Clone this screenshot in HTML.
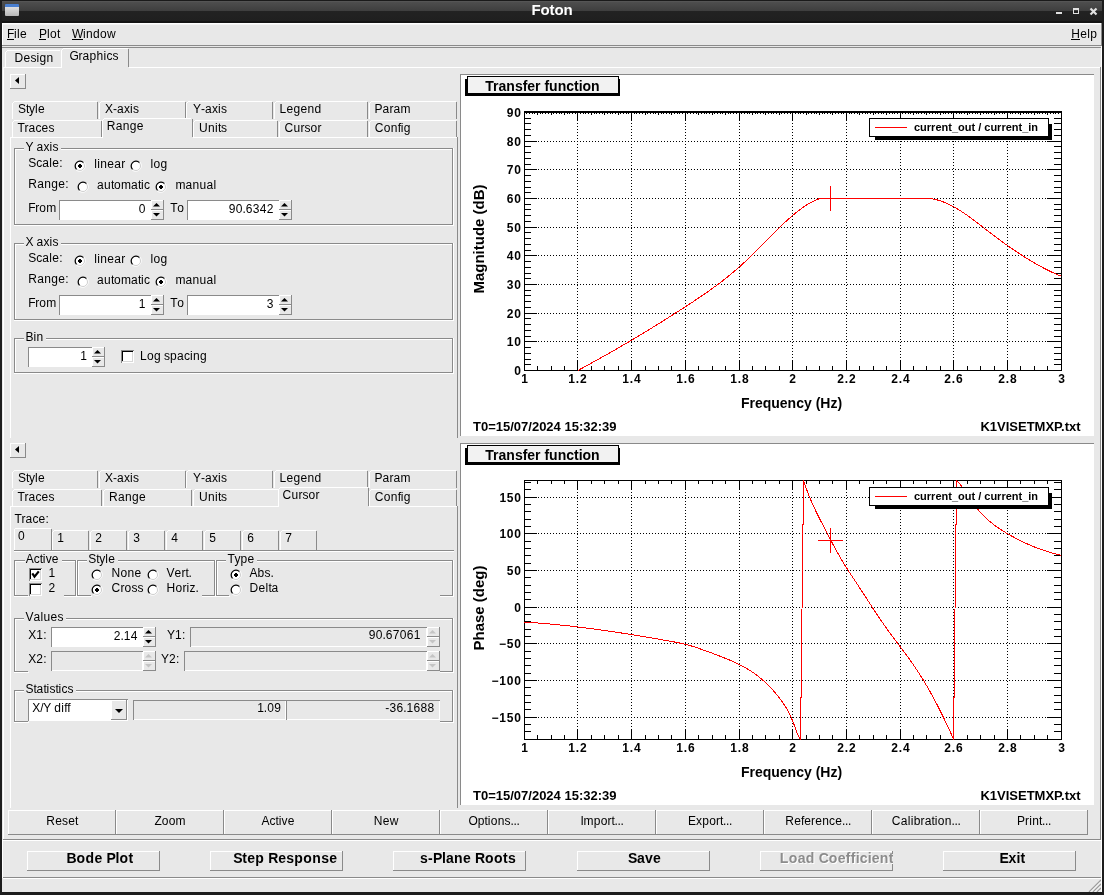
<!DOCTYPE html>
<html><head><meta charset="utf-8"><style>
html,body{margin:0;padding:0;}
body{width:1104px;height:895px;background:#e8e8e8;position:relative;overflow:hidden;font-family:"Liberation Sans", sans-serif;}
body>div{position:absolute;}
div div{position:absolute;}
.t{white-space:nowrap;}
i{display:inline-block;font-style:normal;}
</style></head><body><div id="root" style="left:0;top:0;width:1104px;height:895px;will-change:transform">
<div style="left:0;top:0;width:1104px;height:23px;background:linear-gradient(#1a1a1a 0px,#1a1a1a 1px,#5c5c5c 1px,#4e4e4e 2px,#3e3e3e 11px,#222 11px,#1f1f1f 21px,#151515 21px)"></div>
<div class="t" style="left:252px;width:600px;text-align:center;top:0.72px;font-size:15px;line-height:17.23px;font-weight:bold;color:#fff;"><i style="width:9px">F</i><i style="width:9px">o</i><i style="width:5px">t</i><i style="width:9px">o</i><i style="width:9px">n</i></div>
<div style="left:5px;top:4px;width:14px;height:12px;background:linear-gradient(#4a7fd0 0,#4a7fd0 3px,#e0e0e0 3px,#b8b8b8 12px);border-radius:1px"></div>
<div style="left:1056px;top:12px;width:6px;height:2px;background:#e0e0e0;"></div>
<div style="left:1073px;top:8px;width:4px;height:3px;border:1px solid #e0e0e0;border-top-width:2px"></div>
<svg style="position:absolute;left:1089px;top:7px" width="9" height="9"><path d="M1.5,1.5 L7.5,7.5 M7.5,1.5 L1.5,7.5" stroke="#e0e0e0" stroke-width="2.2"/></svg>
<div style="left:0px;top:0px;width:2px;height:895px;background:#1c1c1c;"></div>
<div style="left:1102px;top:0px;width:2px;height:895px;background:#1c1c1c;"></div>
<div style="left:1101px;top:46px;width:1px;height:846px;background:#ffffff;"></div>
<div style="left:1101px;top:23px;width:1px;height:23px;background:#8a8a8a;"></div>
<div style="left:0px;top:892px;width:1104px;height:3px;background:#1c1c1c;"></div>
<div style="left:2px;top:23px;width:1099px;height:1px;background:#ffffff;"></div>
<div style="left:3px;top:24px;width:1098px;height:1px;background:#f4f4f4;"></div>
<div style="left:2px;top:23px;width:1px;height:22px;background:#ffffff;"></div>
<div style="left:2px;top:45px;width:1099px;height:1px;background:#8a8a8a;"></div>
<div style="left:2px;top:47px;width:1099px;height:1px;background:#8a8a8a;"></div>
<div class="t" style="left:7px;top:27.64px;font-size:12px;line-height:13.79px;color:#000;"><i style="width:7px">F</i><i style="width:3px">i</i><i style="width:3px">l</i><i style="width:7px">e</i></div>
<div class="t" style="left:39px;top:27.64px;font-size:12px;line-height:13.79px;color:#000;"><i style="width:8px">P</i><i style="width:3px">l</i><i style="width:7px">o</i><i style="width:3px">t</i></div>
<div class="t" style="left:72px;top:27.64px;font-size:12px;line-height:13.79px;color:#000;"><i style="width:11px">W</i><i style="width:3px">i</i><i style="width:7px">n</i><i style="width:7px">d</i><i style="width:7px">o</i><i style="width:9px">w</i></div>
<div style="left:7px;top:39px;width:7px;height:1px;background:#000;"></div>
<div style="left:39px;top:39px;width:7px;height:1px;background:#000;"></div>
<div style="left:72px;top:39px;width:11px;height:1px;background:#000;"></div>
<div class="t" style="left:497px;width:600px;text-align:right;top:27.64px;font-size:12px;line-height:13.79px;color:#000;"><i style="width:9px">H</i><i style="width:7px">e</i><i style="width:3px">l</i><i style="width:7px">p</i></div>
<div style="left:1071px;top:39px;width:9px;height:1px;background:#000;"></div>
<div style="left:7px;top:50px;width:53px;height:1px;background:#ffffff;"></div>
<div style="left:6px;top:51px;width:1px;height:1px;background:#ffffff;"></div>
<div style="left:5px;top:52px;width:1px;height:15px;background:#ffffff;"></div>
<div class="t" style="left:14.5px;top:51.64px;font-size:12px;line-height:13.79px;color:#000;"><i style="width:9px">D</i><i style="width:7px">e</i><i style="width:6px">s</i><i style="width:3px">i</i><i style="width:7px">g</i><i style="width:7px">n</i></div>
<div style="left:63px;top:48px;width:65px;height:1px;background:#ffffff;"></div>
<div style="left:62px;top:49px;width:1px;height:1px;background:#ffffff;"></div>
<div style="left:61px;top:50px;width:1px;height:17px;background:#ffffff;"></div>
<div style="left:128px;top:49px;width:1px;height:18px;background:#8a8a8a;"></div>
<div class="t" style="left:69.5px;top:50.14px;font-size:12px;line-height:13.79px;color:#000;"><i style="width:9px">G</i><i style="width:4px">r</i><i style="width:7px">a</i><i style="width:7px">p</i><i style="width:7px">h</i><i style="width:3px">i</i><i style="width:6px">c</i><i style="width:6px">s</i></div>
<div style="left:3px;top:67px;width:59px;height:1px;background:#ffffff;"></div>
<div style="left:129px;top:67px;width:972px;height:1px;background:#ffffff;"></div>
<div style="left:3px;top:67px;width:1px;height:773px;background:#ffffff;"></div>
<div style="left:1100px;top:67px;width:1px;height:773px;background:#8a8a8a;"></div>
<div style="left:3px;top:839px;width:1098px;height:1px;background:#8a8a8a;"></div>
<div style="left:3px;top:840px;width:1098px;height:1px;background:#ffffff;"></div>
<div style="left:2px;top:840px;width:1px;height:38px;background:#ffffff;"></div>
<div style="left:3px;top:877px;width:1098px;height:1px;background:#8a8a8a;"></div>
<div style="left:3px;top:878px;width:1098px;height:1px;background:#ffffff;"></div>
<svg style="position:absolute;left:1088px;top:879px" width="13" height="13"><path d="M13,1 L1,13 M13,5 L5,13 M13,9 L9,13" stroke="#9d9d9d" stroke-width="1.3"/><path d="M13,2.5 L2.5,13 M13,6.5 L6.5,13 M13,10.5 L10.5,13" stroke="#fff" stroke-width="0.8"/></svg>
<div style="left:8px;top:810px;width:108px;height:1px;background:#ffffff;"></div>
<div style="left:8px;top:810px;width:1px;height:25px;background:#ffffff;"></div>
<div style="left:8px;top:834px;width:108px;height:1px;background:#8a8a8a;"></div>
<div style="left:115px;top:810px;width:1px;height:25px;background:#8a8a8a;"></div>
<div class="t" style="left:-238.0px;width:600px;text-align:center;top:815.34px;font-size:12px;line-height:13.79px;color:#000;"><i style="width:9px">R</i><i style="width:7px">e</i><i style="width:6px">s</i><i style="width:7px">e</i><i style="width:3px">t</i></div>
<div style="left:116px;top:810px;width:108px;height:1px;background:#ffffff;"></div>
<div style="left:116px;top:810px;width:1px;height:25px;background:#ffffff;"></div>
<div style="left:116px;top:834px;width:108px;height:1px;background:#8a8a8a;"></div>
<div style="left:223px;top:810px;width:1px;height:25px;background:#8a8a8a;"></div>
<div class="t" style="left:-130.0px;width:600px;text-align:center;top:815.34px;font-size:12px;line-height:13.79px;color:#000;"><i style="width:7px">Z</i><i style="width:7px">o</i><i style="width:7px">o</i><i style="width:10px">m</i></div>
<div style="left:224px;top:810px;width:108px;height:1px;background:#ffffff;"></div>
<div style="left:224px;top:810px;width:1px;height:25px;background:#ffffff;"></div>
<div style="left:224px;top:834px;width:108px;height:1px;background:#8a8a8a;"></div>
<div style="left:331px;top:810px;width:1px;height:25px;background:#8a8a8a;"></div>
<div class="t" style="left:-22.0px;width:600px;text-align:center;top:815.34px;font-size:12px;line-height:13.79px;color:#000;"><i style="width:8px">A</i><i style="width:6px">c</i><i style="width:3px">t</i><i style="width:3px">i</i><i style="width:6px">v</i><i style="width:7px">e</i></div>
<div style="left:332px;top:810px;width:108px;height:1px;background:#ffffff;"></div>
<div style="left:332px;top:810px;width:1px;height:25px;background:#ffffff;"></div>
<div style="left:332px;top:834px;width:108px;height:1px;background:#8a8a8a;"></div>
<div style="left:439px;top:810px;width:1px;height:25px;background:#8a8a8a;"></div>
<div class="t" style="left:86.0px;width:600px;text-align:center;top:815.34px;font-size:12px;line-height:13.79px;color:#000;"><i style="width:9px">N</i><i style="width:7px">e</i><i style="width:9px">w</i></div>
<div style="left:440px;top:810px;width:108px;height:1px;background:#ffffff;"></div>
<div style="left:440px;top:810px;width:1px;height:25px;background:#ffffff;"></div>
<div style="left:440px;top:834px;width:108px;height:1px;background:#8a8a8a;"></div>
<div style="left:547px;top:810px;width:1px;height:25px;background:#8a8a8a;"></div>
<div class="t" style="left:194.0px;width:600px;text-align:center;top:815.34px;font-size:12px;line-height:13.79px;color:#000;"><i style="width:9px">O</i><i style="width:7px">p</i><i style="width:3px">t</i><i style="width:3px">i</i><i style="width:7px">o</i><i style="width:7px">n</i><i style="width:6px">s</i><i style="width:3px">.</i><i style="width:3px">.</i><i style="width:3px">.</i></div>
<div style="left:548px;top:810px;width:108px;height:1px;background:#ffffff;"></div>
<div style="left:548px;top:810px;width:1px;height:25px;background:#ffffff;"></div>
<div style="left:548px;top:834px;width:108px;height:1px;background:#8a8a8a;"></div>
<div style="left:655px;top:810px;width:1px;height:25px;background:#8a8a8a;"></div>
<div class="t" style="left:302.0px;width:600px;text-align:center;top:815.34px;font-size:12px;line-height:13.79px;color:#000;"><i style="width:3px">I</i><i style="width:10px">m</i><i style="width:7px">p</i><i style="width:7px">o</i><i style="width:4px">r</i><i style="width:3px">t</i><i style="width:3px">.</i><i style="width:3px">.</i><i style="width:3px">.</i></div>
<div style="left:656px;top:810px;width:108px;height:1px;background:#ffffff;"></div>
<div style="left:656px;top:810px;width:1px;height:25px;background:#ffffff;"></div>
<div style="left:656px;top:834px;width:108px;height:1px;background:#8a8a8a;"></div>
<div style="left:763px;top:810px;width:1px;height:25px;background:#8a8a8a;"></div>
<div class="t" style="left:410.0px;width:600px;text-align:center;top:815.34px;font-size:12px;line-height:13.79px;color:#000;"><i style="width:8px">E</i><i style="width:6px">x</i><i style="width:7px">p</i><i style="width:7px">o</i><i style="width:4px">r</i><i style="width:3px">t</i><i style="width:3px">.</i><i style="width:3px">.</i><i style="width:3px">.</i></div>
<div style="left:764px;top:810px;width:108px;height:1px;background:#ffffff;"></div>
<div style="left:764px;top:810px;width:1px;height:25px;background:#ffffff;"></div>
<div style="left:764px;top:834px;width:108px;height:1px;background:#8a8a8a;"></div>
<div style="left:871px;top:810px;width:1px;height:25px;background:#8a8a8a;"></div>
<div class="t" style="left:518.0px;width:600px;text-align:center;top:815.34px;font-size:12px;line-height:13.79px;color:#000;"><i style="width:9px">R</i><i style="width:7px">e</i><i style="width:3px">f</i><i style="width:7px">e</i><i style="width:4px">r</i><i style="width:7px">e</i><i style="width:7px">n</i><i style="width:6px">c</i><i style="width:7px">e</i><i style="width:3px">.</i><i style="width:3px">.</i><i style="width:3px">.</i></div>
<div style="left:872px;top:810px;width:108px;height:1px;background:#ffffff;"></div>
<div style="left:872px;top:810px;width:1px;height:25px;background:#ffffff;"></div>
<div style="left:872px;top:834px;width:108px;height:1px;background:#8a8a8a;"></div>
<div style="left:979px;top:810px;width:1px;height:25px;background:#8a8a8a;"></div>
<div class="t" style="left:626.0px;width:600px;text-align:center;top:815.34px;font-size:12px;line-height:13.79px;color:#000;"><i style="width:9px">C</i><i style="width:7px">a</i><i style="width:3px">l</i><i style="width:3px">i</i><i style="width:7px">b</i><i style="width:4px">r</i><i style="width:7px">a</i><i style="width:3px">t</i><i style="width:3px">i</i><i style="width:7px">o</i><i style="width:7px">n</i><i style="width:3px">.</i><i style="width:3px">.</i><i style="width:3px">.</i></div>
<div style="left:980px;top:810px;width:108px;height:1px;background:#ffffff;"></div>
<div style="left:980px;top:810px;width:1px;height:25px;background:#ffffff;"></div>
<div style="left:980px;top:834px;width:108px;height:1px;background:#8a8a8a;"></div>
<div style="left:1087px;top:810px;width:1px;height:25px;background:#8a8a8a;"></div>
<div class="t" style="left:734.0px;width:600px;text-align:center;top:815.34px;font-size:12px;line-height:13.79px;color:#000;"><i style="width:8px">P</i><i style="width:4px">r</i><i style="width:3px">i</i><i style="width:7px">n</i><i style="width:3px">t</i><i style="width:3px">.</i><i style="width:3px">.</i><i style="width:3px">.</i></div>
<div style="left:27px;top:851px;width:133px;height:1px;background:#ffffff;"></div>
<div style="left:27px;top:851px;width:1px;height:20px;background:#ffffff;"></div>
<div style="left:27px;top:870px;width:133px;height:1px;background:#8a8a8a;"></div>
<div style="left:159px;top:851px;width:1px;height:20px;background:#8a8a8a;"></div>
<div class="t" style="left:66.5px;top:850.23px;font-size:14px;line-height:16.09px;font-weight:bold;color:#000;"><i style="width:10px">B</i><i style="width:9px">o</i><i style="width:9px">d</i><i style="width:8px">e</i><i style="width:4px">&nbsp;</i><i style="width:9px">P</i><i style="width:4px">l</i><i style="width:9px">o</i><i style="width:5px">t</i></div>
<div style="left:210px;top:851px;width:133px;height:1px;background:#ffffff;"></div>
<div style="left:210px;top:851px;width:1px;height:20px;background:#ffffff;"></div>
<div style="left:210px;top:870px;width:133px;height:1px;background:#8a8a8a;"></div>
<div style="left:342px;top:851px;width:1px;height:20px;background:#8a8a8a;"></div>
<div class="t" style="left:233.25px;top:850.23px;font-size:14px;line-height:16.09px;font-weight:bold;color:#000;"><i style="width:9px">S</i><i style="width:5px">t</i><i style="width:8px">e</i><i style="width:9px">p</i><i style="width:4px">&nbsp;</i><i style="width:10px">R</i><i style="width:8px">e</i><i style="width:8px">s</i><i style="width:9px">p</i><i style="width:9px">o</i><i style="width:9px">n</i><i style="width:8px">s</i><i style="width:8px">e</i></div>
<div style="left:393px;top:851px;width:133px;height:1px;background:#ffffff;"></div>
<div style="left:393px;top:851px;width:1px;height:20px;background:#ffffff;"></div>
<div style="left:393px;top:870px;width:133px;height:1px;background:#8a8a8a;"></div>
<div style="left:525px;top:851px;width:1px;height:20px;background:#8a8a8a;"></div>
<div class="t" style="left:420px;top:850.23px;font-size:14px;line-height:16.09px;font-weight:bold;color:#000;"><i style="width:8px">s</i><i style="width:5px">-</i><i style="width:9px">P</i><i style="width:4px">l</i><i style="width:8px">a</i><i style="width:9px">n</i><i style="width:8px">e</i><i style="width:4px">&nbsp;</i><i style="width:10px">R</i><i style="width:9px">o</i><i style="width:9px">o</i><i style="width:5px">t</i><i style="width:8px">s</i></div>
<div style="left:577px;top:851px;width:133px;height:1px;background:#ffffff;"></div>
<div style="left:577px;top:851px;width:1px;height:20px;background:#ffffff;"></div>
<div style="left:577px;top:870px;width:133px;height:1px;background:#8a8a8a;"></div>
<div style="left:709px;top:851px;width:1px;height:20px;background:#8a8a8a;"></div>
<div class="t" style="left:628px;top:850.23px;font-size:14px;line-height:16.09px;font-weight:bold;color:#000;"><i style="width:9px">S</i><i style="width:8px">a</i><i style="width:8px">v</i><i style="width:8px">e</i></div>
<div style="left:760px;top:851px;width:133px;height:1px;background:#ffffff;"></div>
<div style="left:760px;top:851px;width:1px;height:20px;background:#ffffff;"></div>
<div style="left:760px;top:870px;width:133px;height:1px;background:#8a8a8a;"></div>
<div style="left:892px;top:851px;width:1px;height:20px;background:#8a8a8a;"></div>
<div style="left:760px;top:851px;width:133px;height:19px;overflow:hidden"><div class="t" style="left:20.70px;top:0.23px;font-size:14px;line-height:16.1px;font-weight:bold;color:#fff;white-space:nowrap"><i style="width:9px">L</i><i style="width:9px">o</i><i style="width:8px">a</i><i style="width:9px">d</i><i style="width:4px">&nbsp;</i><i style="width:10px">C</i><i style="width:9px">o</i><i style="width:8px">e</i><i style="width:5px">f</i><i style="width:5px">f</i><i style="width:4px">i</i><i style="width:8px">c</i><i style="width:4px">i</i><i style="width:8px">e</i><i style="width:9px">n</i><i style="width:5px">t</i></div><div class="t" style="left:19.70px;top:-0.77px;font-size:14px;line-height:16.1px;font-weight:bold;color:#8c8c8c;white-space:nowrap"><i style="width:9px">L</i><i style="width:9px">o</i><i style="width:8px">a</i><i style="width:9px">d</i><i style="width:4px">&nbsp;</i><i style="width:10px">C</i><i style="width:9px">o</i><i style="width:8px">e</i><i style="width:5px">f</i><i style="width:5px">f</i><i style="width:4px">i</i><i style="width:8px">c</i><i style="width:4px">i</i><i style="width:8px">e</i><i style="width:9px">n</i><i style="width:5px">t</i></div></div>
<div style="left:943px;top:851px;width:133px;height:1px;background:#ffffff;"></div>
<div style="left:943px;top:851px;width:1px;height:20px;background:#ffffff;"></div>
<div style="left:943px;top:870px;width:133px;height:1px;background:#8a8a8a;"></div>
<div style="left:1075px;top:851px;width:1px;height:20px;background:#8a8a8a;"></div>
<div class="t" style="left:999.5px;top:850.23px;font-size:14px;line-height:16.09px;font-weight:bold;color:#000;"><i style="width:9px">E</i><i style="width:8px">x</i><i style="width:4px">i</i><i style="width:5px">t</i></div>
<div style="left:10px;top:74px;width:16px;height:1px;background:#ffffff;"></div>
<div style="left:10px;top:74px;width:1px;height:15px;background:#ffffff;"></div>
<div style="left:10px;top:88px;width:16px;height:1px;background:#8a8a8a;"></div>
<div style="left:25px;top:74px;width:1px;height:15px;background:#8a8a8a;"></div>
<svg style="position:absolute;left:10px;top:74px" width="16" height="15"><path d="M9,3 L9,10 L5,6.5 Z" fill="#000"/></svg>
<div style="left:14px;top:101px;width:83px;height:1px;background:#ffffff;"></div>
<div style="left:13px;top:102px;width:1px;height:1px;background:#ffffff;"></div>
<div style="left:12px;top:103px;width:1px;height:16px;background:#ffffff;"></div>
<div style="left:97px;top:102px;width:1px;height:17px;background:#8a8a8a;"></div>
<div class="t" style="left:18px;top:102.94px;font-size:12px;line-height:13.79px;color:#000;"><i style="width:8px">S</i><i style="width:3px">t</i><i style="width:6px">y</i><i style="width:3px">l</i><i style="width:7px">e</i></div>
<div style="left:101px;top:101px;width:84px;height:1px;background:#ffffff;"></div>
<div style="left:100px;top:102px;width:1px;height:1px;background:#ffffff;"></div>
<div style="left:99px;top:103px;width:1px;height:16px;background:#ffffff;"></div>
<div style="left:185px;top:102px;width:1px;height:17px;background:#8a8a8a;"></div>
<div class="t" style="left:105px;top:102.94px;font-size:12px;line-height:13.79px;color:#000;"><i style="width:8px">X</i><i style="width:4px">-</i><i style="width:7px">a</i><i style="width:6px">x</i><i style="width:3px">i</i><i style="width:6px">s</i></div>
<div style="left:188px;top:101px;width:84px;height:1px;background:#ffffff;"></div>
<div style="left:187px;top:102px;width:1px;height:1px;background:#ffffff;"></div>
<div style="left:186px;top:103px;width:1px;height:16px;background:#ffffff;"></div>
<div style="left:272px;top:102px;width:1px;height:17px;background:#8a8a8a;"></div>
<div class="t" style="left:193px;top:102.94px;font-size:12px;line-height:13.79px;color:#000;"><i style="width:8px">Y</i><i style="width:4px">-</i><i style="width:7px">a</i><i style="width:6px">x</i><i style="width:3px">i</i><i style="width:6px">s</i></div>
<div style="left:276px;top:101px;width:91px;height:1px;background:#ffffff;"></div>
<div style="left:275px;top:102px;width:1px;height:1px;background:#ffffff;"></div>
<div style="left:274px;top:103px;width:1px;height:16px;background:#ffffff;"></div>
<div style="left:367px;top:102px;width:1px;height:17px;background:#8a8a8a;"></div>
<div class="t" style="left:279.5px;top:102.94px;font-size:12px;line-height:13.79px;color:#000;"><i style="width:7px">L</i><i style="width:7px">e</i><i style="width:7px">g</i><i style="width:7px">e</i><i style="width:7px">n</i><i style="width:7px">d</i></div>
<div style="left:371px;top:101px;width:85px;height:1px;background:#ffffff;"></div>
<div style="left:370px;top:102px;width:1px;height:1px;background:#ffffff;"></div>
<div style="left:369px;top:103px;width:1px;height:16px;background:#ffffff;"></div>
<div style="left:456px;top:102px;width:1px;height:17px;background:#8a8a8a;"></div>
<div class="t" style="left:374.5px;top:102.94px;font-size:12px;line-height:13.79px;color:#000;"><i style="width:8px">P</i><i style="width:7px">a</i><i style="width:4px">r</i><i style="width:7px">a</i><i style="width:10px">m</i></div>
<div style="left:14px;top:120px;width:87px;height:1px;background:#ffffff;"></div>
<div style="left:13px;top:121px;width:1px;height:1px;background:#ffffff;"></div>
<div style="left:12px;top:122px;width:1px;height:15px;background:#ffffff;"></div>
<div style="left:101px;top:121px;width:1px;height:16px;background:#8a8a8a;"></div>
<div class="t" style="left:17.5px;top:121.84px;font-size:12px;line-height:13.79px;color:#000;"><i style="width:7px">T</i><i style="width:4px">r</i><i style="width:7px">a</i><i style="width:6px">c</i><i style="width:7px">e</i><i style="width:6px">s</i></div>
<div style="left:195px;top:120px;width:82px;height:1px;background:#ffffff;"></div>
<div style="left:194px;top:121px;width:1px;height:1px;background:#ffffff;"></div>
<div style="left:193px;top:122px;width:1px;height:15px;background:#ffffff;"></div>
<div style="left:277px;top:121px;width:1px;height:16px;background:#8a8a8a;"></div>
<div class="t" style="left:199px;top:121.84px;font-size:12px;line-height:13.79px;color:#000;"><i style="width:9px">U</i><i style="width:7px">n</i><i style="width:3px">i</i><i style="width:3px">t</i><i style="width:6px">s</i></div>
<div style="left:281px;top:120px;width:86px;height:1px;background:#ffffff;"></div>
<div style="left:280px;top:121px;width:1px;height:1px;background:#ffffff;"></div>
<div style="left:279px;top:122px;width:1px;height:15px;background:#ffffff;"></div>
<div style="left:367px;top:121px;width:1px;height:16px;background:#8a8a8a;"></div>
<div class="t" style="left:284.6px;top:121.84px;font-size:12px;line-height:13.79px;color:#000;"><i style="width:9px">C</i><i style="width:7px">u</i><i style="width:4px">r</i><i style="width:6px">s</i><i style="width:7px">o</i><i style="width:4px">r</i></div>
<div style="left:371px;top:120px;width:85px;height:1px;background:#ffffff;"></div>
<div style="left:370px;top:121px;width:1px;height:1px;background:#ffffff;"></div>
<div style="left:369px;top:122px;width:1px;height:15px;background:#ffffff;"></div>
<div style="left:456px;top:121px;width:1px;height:16px;background:#8a8a8a;"></div>
<div class="t" style="left:374.7px;top:121.84px;font-size:12px;line-height:13.79px;color:#000;"><i style="width:9px">C</i><i style="width:7px">o</i><i style="width:7px">n</i><i style="width:3px">f</i><i style="width:3px">i</i><i style="width:7px">g</i></div>
<div style="left:104px;top:118px;width:87px;height:1px;background:#ffffff;"></div>
<div style="left:103px;top:119px;width:1px;height:1px;background:#ffffff;"></div>
<div style="left:102px;top:120px;width:1px;height:18px;background:#ffffff;"></div>
<div style="left:192px;top:119px;width:1px;height:18px;background:#8a8a8a;"></div>
<div class="t" style="left:106.7px;top:120.34px;font-size:12px;line-height:13.79px;color:#000;"><i style="width:9px">R</i><i style="width:7px">a</i><i style="width:7px">n</i><i style="width:7px">g</i><i style="width:7px">e</i></div>
<div style="left:10px;top:137px;width:92px;height:1px;background:#ffffff;"></div>
<div style="left:193px;top:137px;width:265px;height:1px;background:#ffffff;"></div>
<div style="left:10px;top:137px;width:1px;height:301px;background:#ffffff;"></div>
<div style="left:457px;top:137px;width:1px;height:301px;background:#8a8a8a;"></div>
<div style="left:14px;top:148px;width:10.399999999999999px;height:1px;background:#8a8a8a;"></div>
<div style="left:15px;top:149px;width:9.399999999999999px;height:1px;background:#ffffff;"></div>
<div style="left:61.4px;top:148px;width:391.6px;height:1px;background:#8a8a8a;"></div>
<div style="left:61.4px;top:149px;width:392.6px;height:1px;background:#ffffff;"></div>
<div style="left:14px;top:148px;width:1px;height:77px;background:#8a8a8a;"></div>
<div style="left:15px;top:149px;width:1px;height:76px;background:#ffffff;"></div>
<div style="left:452px;top:148px;width:1px;height:77px;background:#8a8a8a;"></div>
<div style="left:453px;top:148px;width:1px;height:78px;background:#ffffff;"></div>
<div style="left:14px;top:224px;width:439px;height:1px;background:#8a8a8a;"></div>
<div style="left:14px;top:225px;width:440px;height:1px;background:#ffffff;"></div>
<div class="t" style="left:25.4px;top:140.64px;font-size:12px;line-height:13.79px;color:#000;"><i style="width:8px">Y</i><i style="width:3px">&nbsp;</i><i style="width:7px">a</i><i style="width:6px">x</i><i style="width:3px">i</i><i style="width:6px">s</i></div>
<div class="t" style="left:28.3px;top:157.14px;font-size:12px;line-height:13.79px;color:#000;"><i style="width:8px">S</i><i style="width:6px">c</i><i style="width:7px">a</i><i style="width:3px">l</i><i style="width:7px">e</i><i style="width:3px">:</i></div>
<svg style="position:absolute;left:74px;top:160px" width="13" height="13" viewBox="0 0 13 13"><circle cx="6" cy="6" r="5" fill="#fff"/><path d="M2.0,9.9 A5.6,5.6 0 0 1 9.9,2.0" fill="none" stroke="#d4d4d4" stroke-width="1"/><path d="M9.9,2.0 A5.6,5.6 0 0 1 2.0,9.9" fill="none" stroke="#fff" stroke-width="1"/><path d="M2.6,9.4 A4.8,4.8 0 0 1 9.4,2.6" fill="none" stroke="#000" stroke-width="1.2"/><path d="M9.2,2.8 A4.5,4.5 0 0 1 2.8,9.2" fill="none" stroke="#c8c8c8" stroke-width="0.9"/><path d="M5,4 H7 V5 H8 V7 H7 V8 H5 V7 H4 V5 H5 Z" fill="#000"/></svg>
<div class="t" style="left:94.2px;top:158.14px;font-size:12px;line-height:13.79px;color:#000;"><i style="width:3px">l</i><i style="width:3px">i</i><i style="width:7px">n</i><i style="width:7px">e</i><i style="width:7px">a</i><i style="width:4px">r</i></div>
<svg style="position:absolute;left:130px;top:160px" width="13" height="13" viewBox="0 0 13 13"><circle cx="6" cy="6" r="5" fill="#fff"/><path d="M2.0,9.9 A5.6,5.6 0 0 1 9.9,2.0" fill="none" stroke="#d4d4d4" stroke-width="1"/><path d="M9.9,2.0 A5.6,5.6 0 0 1 2.0,9.9" fill="none" stroke="#fff" stroke-width="1"/><path d="M2.6,9.4 A4.8,4.8 0 0 1 9.4,2.6" fill="none" stroke="#000" stroke-width="1.2"/><path d="M9.2,2.8 A4.5,4.5 0 0 1 2.8,9.2" fill="none" stroke="#c8c8c8" stroke-width="0.9"/></svg>
<div class="t" style="left:150.5px;top:158.14px;font-size:12px;line-height:13.79px;color:#000;"><i style="width:3px">l</i><i style="width:7px">o</i><i style="width:7px">g</i></div>
<div class="t" style="left:28.3px;top:178.44px;font-size:12px;line-height:13.79px;color:#000;"><i style="width:9px">R</i><i style="width:7px">a</i><i style="width:7px">n</i><i style="width:7px">g</i><i style="width:7px">e</i><i style="width:3px">:</i></div>
<svg style="position:absolute;left:77px;top:181px" width="13" height="13" viewBox="0 0 13 13"><circle cx="6" cy="6" r="5" fill="#fff"/><path d="M2.0,9.9 A5.6,5.6 0 0 1 9.9,2.0" fill="none" stroke="#d4d4d4" stroke-width="1"/><path d="M9.9,2.0 A5.6,5.6 0 0 1 2.0,9.9" fill="none" stroke="#fff" stroke-width="1"/><path d="M2.6,9.4 A4.8,4.8 0 0 1 9.4,2.6" fill="none" stroke="#000" stroke-width="1.2"/><path d="M9.2,2.8 A4.5,4.5 0 0 1 2.8,9.2" fill="none" stroke="#c8c8c8" stroke-width="0.9"/></svg>
<div class="t" style="left:97.1px;top:179.44px;font-size:12px;line-height:13.79px;color:#000;"><i style="width:7px">a</i><i style="width:7px">u</i><i style="width:3px">t</i><i style="width:7px">o</i><i style="width:10px">m</i><i style="width:7px">a</i><i style="width:3px">t</i><i style="width:3px">i</i><i style="width:6px">c</i></div>
<svg style="position:absolute;left:155px;top:181px" width="13" height="13" viewBox="0 0 13 13"><circle cx="6" cy="6" r="5" fill="#fff"/><path d="M2.0,9.9 A5.6,5.6 0 0 1 9.9,2.0" fill="none" stroke="#d4d4d4" stroke-width="1"/><path d="M9.9,2.0 A5.6,5.6 0 0 1 2.0,9.9" fill="none" stroke="#fff" stroke-width="1"/><path d="M2.6,9.4 A4.8,4.8 0 0 1 9.4,2.6" fill="none" stroke="#000" stroke-width="1.2"/><path d="M9.2,2.8 A4.5,4.5 0 0 1 2.8,9.2" fill="none" stroke="#c8c8c8" stroke-width="0.9"/><path d="M5,4 H7 V5 H8 V7 H7 V8 H5 V7 H4 V5 H5 Z" fill="#000"/></svg>
<div class="t" style="left:175.4px;top:179.44px;font-size:12px;line-height:13.79px;color:#000;"><i style="width:10px">m</i><i style="width:7px">a</i><i style="width:7px">n</i><i style="width:7px">u</i><i style="width:7px">a</i><i style="width:3px">l</i></div>
<div class="t" style="left:28.3px;top:201.94px;font-size:12px;line-height:13.79px;color:#000;"><i style="width:7px">F</i><i style="width:4px">r</i><i style="width:7px">o</i><i style="width:10px">m</i></div>
<div style="left:59px;top:200px;width:92px;height:20px;background:#fff;"></div>
<div style="left:59px;top:219px;width:92px;height:1px;background:#ffffff;"></div>
<div style="left:150px;top:200px;width:1px;height:20px;background:#ffffff;"></div>
<div style="left:59px;top:200px;width:92px;height:1px;background:#8a8a8a;"></div>
<div style="left:59px;top:200px;width:1px;height:20px;background:#8a8a8a;"></div>
<div class="t" style="left:-454.5px;width:600px;text-align:right;top:203.14px;font-size:12px;line-height:13.79px;color:#000;"><i style="width:7px">0</i></div>
<div style="left:151px;top:200px;width:13px;height:1px;background:#ffffff;"></div>
<div style="left:151px;top:200px;width:1px;height:10px;background:#ffffff;"></div>
<div style="left:151px;top:209px;width:13px;height:1px;background:#8a8a8a;"></div>
<div style="left:163px;top:200px;width:1px;height:10px;background:#8a8a8a;"></div>
<div style="left:151px;top:210px;width:13px;height:1px;background:#ffffff;"></div>
<div style="left:151px;top:210px;width:1px;height:10px;background:#ffffff;"></div>
<div style="left:151px;top:219px;width:13px;height:1px;background:#8a8a8a;"></div>
<div style="left:163px;top:210px;width:1px;height:10px;background:#8a8a8a;"></div>
<svg style="position:absolute;left:153.0px;top:202.7px" width="7" height="4.5"><path d="M0,3.5 L3.5,0 L7,3.5 Z" fill="#000"/></svg>
<svg style="position:absolute;left:153.0px;top:213px" width="7" height="4.5"><path d="M0,0 L3.5,3.5 L7,0 Z" fill="#000"/></svg>
<div class="t" style="left:170.3px;top:201.94px;font-size:12px;line-height:13.79px;color:#000;"><i style="width:7px">T</i><i style="width:7px">o</i></div>
<div style="left:187px;top:200px;width:92px;height:20px;background:#fff;"></div>
<div style="left:187px;top:219px;width:92px;height:1px;background:#ffffff;"></div>
<div style="left:278px;top:200px;width:1px;height:20px;background:#ffffff;"></div>
<div style="left:187px;top:200px;width:92px;height:1px;background:#8a8a8a;"></div>
<div style="left:187px;top:200px;width:1px;height:20px;background:#8a8a8a;"></div>
<div class="t" style="left:-326.5px;width:600px;text-align:right;top:203.14px;font-size:12px;line-height:13.79px;color:#000;"><i style="width:7px">9</i><i style="width:7px">0</i><i style="width:3px">.</i><i style="width:7px">6</i><i style="width:7px">3</i><i style="width:7px">4</i><i style="width:7px">2</i></div>
<div style="left:279px;top:200px;width:13px;height:1px;background:#ffffff;"></div>
<div style="left:279px;top:200px;width:1px;height:10px;background:#ffffff;"></div>
<div style="left:279px;top:209px;width:13px;height:1px;background:#8a8a8a;"></div>
<div style="left:291px;top:200px;width:1px;height:10px;background:#8a8a8a;"></div>
<div style="left:279px;top:210px;width:13px;height:1px;background:#ffffff;"></div>
<div style="left:279px;top:210px;width:1px;height:10px;background:#ffffff;"></div>
<div style="left:279px;top:219px;width:13px;height:1px;background:#8a8a8a;"></div>
<div style="left:291px;top:210px;width:1px;height:10px;background:#8a8a8a;"></div>
<svg style="position:absolute;left:281.0px;top:202.7px" width="7" height="4.5"><path d="M0,3.5 L3.5,0 L7,3.5 Z" fill="#000"/></svg>
<svg style="position:absolute;left:281.0px;top:213px" width="7" height="4.5"><path d="M0,0 L3.5,3.5 L7,0 Z" fill="#000"/></svg>
<div style="left:14px;top:243px;width:10.399999999999999px;height:1px;background:#8a8a8a;"></div>
<div style="left:15px;top:244px;width:9.399999999999999px;height:1px;background:#ffffff;"></div>
<div style="left:61.4px;top:243px;width:391.6px;height:1px;background:#8a8a8a;"></div>
<div style="left:61.4px;top:244px;width:392.6px;height:1px;background:#ffffff;"></div>
<div style="left:14px;top:243px;width:1px;height:77px;background:#8a8a8a;"></div>
<div style="left:15px;top:244px;width:1px;height:76px;background:#ffffff;"></div>
<div style="left:452px;top:243px;width:1px;height:77px;background:#8a8a8a;"></div>
<div style="left:453px;top:243px;width:1px;height:78px;background:#ffffff;"></div>
<div style="left:14px;top:319px;width:439px;height:1px;background:#8a8a8a;"></div>
<div style="left:14px;top:320px;width:440px;height:1px;background:#ffffff;"></div>
<div class="t" style="left:25.4px;top:235.64px;font-size:12px;line-height:13.79px;color:#000;"><i style="width:8px">X</i><i style="width:3px">&nbsp;</i><i style="width:7px">a</i><i style="width:6px">x</i><i style="width:3px">i</i><i style="width:6px">s</i></div>
<div class="t" style="left:28.3px;top:252.14px;font-size:12px;line-height:13.79px;color:#000;"><i style="width:8px">S</i><i style="width:6px">c</i><i style="width:7px">a</i><i style="width:3px">l</i><i style="width:7px">e</i><i style="width:3px">:</i></div>
<svg style="position:absolute;left:74px;top:255px" width="13" height="13" viewBox="0 0 13 13"><circle cx="6" cy="6" r="5" fill="#fff"/><path d="M2.0,9.9 A5.6,5.6 0 0 1 9.9,2.0" fill="none" stroke="#d4d4d4" stroke-width="1"/><path d="M9.9,2.0 A5.6,5.6 0 0 1 2.0,9.9" fill="none" stroke="#fff" stroke-width="1"/><path d="M2.6,9.4 A4.8,4.8 0 0 1 9.4,2.6" fill="none" stroke="#000" stroke-width="1.2"/><path d="M9.2,2.8 A4.5,4.5 0 0 1 2.8,9.2" fill="none" stroke="#c8c8c8" stroke-width="0.9"/><path d="M5,4 H7 V5 H8 V7 H7 V8 H5 V7 H4 V5 H5 Z" fill="#000"/></svg>
<div class="t" style="left:94.2px;top:253.14px;font-size:12px;line-height:13.79px;color:#000;"><i style="width:3px">l</i><i style="width:3px">i</i><i style="width:7px">n</i><i style="width:7px">e</i><i style="width:7px">a</i><i style="width:4px">r</i></div>
<svg style="position:absolute;left:130px;top:255px" width="13" height="13" viewBox="0 0 13 13"><circle cx="6" cy="6" r="5" fill="#fff"/><path d="M2.0,9.9 A5.6,5.6 0 0 1 9.9,2.0" fill="none" stroke="#d4d4d4" stroke-width="1"/><path d="M9.9,2.0 A5.6,5.6 0 0 1 2.0,9.9" fill="none" stroke="#fff" stroke-width="1"/><path d="M2.6,9.4 A4.8,4.8 0 0 1 9.4,2.6" fill="none" stroke="#000" stroke-width="1.2"/><path d="M9.2,2.8 A4.5,4.5 0 0 1 2.8,9.2" fill="none" stroke="#c8c8c8" stroke-width="0.9"/></svg>
<div class="t" style="left:150.5px;top:253.14px;font-size:12px;line-height:13.79px;color:#000;"><i style="width:3px">l</i><i style="width:7px">o</i><i style="width:7px">g</i></div>
<div class="t" style="left:28.3px;top:273.44px;font-size:12px;line-height:13.79px;color:#000;"><i style="width:9px">R</i><i style="width:7px">a</i><i style="width:7px">n</i><i style="width:7px">g</i><i style="width:7px">e</i><i style="width:3px">:</i></div>
<svg style="position:absolute;left:77px;top:276px" width="13" height="13" viewBox="0 0 13 13"><circle cx="6" cy="6" r="5" fill="#fff"/><path d="M2.0,9.9 A5.6,5.6 0 0 1 9.9,2.0" fill="none" stroke="#d4d4d4" stroke-width="1"/><path d="M9.9,2.0 A5.6,5.6 0 0 1 2.0,9.9" fill="none" stroke="#fff" stroke-width="1"/><path d="M2.6,9.4 A4.8,4.8 0 0 1 9.4,2.6" fill="none" stroke="#000" stroke-width="1.2"/><path d="M9.2,2.8 A4.5,4.5 0 0 1 2.8,9.2" fill="none" stroke="#c8c8c8" stroke-width="0.9"/></svg>
<div class="t" style="left:97.1px;top:274.44px;font-size:12px;line-height:13.79px;color:#000;"><i style="width:7px">a</i><i style="width:7px">u</i><i style="width:3px">t</i><i style="width:7px">o</i><i style="width:10px">m</i><i style="width:7px">a</i><i style="width:3px">t</i><i style="width:3px">i</i><i style="width:6px">c</i></div>
<svg style="position:absolute;left:155px;top:276px" width="13" height="13" viewBox="0 0 13 13"><circle cx="6" cy="6" r="5" fill="#fff"/><path d="M2.0,9.9 A5.6,5.6 0 0 1 9.9,2.0" fill="none" stroke="#d4d4d4" stroke-width="1"/><path d="M9.9,2.0 A5.6,5.6 0 0 1 2.0,9.9" fill="none" stroke="#fff" stroke-width="1"/><path d="M2.6,9.4 A4.8,4.8 0 0 1 9.4,2.6" fill="none" stroke="#000" stroke-width="1.2"/><path d="M9.2,2.8 A4.5,4.5 0 0 1 2.8,9.2" fill="none" stroke="#c8c8c8" stroke-width="0.9"/><path d="M5,4 H7 V5 H8 V7 H7 V8 H5 V7 H4 V5 H5 Z" fill="#000"/></svg>
<div class="t" style="left:175.4px;top:274.44px;font-size:12px;line-height:13.79px;color:#000;"><i style="width:10px">m</i><i style="width:7px">a</i><i style="width:7px">n</i><i style="width:7px">u</i><i style="width:7px">a</i><i style="width:3px">l</i></div>
<div class="t" style="left:28.3px;top:296.94px;font-size:12px;line-height:13.79px;color:#000;"><i style="width:7px">F</i><i style="width:4px">r</i><i style="width:7px">o</i><i style="width:10px">m</i></div>
<div style="left:59px;top:295px;width:92px;height:20px;background:#fff;"></div>
<div style="left:59px;top:314px;width:92px;height:1px;background:#ffffff;"></div>
<div style="left:150px;top:295px;width:1px;height:20px;background:#ffffff;"></div>
<div style="left:59px;top:295px;width:92px;height:1px;background:#8a8a8a;"></div>
<div style="left:59px;top:295px;width:1px;height:20px;background:#8a8a8a;"></div>
<div class="t" style="left:-454.5px;width:600px;text-align:right;top:298.14px;font-size:12px;line-height:13.79px;color:#000;"><i style="width:7px">1</i></div>
<div style="left:151px;top:295px;width:13px;height:1px;background:#ffffff;"></div>
<div style="left:151px;top:295px;width:1px;height:10px;background:#ffffff;"></div>
<div style="left:151px;top:304px;width:13px;height:1px;background:#8a8a8a;"></div>
<div style="left:163px;top:295px;width:1px;height:10px;background:#8a8a8a;"></div>
<div style="left:151px;top:305px;width:13px;height:1px;background:#ffffff;"></div>
<div style="left:151px;top:305px;width:1px;height:10px;background:#ffffff;"></div>
<div style="left:151px;top:314px;width:13px;height:1px;background:#8a8a8a;"></div>
<div style="left:163px;top:305px;width:1px;height:10px;background:#8a8a8a;"></div>
<svg style="position:absolute;left:153.0px;top:297.7px" width="7" height="4.5"><path d="M0,3.5 L3.5,0 L7,3.5 Z" fill="#000"/></svg>
<svg style="position:absolute;left:153.0px;top:308px" width="7" height="4.5"><path d="M0,0 L3.5,3.5 L7,0 Z" fill="#000"/></svg>
<div class="t" style="left:170.3px;top:296.94px;font-size:12px;line-height:13.79px;color:#000;"><i style="width:7px">T</i><i style="width:7px">o</i></div>
<div style="left:187px;top:295px;width:92px;height:20px;background:#fff;"></div>
<div style="left:187px;top:314px;width:92px;height:1px;background:#ffffff;"></div>
<div style="left:278px;top:295px;width:1px;height:20px;background:#ffffff;"></div>
<div style="left:187px;top:295px;width:92px;height:1px;background:#8a8a8a;"></div>
<div style="left:187px;top:295px;width:1px;height:20px;background:#8a8a8a;"></div>
<div class="t" style="left:-326.5px;width:600px;text-align:right;top:298.14px;font-size:12px;line-height:13.79px;color:#000;"><i style="width:7px">3</i></div>
<div style="left:279px;top:295px;width:13px;height:1px;background:#ffffff;"></div>
<div style="left:279px;top:295px;width:1px;height:10px;background:#ffffff;"></div>
<div style="left:279px;top:304px;width:13px;height:1px;background:#8a8a8a;"></div>
<div style="left:291px;top:295px;width:1px;height:10px;background:#8a8a8a;"></div>
<div style="left:279px;top:305px;width:13px;height:1px;background:#ffffff;"></div>
<div style="left:279px;top:305px;width:1px;height:10px;background:#ffffff;"></div>
<div style="left:279px;top:314px;width:13px;height:1px;background:#8a8a8a;"></div>
<div style="left:291px;top:305px;width:1px;height:10px;background:#8a8a8a;"></div>
<svg style="position:absolute;left:281.0px;top:297.7px" width="7" height="4.5"><path d="M0,3.5 L3.5,0 L7,3.5 Z" fill="#000"/></svg>
<svg style="position:absolute;left:281.0px;top:308px" width="7" height="4.5"><path d="M0,0 L3.5,3.5 L7,0 Z" fill="#000"/></svg>
<div style="left:14px;top:338px;width:10.399999999999999px;height:1px;background:#8a8a8a;"></div>
<div style="left:15px;top:339px;width:9.399999999999999px;height:1px;background:#ffffff;"></div>
<div style="left:46.4px;top:338px;width:406.6px;height:1px;background:#8a8a8a;"></div>
<div style="left:46.4px;top:339px;width:407.6px;height:1px;background:#ffffff;"></div>
<div style="left:14px;top:338px;width:1px;height:35px;background:#8a8a8a;"></div>
<div style="left:15px;top:339px;width:1px;height:34px;background:#ffffff;"></div>
<div style="left:452px;top:338px;width:1px;height:35px;background:#8a8a8a;"></div>
<div style="left:453px;top:338px;width:1px;height:36px;background:#ffffff;"></div>
<div style="left:14px;top:372px;width:439px;height:1px;background:#8a8a8a;"></div>
<div style="left:14px;top:373px;width:440px;height:1px;background:#ffffff;"></div>
<div class="t" style="left:25.4px;top:330.64px;font-size:12px;line-height:13.79px;color:#000;"><i style="width:8px">B</i><i style="width:3px">i</i><i style="width:7px">n</i></div>
<div style="left:28px;top:347px;width:64px;height:20px;background:#fff;"></div>
<div style="left:28px;top:366px;width:64px;height:1px;background:#ffffff;"></div>
<div style="left:91px;top:347px;width:1px;height:20px;background:#ffffff;"></div>
<div style="left:28px;top:347px;width:64px;height:1px;background:#8a8a8a;"></div>
<div style="left:28px;top:347px;width:1px;height:20px;background:#8a8a8a;"></div>
<div class="t" style="left:-513.1px;width:600px;text-align:right;top:350.14px;font-size:12px;line-height:13.79px;color:#000;"><i style="width:7px">1</i></div>
<div style="left:92px;top:347px;width:13px;height:1px;background:#ffffff;"></div>
<div style="left:92px;top:347px;width:1px;height:10px;background:#ffffff;"></div>
<div style="left:92px;top:356px;width:13px;height:1px;background:#8a8a8a;"></div>
<div style="left:104px;top:347px;width:1px;height:10px;background:#8a8a8a;"></div>
<div style="left:92px;top:357px;width:13px;height:1px;background:#ffffff;"></div>
<div style="left:92px;top:357px;width:1px;height:10px;background:#ffffff;"></div>
<div style="left:92px;top:366px;width:13px;height:1px;background:#8a8a8a;"></div>
<div style="left:104px;top:357px;width:1px;height:10px;background:#8a8a8a;"></div>
<svg style="position:absolute;left:94.0px;top:349.7px" width="7" height="4.5"><path d="M0,3.5 L3.5,0 L7,3.5 Z" fill="#000"/></svg>
<svg style="position:absolute;left:94.0px;top:360px" width="7" height="4.5"><path d="M0,0 L3.5,3.5 L7,0 Z" fill="#000"/></svg>
<div style="left:121px;top:350px;width:13px;height:13px;background:#fff;"></div>
<div style="left:121px;top:350px;width:13px;height:1px;background:#8a8a8a;"></div>
<div style="left:121px;top:350px;width:1px;height:13px;background:#8a8a8a;"></div>
<div style="left:122px;top:351px;width:11px;height:1px;background:#000;"></div>
<div style="left:122px;top:351px;width:1px;height:11px;background:#000;"></div>
<div style="left:122px;top:361px;width:11px;height:1px;background:#d8d8d8;"></div>
<div style="left:132px;top:352px;width:1px;height:10px;background:#d8d8d8;"></div>
<div class="t" style="left:140px;top:349.64px;font-size:12px;line-height:13.79px;color:#000;"><i style="width:7px">L</i><i style="width:7px">o</i><i style="width:7px">g</i><i style="width:3px">&nbsp;</i><i style="width:6px">s</i><i style="width:7px">p</i><i style="width:7px">a</i><i style="width:6px">c</i><i style="width:3px">i</i><i style="width:7px">n</i><i style="width:7px">g</i></div>
<div style="left:10px;top:443px;width:16px;height:1px;background:#ffffff;"></div>
<div style="left:10px;top:443px;width:1px;height:15px;background:#ffffff;"></div>
<div style="left:10px;top:457px;width:16px;height:1px;background:#8a8a8a;"></div>
<div style="left:25px;top:443px;width:1px;height:15px;background:#8a8a8a;"></div>
<svg style="position:absolute;left:10px;top:443px" width="16" height="15"><path d="M9,3 L9,10 L5,6.5 Z" fill="#000"/></svg>
<div style="left:14px;top:470px;width:83px;height:1px;background:#ffffff;"></div>
<div style="left:13px;top:471px;width:1px;height:1px;background:#ffffff;"></div>
<div style="left:12px;top:472px;width:1px;height:16px;background:#ffffff;"></div>
<div style="left:97px;top:471px;width:1px;height:17px;background:#8a8a8a;"></div>
<div class="t" style="left:18px;top:471.94px;font-size:12px;line-height:13.79px;color:#000;"><i style="width:8px">S</i><i style="width:3px">t</i><i style="width:6px">y</i><i style="width:3px">l</i><i style="width:7px">e</i></div>
<div style="left:101px;top:470px;width:84px;height:1px;background:#ffffff;"></div>
<div style="left:100px;top:471px;width:1px;height:1px;background:#ffffff;"></div>
<div style="left:99px;top:472px;width:1px;height:16px;background:#ffffff;"></div>
<div style="left:185px;top:471px;width:1px;height:17px;background:#8a8a8a;"></div>
<div class="t" style="left:105px;top:471.94px;font-size:12px;line-height:13.79px;color:#000;"><i style="width:8px">X</i><i style="width:4px">-</i><i style="width:7px">a</i><i style="width:6px">x</i><i style="width:3px">i</i><i style="width:6px">s</i></div>
<div style="left:188px;top:470px;width:84px;height:1px;background:#ffffff;"></div>
<div style="left:187px;top:471px;width:1px;height:1px;background:#ffffff;"></div>
<div style="left:186px;top:472px;width:1px;height:16px;background:#ffffff;"></div>
<div style="left:272px;top:471px;width:1px;height:17px;background:#8a8a8a;"></div>
<div class="t" style="left:193px;top:471.94px;font-size:12px;line-height:13.79px;color:#000;"><i style="width:8px">Y</i><i style="width:4px">-</i><i style="width:7px">a</i><i style="width:6px">x</i><i style="width:3px">i</i><i style="width:6px">s</i></div>
<div style="left:276px;top:470px;width:91px;height:1px;background:#ffffff;"></div>
<div style="left:275px;top:471px;width:1px;height:1px;background:#ffffff;"></div>
<div style="left:274px;top:472px;width:1px;height:16px;background:#ffffff;"></div>
<div style="left:367px;top:471px;width:1px;height:17px;background:#8a8a8a;"></div>
<div class="t" style="left:279.5px;top:471.94px;font-size:12px;line-height:13.79px;color:#000;"><i style="width:7px">L</i><i style="width:7px">e</i><i style="width:7px">g</i><i style="width:7px">e</i><i style="width:7px">n</i><i style="width:7px">d</i></div>
<div style="left:371px;top:470px;width:85px;height:1px;background:#ffffff;"></div>
<div style="left:370px;top:471px;width:1px;height:1px;background:#ffffff;"></div>
<div style="left:369px;top:472px;width:1px;height:16px;background:#ffffff;"></div>
<div style="left:456px;top:471px;width:1px;height:17px;background:#8a8a8a;"></div>
<div class="t" style="left:374.5px;top:471.94px;font-size:12px;line-height:13.79px;color:#000;"><i style="width:8px">P</i><i style="width:7px">a</i><i style="width:4px">r</i><i style="width:7px">a</i><i style="width:10px">m</i></div>
<div style="left:14px;top:489px;width:87px;height:1px;background:#ffffff;"></div>
<div style="left:13px;top:490px;width:1px;height:1px;background:#ffffff;"></div>
<div style="left:12px;top:491px;width:1px;height:15px;background:#ffffff;"></div>
<div style="left:101px;top:490px;width:1px;height:16px;background:#8a8a8a;"></div>
<div class="t" style="left:17.5px;top:490.84px;font-size:12px;line-height:13.79px;color:#000;"><i style="width:7px">T</i><i style="width:4px">r</i><i style="width:7px">a</i><i style="width:6px">c</i><i style="width:7px">e</i><i style="width:6px">s</i></div>
<div style="left:105px;top:489px;width:86px;height:1px;background:#ffffff;"></div>
<div style="left:104px;top:490px;width:1px;height:1px;background:#ffffff;"></div>
<div style="left:103px;top:491px;width:1px;height:15px;background:#ffffff;"></div>
<div style="left:191px;top:490px;width:1px;height:16px;background:#8a8a8a;"></div>
<div class="t" style="left:109px;top:490.84px;font-size:12px;line-height:13.79px;color:#000;"><i style="width:9px">R</i><i style="width:7px">a</i><i style="width:7px">n</i><i style="width:7px">g</i><i style="width:7px">e</i></div>
<div style="left:195px;top:489px;width:83px;height:1px;background:#ffffff;"></div>
<div style="left:194px;top:490px;width:1px;height:1px;background:#ffffff;"></div>
<div style="left:193px;top:491px;width:1px;height:15px;background:#ffffff;"></div>
<div style="left:278px;top:490px;width:1px;height:16px;background:#8a8a8a;"></div>
<div class="t" style="left:199px;top:490.84px;font-size:12px;line-height:13.79px;color:#000;"><i style="width:9px">U</i><i style="width:7px">n</i><i style="width:3px">i</i><i style="width:3px">t</i><i style="width:6px">s</i></div>
<div style="left:371px;top:489px;width:85px;height:1px;background:#ffffff;"></div>
<div style="left:370px;top:490px;width:1px;height:1px;background:#ffffff;"></div>
<div style="left:369px;top:491px;width:1px;height:15px;background:#ffffff;"></div>
<div style="left:456px;top:490px;width:1px;height:16px;background:#8a8a8a;"></div>
<div class="t" style="left:374.7px;top:490.84px;font-size:12px;line-height:13.79px;color:#000;"><i style="width:9px">C</i><i style="width:7px">o</i><i style="width:7px">n</i><i style="width:3px">f</i><i style="width:3px">i</i><i style="width:7px">g</i></div>
<div style="left:280px;top:487px;width:88px;height:1px;background:#ffffff;"></div>
<div style="left:279px;top:488px;width:1px;height:1px;background:#ffffff;"></div>
<div style="left:278px;top:489px;width:1px;height:18px;background:#ffffff;"></div>
<div style="left:368px;top:488px;width:1px;height:18px;background:#8a8a8a;"></div>
<div class="t" style="left:282.4px;top:489.34px;font-size:12px;line-height:13.79px;color:#000;"><i style="width:9px">C</i><i style="width:7px">u</i><i style="width:4px">r</i><i style="width:6px">s</i><i style="width:7px">o</i><i style="width:4px">r</i></div>
<div style="left:10px;top:506px;width:269px;height:1px;background:#ffffff;"></div>
<div style="left:369px;top:506px;width:89px;height:1px;background:#ffffff;"></div>
<div style="left:10px;top:506px;width:1px;height:302px;background:#ffffff;"></div>
<div style="left:457px;top:506px;width:1px;height:302px;background:#8a8a8a;"></div>
<div class="t" style="left:14.5px;top:513.14px;font-size:12px;line-height:13.79px;color:#000;"><i style="width:7px">T</i><i style="width:4px">r</i><i style="width:7px">a</i><i style="width:6px">c</i><i style="width:7px">e</i><i style="width:3px">:</i></div>
<div style="left:15px;top:528px;width:36px;height:1px;background:#ffffff;"></div>
<div style="left:14px;top:529px;width:1px;height:22px;background:#ffffff;"></div>
<div style="left:51px;top:529px;width:1px;height:21px;background:#8a8a8a;"></div>
<div class="t" style="left:18px;top:529.74px;font-size:12px;line-height:13.79px;color:#000;"><i style="width:7px">0</i></div>
<div style="left:54px;top:530px;width:34px;height:1px;background:#ffffff;"></div>
<div style="left:53px;top:531px;width:1px;height:1px;background:#ffffff;"></div>
<div style="left:52px;top:532px;width:1px;height:18px;background:#ffffff;"></div>
<div style="left:88px;top:531px;width:1px;height:19px;background:#8a8a8a;"></div>
<div class="t" style="left:57.3px;top:532.04px;font-size:12px;line-height:13.79px;color:#000;"><i style="width:7px">1</i></div>
<div style="left:92px;top:530px;width:34px;height:1px;background:#ffffff;"></div>
<div style="left:91px;top:531px;width:1px;height:1px;background:#ffffff;"></div>
<div style="left:90px;top:532px;width:1px;height:18px;background:#ffffff;"></div>
<div style="left:126px;top:531px;width:1px;height:19px;background:#8a8a8a;"></div>
<div class="t" style="left:95.3px;top:532.04px;font-size:12px;line-height:13.79px;color:#000;"><i style="width:7px">2</i></div>
<div style="left:130px;top:530px;width:34px;height:1px;background:#ffffff;"></div>
<div style="left:129px;top:531px;width:1px;height:1px;background:#ffffff;"></div>
<div style="left:128px;top:532px;width:1px;height:18px;background:#ffffff;"></div>
<div style="left:164px;top:531px;width:1px;height:19px;background:#8a8a8a;"></div>
<div class="t" style="left:133.3px;top:532.04px;font-size:12px;line-height:13.79px;color:#000;"><i style="width:7px">3</i></div>
<div style="left:168px;top:530px;width:34px;height:1px;background:#ffffff;"></div>
<div style="left:167px;top:531px;width:1px;height:1px;background:#ffffff;"></div>
<div style="left:166px;top:532px;width:1px;height:18px;background:#ffffff;"></div>
<div style="left:202px;top:531px;width:1px;height:19px;background:#8a8a8a;"></div>
<div class="t" style="left:171.3px;top:532.04px;font-size:12px;line-height:13.79px;color:#000;"><i style="width:7px">4</i></div>
<div style="left:206px;top:530px;width:34px;height:1px;background:#ffffff;"></div>
<div style="left:205px;top:531px;width:1px;height:1px;background:#ffffff;"></div>
<div style="left:204px;top:532px;width:1px;height:18px;background:#ffffff;"></div>
<div style="left:240px;top:531px;width:1px;height:19px;background:#8a8a8a;"></div>
<div class="t" style="left:209.3px;top:532.04px;font-size:12px;line-height:13.79px;color:#000;"><i style="width:7px">5</i></div>
<div style="left:244px;top:530px;width:34px;height:1px;background:#ffffff;"></div>
<div style="left:243px;top:531px;width:1px;height:1px;background:#ffffff;"></div>
<div style="left:242px;top:532px;width:1px;height:18px;background:#ffffff;"></div>
<div style="left:278px;top:531px;width:1px;height:19px;background:#8a8a8a;"></div>
<div class="t" style="left:247.3px;top:532.04px;font-size:12px;line-height:13.79px;color:#000;"><i style="width:7px">6</i></div>
<div style="left:282px;top:530px;width:34px;height:1px;background:#ffffff;"></div>
<div style="left:281px;top:531px;width:1px;height:1px;background:#ffffff;"></div>
<div style="left:280px;top:532px;width:1px;height:18px;background:#ffffff;"></div>
<div style="left:316px;top:531px;width:1px;height:19px;background:#8a8a8a;"></div>
<div class="t" style="left:285.3px;top:532.04px;font-size:12px;line-height:13.79px;color:#000;"><i style="width:7px">7</i></div>
<div style="left:14px;top:550px;width:440px;height:1px;background:#8a8a8a;"></div>
<div style="left:14px;top:551px;width:440px;height:1px;background:#ffffff;"></div>
<div style="left:14px;top:560px;width:10.7px;height:1px;background:#8a8a8a;"></div>
<div style="left:15px;top:561px;width:9.7px;height:1px;background:#ffffff;"></div>
<div style="left:61.7px;top:560px;width:14.299999999999997px;height:1px;background:#8a8a8a;"></div>
<div style="left:61.7px;top:561px;width:15.299999999999997px;height:1px;background:#ffffff;"></div>
<div style="left:14px;top:560px;width:1px;height:36px;background:#8a8a8a;"></div>
<div style="left:15px;top:561px;width:1px;height:35px;background:#ffffff;"></div>
<div style="left:75px;top:560px;width:1px;height:36px;background:#8a8a8a;"></div>
<div style="left:76px;top:560px;width:1px;height:37px;background:#ffffff;"></div>
<div style="left:14px;top:595px;width:14px;height:1px;background:#8a8a8a;"></div>
<div style="left:14px;top:596px;width:15px;height:1px;background:#ffffff;"></div>
<div style="left:64px;top:595px;width:12px;height:1px;background:#8a8a8a;"></div>
<div style="left:64px;top:596px;width:13px;height:1px;background:#ffffff;"></div>
<div class="t" style="left:25.7px;top:552.64px;font-size:12px;line-height:13.79px;color:#000;"><i style="width:8px">A</i><i style="width:6px">c</i><i style="width:3px">t</i><i style="width:3px">i</i><i style="width:6px">v</i><i style="width:7px">e</i></div>
<div style="left:29px;top:568px;width:13px;height:13px;background:#fff;"></div>
<div style="left:29px;top:568px;width:13px;height:1px;background:#8a8a8a;"></div>
<div style="left:29px;top:568px;width:1px;height:13px;background:#8a8a8a;"></div>
<div style="left:30px;top:569px;width:11px;height:1px;background:#000;"></div>
<div style="left:30px;top:569px;width:1px;height:11px;background:#000;"></div>
<div style="left:30px;top:579px;width:11px;height:1px;background:#d8d8d8;"></div>
<div style="left:40px;top:570px;width:1px;height:10px;background:#d8d8d8;"></div>
<svg style="position:absolute;left:29px;top:568px" width="13" height="13"><path d="M3.3,5.4 L5.5,8.6 L9.8,3.4" fill="none" stroke="#000" stroke-width="2.2"/></svg>
<div class="t" style="left:48.6px;top:566.64px;font-size:12px;line-height:13.79px;color:#000;"><i style="width:7px">1</i></div>
<div style="left:29px;top:583px;width:13px;height:13px;background:#fff;"></div>
<div style="left:29px;top:583px;width:13px;height:1px;background:#8a8a8a;"></div>
<div style="left:29px;top:583px;width:1px;height:13px;background:#8a8a8a;"></div>
<div style="left:30px;top:584px;width:11px;height:1px;background:#000;"></div>
<div style="left:30px;top:584px;width:1px;height:11px;background:#000;"></div>
<div style="left:30px;top:594px;width:11px;height:1px;background:#d8d8d8;"></div>
<div style="left:40px;top:585px;width:1px;height:10px;background:#d8d8d8;"></div>
<div class="t" style="left:48.6px;top:581.74px;font-size:12px;line-height:13.79px;color:#000;"><i style="width:7px">2</i></div>
<div style="left:77px;top:560px;width:10.299999999999997px;height:1px;background:#8a8a8a;"></div>
<div style="left:78px;top:561px;width:9.299999999999997px;height:1px;background:#ffffff;"></div>
<div style="left:118.3px;top:560px;width:96.7px;height:1px;background:#8a8a8a;"></div>
<div style="left:118.3px;top:561px;width:97.7px;height:1px;background:#ffffff;"></div>
<div style="left:77px;top:560px;width:1px;height:36px;background:#8a8a8a;"></div>
<div style="left:78px;top:561px;width:1px;height:35px;background:#ffffff;"></div>
<div style="left:214px;top:560px;width:1px;height:36px;background:#8a8a8a;"></div>
<div style="left:215px;top:560px;width:1px;height:37px;background:#ffffff;"></div>
<div style="left:77px;top:595px;width:14px;height:1px;background:#8a8a8a;"></div>
<div style="left:77px;top:596px;width:15px;height:1px;background:#ffffff;"></div>
<div style="left:202px;top:595px;width:13px;height:1px;background:#8a8a8a;"></div>
<div style="left:202px;top:596px;width:14px;height:1px;background:#ffffff;"></div>
<div class="t" style="left:88.3px;top:552.64px;font-size:12px;line-height:13.79px;color:#000;"><i style="width:8px">S</i><i style="width:3px">t</i><i style="width:6px">y</i><i style="width:3px">l</i><i style="width:7px">e</i></div>
<svg style="position:absolute;left:91px;top:569px" width="13" height="13" viewBox="0 0 13 13"><circle cx="6" cy="6" r="5" fill="#fff"/><path d="M2.0,9.9 A5.6,5.6 0 0 1 9.9,2.0" fill="none" stroke="#d4d4d4" stroke-width="1"/><path d="M9.9,2.0 A5.6,5.6 0 0 1 2.0,9.9" fill="none" stroke="#fff" stroke-width="1"/><path d="M2.6,9.4 A4.8,4.8 0 0 1 9.4,2.6" fill="none" stroke="#000" stroke-width="1.2"/><path d="M9.2,2.8 A4.5,4.5 0 0 1 2.8,9.2" fill="none" stroke="#c8c8c8" stroke-width="0.9"/></svg>
<div class="t" style="left:111.4px;top:567.14px;font-size:12px;line-height:13.79px;color:#000;"><i style="width:9px">N</i><i style="width:7px">o</i><i style="width:7px">n</i><i style="width:7px">e</i></div>
<svg style="position:absolute;left:147px;top:569px" width="13" height="13" viewBox="0 0 13 13"><circle cx="6" cy="6" r="5" fill="#fff"/><path d="M2.0,9.9 A5.6,5.6 0 0 1 9.9,2.0" fill="none" stroke="#d4d4d4" stroke-width="1"/><path d="M9.9,2.0 A5.6,5.6 0 0 1 2.0,9.9" fill="none" stroke="#fff" stroke-width="1"/><path d="M2.6,9.4 A4.8,4.8 0 0 1 9.4,2.6" fill="none" stroke="#000" stroke-width="1.2"/><path d="M9.2,2.8 A4.5,4.5 0 0 1 2.8,9.2" fill="none" stroke="#c8c8c8" stroke-width="0.9"/></svg>
<div class="t" style="left:166.6px;top:567.14px;font-size:12px;line-height:13.79px;color:#000;"><i style="width:8px">V</i><i style="width:7px">e</i><i style="width:4px">r</i><i style="width:3px">t</i><i style="width:3px">.</i></div>
<svg style="position:absolute;left:91px;top:584px" width="13" height="13" viewBox="0 0 13 13"><circle cx="6" cy="6" r="5" fill="#fff"/><path d="M2.0,9.9 A5.6,5.6 0 0 1 9.9,2.0" fill="none" stroke="#d4d4d4" stroke-width="1"/><path d="M9.9,2.0 A5.6,5.6 0 0 1 2.0,9.9" fill="none" stroke="#fff" stroke-width="1"/><path d="M2.6,9.4 A4.8,4.8 0 0 1 9.4,2.6" fill="none" stroke="#000" stroke-width="1.2"/><path d="M9.2,2.8 A4.5,4.5 0 0 1 2.8,9.2" fill="none" stroke="#c8c8c8" stroke-width="0.9"/><path d="M5,4 H7 V5 H8 V7 H7 V8 H5 V7 H4 V5 H5 Z" fill="#000"/></svg>
<div class="t" style="left:111.4px;top:582.14px;font-size:12px;line-height:13.79px;color:#000;"><i style="width:9px">C</i><i style="width:4px">r</i><i style="width:7px">o</i><i style="width:6px">s</i><i style="width:6px">s</i></div>
<svg style="position:absolute;left:147px;top:584px" width="13" height="13" viewBox="0 0 13 13"><circle cx="6" cy="6" r="5" fill="#fff"/><path d="M2.0,9.9 A5.6,5.6 0 0 1 9.9,2.0" fill="none" stroke="#d4d4d4" stroke-width="1"/><path d="M9.9,2.0 A5.6,5.6 0 0 1 2.0,9.9" fill="none" stroke="#fff" stroke-width="1"/><path d="M2.6,9.4 A4.8,4.8 0 0 1 9.4,2.6" fill="none" stroke="#000" stroke-width="1.2"/><path d="M9.2,2.8 A4.5,4.5 0 0 1 2.8,9.2" fill="none" stroke="#c8c8c8" stroke-width="0.9"/></svg>
<div class="t" style="left:166.6px;top:582.14px;font-size:12px;line-height:13.79px;color:#000;"><i style="width:9px">H</i><i style="width:7px">o</i><i style="width:4px">r</i><i style="width:3px">i</i><i style="width:6px">z</i><i style="width:3px">.</i></div>
<div style="left:216px;top:560px;width:10.400000000000006px;height:1px;background:#8a8a8a;"></div>
<div style="left:217px;top:561px;width:9.400000000000006px;height:1px;background:#ffffff;"></div>
<div style="left:257.4px;top:560px;width:195.60000000000002px;height:1px;background:#8a8a8a;"></div>
<div style="left:257.4px;top:561px;width:196.60000000000002px;height:1px;background:#ffffff;"></div>
<div style="left:216px;top:560px;width:1px;height:36px;background:#8a8a8a;"></div>
<div style="left:217px;top:561px;width:1px;height:35px;background:#ffffff;"></div>
<div style="left:452px;top:560px;width:1px;height:36px;background:#8a8a8a;"></div>
<div style="left:453px;top:560px;width:1px;height:37px;background:#ffffff;"></div>
<div style="left:216px;top:595px;width:13px;height:1px;background:#8a8a8a;"></div>
<div style="left:216px;top:596px;width:14px;height:1px;background:#ffffff;"></div>
<div style="left:440px;top:595px;width:13px;height:1px;background:#8a8a8a;"></div>
<div style="left:440px;top:596px;width:14px;height:1px;background:#ffffff;"></div>
<div class="t" style="left:227.4px;top:552.64px;font-size:12px;line-height:13.79px;color:#000;"><i style="width:7px">T</i><i style="width:6px">y</i><i style="width:7px">p</i><i style="width:7px">e</i></div>
<svg style="position:absolute;left:230px;top:569px" width="13" height="13" viewBox="0 0 13 13"><circle cx="6" cy="6" r="5" fill="#fff"/><path d="M2.0,9.9 A5.6,5.6 0 0 1 9.9,2.0" fill="none" stroke="#d4d4d4" stroke-width="1"/><path d="M9.9,2.0 A5.6,5.6 0 0 1 2.0,9.9" fill="none" stroke="#fff" stroke-width="1"/><path d="M2.6,9.4 A4.8,4.8 0 0 1 9.4,2.6" fill="none" stroke="#000" stroke-width="1.2"/><path d="M9.2,2.8 A4.5,4.5 0 0 1 2.8,9.2" fill="none" stroke="#c8c8c8" stroke-width="0.9"/><path d="M5,4 H7 V5 H8 V7 H7 V8 H5 V7 H4 V5 H5 Z" fill="#000"/></svg>
<div class="t" style="left:249.5px;top:567.14px;font-size:12px;line-height:13.79px;color:#000;"><i style="width:8px">A</i><i style="width:7px">b</i><i style="width:6px">s</i><i style="width:3px">.</i></div>
<svg style="position:absolute;left:230px;top:584px" width="13" height="13" viewBox="0 0 13 13"><circle cx="6" cy="6" r="5" fill="#fff"/><path d="M2.0,9.9 A5.6,5.6 0 0 1 9.9,2.0" fill="none" stroke="#d4d4d4" stroke-width="1"/><path d="M9.9,2.0 A5.6,5.6 0 0 1 2.0,9.9" fill="none" stroke="#fff" stroke-width="1"/><path d="M2.6,9.4 A4.8,4.8 0 0 1 9.4,2.6" fill="none" stroke="#000" stroke-width="1.2"/><path d="M9.2,2.8 A4.5,4.5 0 0 1 2.8,9.2" fill="none" stroke="#c8c8c8" stroke-width="0.9"/></svg>
<div class="t" style="left:249.5px;top:582.14px;font-size:12px;line-height:13.79px;color:#000;"><i style="width:9px">D</i><i style="width:7px">e</i><i style="width:3px">l</i><i style="width:3px">t</i><i style="width:7px">a</i></div>
<div style="left:14px;top:618px;width:10.399999999999999px;height:1px;background:#8a8a8a;"></div>
<div style="left:15px;top:619px;width:9.399999999999999px;height:1px;background:#ffffff;"></div>
<div style="left:66.4px;top:618px;width:386.6px;height:1px;background:#8a8a8a;"></div>
<div style="left:66.4px;top:619px;width:387.6px;height:1px;background:#ffffff;"></div>
<div style="left:14px;top:618px;width:1px;height:54px;background:#8a8a8a;"></div>
<div style="left:15px;top:619px;width:1px;height:53px;background:#ffffff;"></div>
<div style="left:452px;top:618px;width:1px;height:54px;background:#8a8a8a;"></div>
<div style="left:453px;top:618px;width:1px;height:55px;background:#ffffff;"></div>
<div style="left:14px;top:671px;width:14px;height:1px;background:#8a8a8a;"></div>
<div style="left:14px;top:672px;width:15px;height:1px;background:#ffffff;"></div>
<div style="left:440px;top:671px;width:13px;height:1px;background:#8a8a8a;"></div>
<div style="left:440px;top:672px;width:14px;height:1px;background:#ffffff;"></div>
<div class="t" style="left:25.4px;top:610.64px;font-size:12px;line-height:13.79px;color:#000;"><i style="width:8px">V</i><i style="width:7px">a</i><i style="width:3px">l</i><i style="width:7px">u</i><i style="width:7px">e</i><i style="width:6px">s</i></div>
<div class="t" style="left:28.3px;top:629.14px;font-size:12px;line-height:13.79px;color:#000;"><i style="width:8px">X</i><i style="width:7px">1</i><i style="width:3px">:</i></div>
<div style="left:51px;top:627px;width:92px;height:20px;background:#fff;"></div>
<div style="left:51px;top:646px;width:92px;height:1px;background:#ffffff;"></div>
<div style="left:142px;top:627px;width:1px;height:20px;background:#ffffff;"></div>
<div style="left:51px;top:627px;width:92px;height:1px;background:#8a8a8a;"></div>
<div style="left:51px;top:627px;width:1px;height:20px;background:#8a8a8a;"></div>
<div class="t" style="left:-462.5px;width:600px;text-align:right;top:630.14px;font-size:12px;line-height:13.79px;color:#000;"><i style="width:7px">2</i><i style="width:3px">.</i><i style="width:7px">1</i><i style="width:7px">4</i></div>
<div style="left:143px;top:627px;width:13px;height:1px;background:#ffffff;"></div>
<div style="left:143px;top:627px;width:1px;height:10px;background:#ffffff;"></div>
<div style="left:143px;top:636px;width:13px;height:1px;background:#8a8a8a;"></div>
<div style="left:155px;top:627px;width:1px;height:10px;background:#8a8a8a;"></div>
<div style="left:143px;top:637px;width:13px;height:1px;background:#ffffff;"></div>
<div style="left:143px;top:637px;width:1px;height:10px;background:#ffffff;"></div>
<div style="left:143px;top:646px;width:13px;height:1px;background:#8a8a8a;"></div>
<div style="left:155px;top:637px;width:1px;height:10px;background:#8a8a8a;"></div>
<svg style="position:absolute;left:145.0px;top:629.7px" width="7" height="4.5"><path d="M0,3.5 L3.5,0 L7,3.5 Z" fill="#000"/></svg>
<svg style="position:absolute;left:145.0px;top:640px" width="7" height="4.5"><path d="M0,0 L3.5,3.5 L7,0 Z" fill="#000"/></svg>
<div class="t" style="left:166.9px;top:629.14px;font-size:12px;line-height:13.79px;color:#000;"><i style="width:8px">Y</i><i style="width:7px">1</i><i style="width:3px">:</i></div>
<div style="left:190px;top:627px;width:237px;height:20px;background:#e8e8e8;"></div>
<div style="left:190px;top:646px;width:237px;height:1px;background:#ffffff;"></div>
<div style="left:426px;top:627px;width:1px;height:20px;background:#ffffff;"></div>
<div style="left:190px;top:627px;width:237px;height:1px;background:#8a8a8a;"></div>
<div style="left:190px;top:627px;width:1px;height:20px;background:#8a8a8a;"></div>
<div class="t" style="left:-179.5px;width:600px;text-align:right;top:629.14px;font-size:12px;line-height:13.79px;color:#000;"><i style="width:7px">9</i><i style="width:7px">0</i><i style="width:3px">.</i><i style="width:7px">6</i><i style="width:7px">7</i><i style="width:7px">0</i><i style="width:7px">6</i><i style="width:7px">1</i></div>
<div style="left:427px;top:627px;width:13px;height:1px;background:#ffffff;"></div>
<div style="left:427px;top:627px;width:1px;height:10px;background:#ffffff;"></div>
<div style="left:427px;top:636px;width:13px;height:1px;background:#8a8a8a;"></div>
<div style="left:439px;top:627px;width:1px;height:10px;background:#8a8a8a;"></div>
<div style="left:427px;top:637px;width:13px;height:1px;background:#ffffff;"></div>
<div style="left:427px;top:637px;width:1px;height:10px;background:#ffffff;"></div>
<div style="left:427px;top:646px;width:13px;height:1px;background:#8a8a8a;"></div>
<div style="left:439px;top:637px;width:1px;height:10px;background:#8a8a8a;"></div>
<svg style="position:absolute;left:429.0px;top:629.7px" width="7" height="4.5"><path d="M0,3.5 L3.5,0 L7,3.5 Z" fill="#c4c4c4"/></svg>
<svg style="position:absolute;left:429.0px;top:640px" width="7" height="4.5"><path d="M0,0 L3.5,3.5 L7,0 Z" fill="#c4c4c4"/></svg>
<div class="t" style="left:28.3px;top:652.84px;font-size:12px;line-height:13.79px;color:#000;"><i style="width:8px">X</i><i style="width:7px">2</i><i style="width:3px">:</i></div>
<div style="left:51px;top:651px;width:92px;height:20px;background:#e8e8e8;"></div>
<div style="left:51px;top:670px;width:92px;height:1px;background:#ffffff;"></div>
<div style="left:142px;top:651px;width:1px;height:20px;background:#ffffff;"></div>
<div style="left:51px;top:651px;width:92px;height:1px;background:#8a8a8a;"></div>
<div style="left:51px;top:651px;width:1px;height:20px;background:#8a8a8a;"></div>
<div style="left:143px;top:651px;width:13px;height:1px;background:#ffffff;"></div>
<div style="left:143px;top:651px;width:1px;height:10px;background:#ffffff;"></div>
<div style="left:143px;top:660px;width:13px;height:1px;background:#8a8a8a;"></div>
<div style="left:155px;top:651px;width:1px;height:10px;background:#8a8a8a;"></div>
<div style="left:143px;top:661px;width:13px;height:1px;background:#ffffff;"></div>
<div style="left:143px;top:661px;width:1px;height:10px;background:#ffffff;"></div>
<div style="left:143px;top:670px;width:13px;height:1px;background:#8a8a8a;"></div>
<div style="left:155px;top:661px;width:1px;height:10px;background:#8a8a8a;"></div>
<svg style="position:absolute;left:145.0px;top:653.7px" width="7" height="4.5"><path d="M0,3.5 L3.5,0 L7,3.5 Z" fill="#c4c4c4"/></svg>
<svg style="position:absolute;left:145.0px;top:664px" width="7" height="4.5"><path d="M0,0 L3.5,3.5 L7,0 Z" fill="#c4c4c4"/></svg>
<div class="t" style="left:161px;top:652.84px;font-size:12px;line-height:13.79px;color:#000;"><i style="width:8px">Y</i><i style="width:7px">2</i><i style="width:3px">:</i></div>
<div style="left:184px;top:651px;width:243px;height:20px;background:#e8e8e8;"></div>
<div style="left:184px;top:670px;width:243px;height:1px;background:#ffffff;"></div>
<div style="left:426px;top:651px;width:1px;height:20px;background:#ffffff;"></div>
<div style="left:184px;top:651px;width:243px;height:1px;background:#8a8a8a;"></div>
<div style="left:184px;top:651px;width:1px;height:20px;background:#8a8a8a;"></div>
<div style="left:427px;top:651px;width:13px;height:1px;background:#ffffff;"></div>
<div style="left:427px;top:651px;width:1px;height:10px;background:#ffffff;"></div>
<div style="left:427px;top:660px;width:13px;height:1px;background:#8a8a8a;"></div>
<div style="left:439px;top:651px;width:1px;height:10px;background:#8a8a8a;"></div>
<div style="left:427px;top:661px;width:13px;height:1px;background:#ffffff;"></div>
<div style="left:427px;top:661px;width:1px;height:10px;background:#ffffff;"></div>
<div style="left:427px;top:670px;width:13px;height:1px;background:#8a8a8a;"></div>
<div style="left:439px;top:661px;width:1px;height:10px;background:#8a8a8a;"></div>
<svg style="position:absolute;left:429.0px;top:653.7px" width="7" height="4.5"><path d="M0,3.5 L3.5,0 L7,3.5 Z" fill="#c4c4c4"/></svg>
<svg style="position:absolute;left:429.0px;top:664px" width="7" height="4.5"><path d="M0,0 L3.5,3.5 L7,0 Z" fill="#c4c4c4"/></svg>
<div style="left:14px;top:690px;width:10.399999999999999px;height:1px;background:#8a8a8a;"></div>
<div style="left:15px;top:691px;width:9.399999999999999px;height:1px;background:#ffffff;"></div>
<div style="left:76.4px;top:690px;width:376.6px;height:1px;background:#8a8a8a;"></div>
<div style="left:76.4px;top:691px;width:377.6px;height:1px;background:#ffffff;"></div>
<div style="left:14px;top:690px;width:1px;height:32px;background:#8a8a8a;"></div>
<div style="left:15px;top:691px;width:1px;height:31px;background:#ffffff;"></div>
<div style="left:452px;top:690px;width:1px;height:32px;background:#8a8a8a;"></div>
<div style="left:453px;top:690px;width:1px;height:33px;background:#ffffff;"></div>
<div style="left:14px;top:721px;width:14px;height:1px;background:#8a8a8a;"></div>
<div style="left:14px;top:722px;width:15px;height:1px;background:#ffffff;"></div>
<div style="left:440px;top:721px;width:13px;height:1px;background:#8a8a8a;"></div>
<div style="left:440px;top:722px;width:14px;height:1px;background:#ffffff;"></div>
<div class="t" style="left:25.4px;top:682.64px;font-size:12px;line-height:13.79px;color:#000;"><i style="width:8px">S</i><i style="width:3px">t</i><i style="width:7px">a</i><i style="width:3px">t</i><i style="width:3px">i</i><i style="width:6px">s</i><i style="width:3px">t</i><i style="width:3px">i</i><i style="width:6px">c</i><i style="width:6px">s</i></div>
<div style="left:28px;top:699px;width:100px;height:22px;background:#fff;"></div>
<div style="left:28px;top:720px;width:100px;height:1px;background:#ffffff;"></div>
<div style="left:127px;top:699px;width:1px;height:22px;background:#ffffff;"></div>
<div style="left:28px;top:699px;width:100px;height:1px;background:#8a8a8a;"></div>
<div style="left:28px;top:699px;width:1px;height:22px;background:#8a8a8a;"></div>
<div class="t" style="left:32.2px;top:701.94px;font-size:12px;line-height:13.79px;color:#000;"><i style="width:8px">X</i><i style="width:3px">/</i><i style="width:8px">Y</i><i style="width:3px">&nbsp;</i><i style="width:7px">d</i><i style="width:3px">i</i><i style="width:3px">f</i><i style="width:3px">f</i></div>
<div style="left:111px;top:700px;width:16px;height:20px;background:#e8e8e8;"></div>
<div style="left:111px;top:700px;width:16px;height:1px;background:#ffffff;"></div>
<div style="left:111px;top:700px;width:1px;height:20px;background:#ffffff;"></div>
<div style="left:111px;top:719px;width:16px;height:1px;background:#8a8a8a;"></div>
<div style="left:126px;top:700px;width:1px;height:20px;background:#8a8a8a;"></div>
<svg style="position:absolute;left:115.0px;top:709px" width="8" height="5.0"><path d="M0,0 L4.0,4.0 L8,0 Z" fill="#000"/></svg>
<div style="left:133px;top:700px;width:153px;height:20px;background:#e8e8e8;"></div>
<div style="left:133px;top:719px;width:153px;height:1px;background:#ffffff;"></div>
<div style="left:285px;top:700px;width:1px;height:20px;background:#ffffff;"></div>
<div style="left:133px;top:700px;width:153px;height:1px;background:#8a8a8a;"></div>
<div style="left:133px;top:700px;width:1px;height:20px;background:#8a8a8a;"></div>
<div class="t" style="left:-319.2px;width:600px;text-align:right;top:701.94px;font-size:12px;line-height:13.79px;color:#000;"><i style="width:7px">1</i><i style="width:3px">.</i><i style="width:7px">0</i><i style="width:7px">9</i></div>
<div style="left:286px;top:700px;width:154px;height:20px;background:#e8e8e8;"></div>
<div style="left:286px;top:719px;width:154px;height:1px;background:#ffffff;"></div>
<div style="left:439px;top:700px;width:1px;height:20px;background:#ffffff;"></div>
<div style="left:286px;top:700px;width:154px;height:1px;background:#8a8a8a;"></div>
<div style="left:286px;top:700px;width:1px;height:20px;background:#8a8a8a;"></div>
<div class="t" style="left:-165.8px;width:600px;text-align:right;top:701.94px;font-size:12px;line-height:13.79px;color:#000;"><i style="width:4px">-</i><i style="width:7px">3</i><i style="width:7px">6</i><i style="width:3px">.</i><i style="width:7px">1</i><i style="width:7px">6</i><i style="width:7px">8</i><i style="width:7px">8</i></div>
<div style="left:460px;top:74px;width:634px;height:362px;background:#fff;"></div>
<div style="left:460px;top:435px;width:634px;height:1px;background:#ffffff;"></div>
<div style="left:1093px;top:74px;width:1px;height:362px;background:#ffffff;"></div>
<div style="left:460px;top:74px;width:634px;height:1px;background:#8a8a8a;"></div>
<div style="left:460px;top:74px;width:1px;height:362px;background:#8a8a8a;"></div>
<svg style="position:absolute;left:0;top:0" width="1104" height="895" viewBox="0 0 1104 895" shape-rendering="crispEdges"><path d="M577,111h1v1h-1zM577,114h1v1h-1zM577,117h1v1h-1zM577,120h1v1h-1zM577,123h1v1h-1zM577,126h1v1h-1zM577,129h1v1h-1zM577,132h1v1h-1zM577,135h1v1h-1zM577,138h1v1h-1zM577,141h1v1h-1zM577,144h1v1h-1zM577,147h1v1h-1zM577,150h1v1h-1zM577,153h1v1h-1zM577,156h1v1h-1zM577,159h1v1h-1zM577,162h1v1h-1zM577,165h1v1h-1zM577,168h1v1h-1zM577,171h1v1h-1zM577,174h1v1h-1zM577,177h1v1h-1zM577,180h1v1h-1zM577,183h1v1h-1zM577,186h1v1h-1zM577,189h1v1h-1zM577,192h1v1h-1zM577,195h1v1h-1zM577,198h1v1h-1zM577,201h1v1h-1zM577,204h1v1h-1zM577,207h1v1h-1zM577,210h1v1h-1zM577,213h1v1h-1zM577,216h1v1h-1zM577,219h1v1h-1zM577,222h1v1h-1zM577,225h1v1h-1zM577,228h1v1h-1zM577,231h1v1h-1zM577,234h1v1h-1zM577,237h1v1h-1zM577,240h1v1h-1zM577,243h1v1h-1zM577,246h1v1h-1zM577,249h1v1h-1zM577,252h1v1h-1zM577,255h1v1h-1zM577,258h1v1h-1zM577,261h1v1h-1zM577,264h1v1h-1zM577,267h1v1h-1zM577,270h1v1h-1zM577,273h1v1h-1zM577,276h1v1h-1zM577,279h1v1h-1zM577,282h1v1h-1zM577,285h1v1h-1zM577,288h1v1h-1zM577,291h1v1h-1zM577,294h1v1h-1zM577,297h1v1h-1zM577,300h1v1h-1zM577,303h1v1h-1zM577,306h1v1h-1zM577,309h1v1h-1zM577,312h1v1h-1zM577,315h1v1h-1zM577,318h1v1h-1zM577,321h1v1h-1zM577,324h1v1h-1zM577,327h1v1h-1zM577,330h1v1h-1zM577,333h1v1h-1zM577,336h1v1h-1zM577,339h1v1h-1zM577,342h1v1h-1zM577,345h1v1h-1zM577,348h1v1h-1zM577,351h1v1h-1zM577,354h1v1h-1zM577,357h1v1h-1zM577,360h1v1h-1zM577,363h1v1h-1zM577,366h1v1h-1zM577,369h1v1h-1zM631,111h1v1h-1zM631,114h1v1h-1zM631,117h1v1h-1zM631,120h1v1h-1zM631,123h1v1h-1zM631,126h1v1h-1zM631,129h1v1h-1zM631,132h1v1h-1zM631,135h1v1h-1zM631,138h1v1h-1zM631,141h1v1h-1zM631,144h1v1h-1zM631,147h1v1h-1zM631,150h1v1h-1zM631,153h1v1h-1zM631,156h1v1h-1zM631,159h1v1h-1zM631,162h1v1h-1zM631,165h1v1h-1zM631,168h1v1h-1zM631,171h1v1h-1zM631,174h1v1h-1zM631,177h1v1h-1zM631,180h1v1h-1zM631,183h1v1h-1zM631,186h1v1h-1zM631,189h1v1h-1zM631,192h1v1h-1zM631,195h1v1h-1zM631,198h1v1h-1zM631,201h1v1h-1zM631,204h1v1h-1zM631,207h1v1h-1zM631,210h1v1h-1zM631,213h1v1h-1zM631,216h1v1h-1zM631,219h1v1h-1zM631,222h1v1h-1zM631,225h1v1h-1zM631,228h1v1h-1zM631,231h1v1h-1zM631,234h1v1h-1zM631,237h1v1h-1zM631,240h1v1h-1zM631,243h1v1h-1zM631,246h1v1h-1zM631,249h1v1h-1zM631,252h1v1h-1zM631,255h1v1h-1zM631,258h1v1h-1zM631,261h1v1h-1zM631,264h1v1h-1zM631,267h1v1h-1zM631,270h1v1h-1zM631,273h1v1h-1zM631,276h1v1h-1zM631,279h1v1h-1zM631,282h1v1h-1zM631,285h1v1h-1zM631,288h1v1h-1zM631,291h1v1h-1zM631,294h1v1h-1zM631,297h1v1h-1zM631,300h1v1h-1zM631,303h1v1h-1zM631,306h1v1h-1zM631,309h1v1h-1zM631,312h1v1h-1zM631,315h1v1h-1zM631,318h1v1h-1zM631,321h1v1h-1zM631,324h1v1h-1zM631,327h1v1h-1zM631,330h1v1h-1zM631,333h1v1h-1zM631,336h1v1h-1zM631,339h1v1h-1zM631,342h1v1h-1zM631,345h1v1h-1zM631,348h1v1h-1zM631,351h1v1h-1zM631,354h1v1h-1zM631,357h1v1h-1zM631,360h1v1h-1zM631,363h1v1h-1zM631,366h1v1h-1zM631,369h1v1h-1zM685,111h1v1h-1zM685,114h1v1h-1zM685,117h1v1h-1zM685,120h1v1h-1zM685,123h1v1h-1zM685,126h1v1h-1zM685,129h1v1h-1zM685,132h1v1h-1zM685,135h1v1h-1zM685,138h1v1h-1zM685,141h1v1h-1zM685,144h1v1h-1zM685,147h1v1h-1zM685,150h1v1h-1zM685,153h1v1h-1zM685,156h1v1h-1zM685,159h1v1h-1zM685,162h1v1h-1zM685,165h1v1h-1zM685,168h1v1h-1zM685,171h1v1h-1zM685,174h1v1h-1zM685,177h1v1h-1zM685,180h1v1h-1zM685,183h1v1h-1zM685,186h1v1h-1zM685,189h1v1h-1zM685,192h1v1h-1zM685,195h1v1h-1zM685,198h1v1h-1zM685,201h1v1h-1zM685,204h1v1h-1zM685,207h1v1h-1zM685,210h1v1h-1zM685,213h1v1h-1zM685,216h1v1h-1zM685,219h1v1h-1zM685,222h1v1h-1zM685,225h1v1h-1zM685,228h1v1h-1zM685,231h1v1h-1zM685,234h1v1h-1zM685,237h1v1h-1zM685,240h1v1h-1zM685,243h1v1h-1zM685,246h1v1h-1zM685,249h1v1h-1zM685,252h1v1h-1zM685,255h1v1h-1zM685,258h1v1h-1zM685,261h1v1h-1zM685,264h1v1h-1zM685,267h1v1h-1zM685,270h1v1h-1zM685,273h1v1h-1zM685,276h1v1h-1zM685,279h1v1h-1zM685,282h1v1h-1zM685,285h1v1h-1zM685,288h1v1h-1zM685,291h1v1h-1zM685,294h1v1h-1zM685,297h1v1h-1zM685,300h1v1h-1zM685,303h1v1h-1zM685,306h1v1h-1zM685,309h1v1h-1zM685,312h1v1h-1zM685,315h1v1h-1zM685,318h1v1h-1zM685,321h1v1h-1zM685,324h1v1h-1zM685,327h1v1h-1zM685,330h1v1h-1zM685,333h1v1h-1zM685,336h1v1h-1zM685,339h1v1h-1zM685,342h1v1h-1zM685,345h1v1h-1zM685,348h1v1h-1zM685,351h1v1h-1zM685,354h1v1h-1zM685,357h1v1h-1zM685,360h1v1h-1zM685,363h1v1h-1zM685,366h1v1h-1zM685,369h1v1h-1zM739,111h1v1h-1zM739,114h1v1h-1zM739,117h1v1h-1zM739,120h1v1h-1zM739,123h1v1h-1zM739,126h1v1h-1zM739,129h1v1h-1zM739,132h1v1h-1zM739,135h1v1h-1zM739,138h1v1h-1zM739,141h1v1h-1zM739,144h1v1h-1zM739,147h1v1h-1zM739,150h1v1h-1zM739,153h1v1h-1zM739,156h1v1h-1zM739,159h1v1h-1zM739,162h1v1h-1zM739,165h1v1h-1zM739,168h1v1h-1zM739,171h1v1h-1zM739,174h1v1h-1zM739,177h1v1h-1zM739,180h1v1h-1zM739,183h1v1h-1zM739,186h1v1h-1zM739,189h1v1h-1zM739,192h1v1h-1zM739,195h1v1h-1zM739,198h1v1h-1zM739,201h1v1h-1zM739,204h1v1h-1zM739,207h1v1h-1zM739,210h1v1h-1zM739,213h1v1h-1zM739,216h1v1h-1zM739,219h1v1h-1zM739,222h1v1h-1zM739,225h1v1h-1zM739,228h1v1h-1zM739,231h1v1h-1zM739,234h1v1h-1zM739,237h1v1h-1zM739,240h1v1h-1zM739,243h1v1h-1zM739,246h1v1h-1zM739,249h1v1h-1zM739,252h1v1h-1zM739,255h1v1h-1zM739,258h1v1h-1zM739,261h1v1h-1zM739,264h1v1h-1zM739,267h1v1h-1zM739,270h1v1h-1zM739,273h1v1h-1zM739,276h1v1h-1zM739,279h1v1h-1zM739,282h1v1h-1zM739,285h1v1h-1zM739,288h1v1h-1zM739,291h1v1h-1zM739,294h1v1h-1zM739,297h1v1h-1zM739,300h1v1h-1zM739,303h1v1h-1zM739,306h1v1h-1zM739,309h1v1h-1zM739,312h1v1h-1zM739,315h1v1h-1zM739,318h1v1h-1zM739,321h1v1h-1zM739,324h1v1h-1zM739,327h1v1h-1zM739,330h1v1h-1zM739,333h1v1h-1zM739,336h1v1h-1zM739,339h1v1h-1zM739,342h1v1h-1zM739,345h1v1h-1zM739,348h1v1h-1zM739,351h1v1h-1zM739,354h1v1h-1zM739,357h1v1h-1zM739,360h1v1h-1zM739,363h1v1h-1zM739,366h1v1h-1zM739,369h1v1h-1zM792,111h1v1h-1zM792,114h1v1h-1zM792,117h1v1h-1zM792,120h1v1h-1zM792,123h1v1h-1zM792,126h1v1h-1zM792,129h1v1h-1zM792,132h1v1h-1zM792,135h1v1h-1zM792,138h1v1h-1zM792,141h1v1h-1zM792,144h1v1h-1zM792,147h1v1h-1zM792,150h1v1h-1zM792,153h1v1h-1zM792,156h1v1h-1zM792,159h1v1h-1zM792,162h1v1h-1zM792,165h1v1h-1zM792,168h1v1h-1zM792,171h1v1h-1zM792,174h1v1h-1zM792,177h1v1h-1zM792,180h1v1h-1zM792,183h1v1h-1zM792,186h1v1h-1zM792,189h1v1h-1zM792,192h1v1h-1zM792,195h1v1h-1zM792,198h1v1h-1zM792,201h1v1h-1zM792,204h1v1h-1zM792,207h1v1h-1zM792,210h1v1h-1zM792,213h1v1h-1zM792,216h1v1h-1zM792,219h1v1h-1zM792,222h1v1h-1zM792,225h1v1h-1zM792,228h1v1h-1zM792,231h1v1h-1zM792,234h1v1h-1zM792,237h1v1h-1zM792,240h1v1h-1zM792,243h1v1h-1zM792,246h1v1h-1zM792,249h1v1h-1zM792,252h1v1h-1zM792,255h1v1h-1zM792,258h1v1h-1zM792,261h1v1h-1zM792,264h1v1h-1zM792,267h1v1h-1zM792,270h1v1h-1zM792,273h1v1h-1zM792,276h1v1h-1zM792,279h1v1h-1zM792,282h1v1h-1zM792,285h1v1h-1zM792,288h1v1h-1zM792,291h1v1h-1zM792,294h1v1h-1zM792,297h1v1h-1zM792,300h1v1h-1zM792,303h1v1h-1zM792,306h1v1h-1zM792,309h1v1h-1zM792,312h1v1h-1zM792,315h1v1h-1zM792,318h1v1h-1zM792,321h1v1h-1zM792,324h1v1h-1zM792,327h1v1h-1zM792,330h1v1h-1zM792,333h1v1h-1zM792,336h1v1h-1zM792,339h1v1h-1zM792,342h1v1h-1zM792,345h1v1h-1zM792,348h1v1h-1zM792,351h1v1h-1zM792,354h1v1h-1zM792,357h1v1h-1zM792,360h1v1h-1zM792,363h1v1h-1zM792,366h1v1h-1zM792,369h1v1h-1zM846,111h1v1h-1zM846,114h1v1h-1zM846,117h1v1h-1zM846,120h1v1h-1zM846,123h1v1h-1zM846,126h1v1h-1zM846,129h1v1h-1zM846,132h1v1h-1zM846,135h1v1h-1zM846,138h1v1h-1zM846,141h1v1h-1zM846,144h1v1h-1zM846,147h1v1h-1zM846,150h1v1h-1zM846,153h1v1h-1zM846,156h1v1h-1zM846,159h1v1h-1zM846,162h1v1h-1zM846,165h1v1h-1zM846,168h1v1h-1zM846,171h1v1h-1zM846,174h1v1h-1zM846,177h1v1h-1zM846,180h1v1h-1zM846,183h1v1h-1zM846,186h1v1h-1zM846,189h1v1h-1zM846,192h1v1h-1zM846,195h1v1h-1zM846,198h1v1h-1zM846,201h1v1h-1zM846,204h1v1h-1zM846,207h1v1h-1zM846,210h1v1h-1zM846,213h1v1h-1zM846,216h1v1h-1zM846,219h1v1h-1zM846,222h1v1h-1zM846,225h1v1h-1zM846,228h1v1h-1zM846,231h1v1h-1zM846,234h1v1h-1zM846,237h1v1h-1zM846,240h1v1h-1zM846,243h1v1h-1zM846,246h1v1h-1zM846,249h1v1h-1zM846,252h1v1h-1zM846,255h1v1h-1zM846,258h1v1h-1zM846,261h1v1h-1zM846,264h1v1h-1zM846,267h1v1h-1zM846,270h1v1h-1zM846,273h1v1h-1zM846,276h1v1h-1zM846,279h1v1h-1zM846,282h1v1h-1zM846,285h1v1h-1zM846,288h1v1h-1zM846,291h1v1h-1zM846,294h1v1h-1zM846,297h1v1h-1zM846,300h1v1h-1zM846,303h1v1h-1zM846,306h1v1h-1zM846,309h1v1h-1zM846,312h1v1h-1zM846,315h1v1h-1zM846,318h1v1h-1zM846,321h1v1h-1zM846,324h1v1h-1zM846,327h1v1h-1zM846,330h1v1h-1zM846,333h1v1h-1zM846,336h1v1h-1zM846,339h1v1h-1zM846,342h1v1h-1zM846,345h1v1h-1zM846,348h1v1h-1zM846,351h1v1h-1zM846,354h1v1h-1zM846,357h1v1h-1zM846,360h1v1h-1zM846,363h1v1h-1zM846,366h1v1h-1zM846,369h1v1h-1zM900,111h1v1h-1zM900,114h1v1h-1zM900,117h1v1h-1zM900,120h1v1h-1zM900,123h1v1h-1zM900,126h1v1h-1zM900,129h1v1h-1zM900,132h1v1h-1zM900,135h1v1h-1zM900,138h1v1h-1zM900,141h1v1h-1zM900,144h1v1h-1zM900,147h1v1h-1zM900,150h1v1h-1zM900,153h1v1h-1zM900,156h1v1h-1zM900,159h1v1h-1zM900,162h1v1h-1zM900,165h1v1h-1zM900,168h1v1h-1zM900,171h1v1h-1zM900,174h1v1h-1zM900,177h1v1h-1zM900,180h1v1h-1zM900,183h1v1h-1zM900,186h1v1h-1zM900,189h1v1h-1zM900,192h1v1h-1zM900,195h1v1h-1zM900,198h1v1h-1zM900,201h1v1h-1zM900,204h1v1h-1zM900,207h1v1h-1zM900,210h1v1h-1zM900,213h1v1h-1zM900,216h1v1h-1zM900,219h1v1h-1zM900,222h1v1h-1zM900,225h1v1h-1zM900,228h1v1h-1zM900,231h1v1h-1zM900,234h1v1h-1zM900,237h1v1h-1zM900,240h1v1h-1zM900,243h1v1h-1zM900,246h1v1h-1zM900,249h1v1h-1zM900,252h1v1h-1zM900,255h1v1h-1zM900,258h1v1h-1zM900,261h1v1h-1zM900,264h1v1h-1zM900,267h1v1h-1zM900,270h1v1h-1zM900,273h1v1h-1zM900,276h1v1h-1zM900,279h1v1h-1zM900,282h1v1h-1zM900,285h1v1h-1zM900,288h1v1h-1zM900,291h1v1h-1zM900,294h1v1h-1zM900,297h1v1h-1zM900,300h1v1h-1zM900,303h1v1h-1zM900,306h1v1h-1zM900,309h1v1h-1zM900,312h1v1h-1zM900,315h1v1h-1zM900,318h1v1h-1zM900,321h1v1h-1zM900,324h1v1h-1zM900,327h1v1h-1zM900,330h1v1h-1zM900,333h1v1h-1zM900,336h1v1h-1zM900,339h1v1h-1zM900,342h1v1h-1zM900,345h1v1h-1zM900,348h1v1h-1zM900,351h1v1h-1zM900,354h1v1h-1zM900,357h1v1h-1zM900,360h1v1h-1zM900,363h1v1h-1zM900,366h1v1h-1zM900,369h1v1h-1zM953,111h1v1h-1zM953,114h1v1h-1zM953,117h1v1h-1zM953,120h1v1h-1zM953,123h1v1h-1zM953,126h1v1h-1zM953,129h1v1h-1zM953,132h1v1h-1zM953,135h1v1h-1zM953,138h1v1h-1zM953,141h1v1h-1zM953,144h1v1h-1zM953,147h1v1h-1zM953,150h1v1h-1zM953,153h1v1h-1zM953,156h1v1h-1zM953,159h1v1h-1zM953,162h1v1h-1zM953,165h1v1h-1zM953,168h1v1h-1zM953,171h1v1h-1zM953,174h1v1h-1zM953,177h1v1h-1zM953,180h1v1h-1zM953,183h1v1h-1zM953,186h1v1h-1zM953,189h1v1h-1zM953,192h1v1h-1zM953,195h1v1h-1zM953,198h1v1h-1zM953,201h1v1h-1zM953,204h1v1h-1zM953,207h1v1h-1zM953,210h1v1h-1zM953,213h1v1h-1zM953,216h1v1h-1zM953,219h1v1h-1zM953,222h1v1h-1zM953,225h1v1h-1zM953,228h1v1h-1zM953,231h1v1h-1zM953,234h1v1h-1zM953,237h1v1h-1zM953,240h1v1h-1zM953,243h1v1h-1zM953,246h1v1h-1zM953,249h1v1h-1zM953,252h1v1h-1zM953,255h1v1h-1zM953,258h1v1h-1zM953,261h1v1h-1zM953,264h1v1h-1zM953,267h1v1h-1zM953,270h1v1h-1zM953,273h1v1h-1zM953,276h1v1h-1zM953,279h1v1h-1zM953,282h1v1h-1zM953,285h1v1h-1zM953,288h1v1h-1zM953,291h1v1h-1zM953,294h1v1h-1zM953,297h1v1h-1zM953,300h1v1h-1zM953,303h1v1h-1zM953,306h1v1h-1zM953,309h1v1h-1zM953,312h1v1h-1zM953,315h1v1h-1zM953,318h1v1h-1zM953,321h1v1h-1zM953,324h1v1h-1zM953,327h1v1h-1zM953,330h1v1h-1zM953,333h1v1h-1zM953,336h1v1h-1zM953,339h1v1h-1zM953,342h1v1h-1zM953,345h1v1h-1zM953,348h1v1h-1zM953,351h1v1h-1zM953,354h1v1h-1zM953,357h1v1h-1zM953,360h1v1h-1zM953,363h1v1h-1zM953,366h1v1h-1zM953,369h1v1h-1zM1007,111h1v1h-1zM1007,114h1v1h-1zM1007,117h1v1h-1zM1007,120h1v1h-1zM1007,123h1v1h-1zM1007,126h1v1h-1zM1007,129h1v1h-1zM1007,132h1v1h-1zM1007,135h1v1h-1zM1007,138h1v1h-1zM1007,141h1v1h-1zM1007,144h1v1h-1zM1007,147h1v1h-1zM1007,150h1v1h-1zM1007,153h1v1h-1zM1007,156h1v1h-1zM1007,159h1v1h-1zM1007,162h1v1h-1zM1007,165h1v1h-1zM1007,168h1v1h-1zM1007,171h1v1h-1zM1007,174h1v1h-1zM1007,177h1v1h-1zM1007,180h1v1h-1zM1007,183h1v1h-1zM1007,186h1v1h-1zM1007,189h1v1h-1zM1007,192h1v1h-1zM1007,195h1v1h-1zM1007,198h1v1h-1zM1007,201h1v1h-1zM1007,204h1v1h-1zM1007,207h1v1h-1zM1007,210h1v1h-1zM1007,213h1v1h-1zM1007,216h1v1h-1zM1007,219h1v1h-1zM1007,222h1v1h-1zM1007,225h1v1h-1zM1007,228h1v1h-1zM1007,231h1v1h-1zM1007,234h1v1h-1zM1007,237h1v1h-1zM1007,240h1v1h-1zM1007,243h1v1h-1zM1007,246h1v1h-1zM1007,249h1v1h-1zM1007,252h1v1h-1zM1007,255h1v1h-1zM1007,258h1v1h-1zM1007,261h1v1h-1zM1007,264h1v1h-1zM1007,267h1v1h-1zM1007,270h1v1h-1zM1007,273h1v1h-1zM1007,276h1v1h-1zM1007,279h1v1h-1zM1007,282h1v1h-1zM1007,285h1v1h-1zM1007,288h1v1h-1zM1007,291h1v1h-1zM1007,294h1v1h-1zM1007,297h1v1h-1zM1007,300h1v1h-1zM1007,303h1v1h-1zM1007,306h1v1h-1zM1007,309h1v1h-1zM1007,312h1v1h-1zM1007,315h1v1h-1zM1007,318h1v1h-1zM1007,321h1v1h-1zM1007,324h1v1h-1zM1007,327h1v1h-1zM1007,330h1v1h-1zM1007,333h1v1h-1zM1007,336h1v1h-1zM1007,339h1v1h-1zM1007,342h1v1h-1zM1007,345h1v1h-1zM1007,348h1v1h-1zM1007,351h1v1h-1zM1007,354h1v1h-1zM1007,357h1v1h-1zM1007,360h1v1h-1zM1007,363h1v1h-1zM1007,366h1v1h-1zM1007,369h1v1h-1zM526,370h1v1h-1zM529,370h1v1h-1zM532,370h1v1h-1zM535,370h1v1h-1zM538,370h1v1h-1zM541,370h1v1h-1zM544,370h1v1h-1zM547,370h1v1h-1zM550,370h1v1h-1zM553,370h1v1h-1zM556,370h1v1h-1zM559,370h1v1h-1zM562,370h1v1h-1zM565,370h1v1h-1zM568,370h1v1h-1zM571,370h1v1h-1zM574,370h1v1h-1zM577,370h1v1h-1zM580,370h1v1h-1zM583,370h1v1h-1zM586,370h1v1h-1zM589,370h1v1h-1zM592,370h1v1h-1zM595,370h1v1h-1zM598,370h1v1h-1zM601,370h1v1h-1zM604,370h1v1h-1zM607,370h1v1h-1zM610,370h1v1h-1zM613,370h1v1h-1zM616,370h1v1h-1zM619,370h1v1h-1zM622,370h1v1h-1zM625,370h1v1h-1zM628,370h1v1h-1zM631,370h1v1h-1zM634,370h1v1h-1zM637,370h1v1h-1zM640,370h1v1h-1zM643,370h1v1h-1zM646,370h1v1h-1zM649,370h1v1h-1zM652,370h1v1h-1zM655,370h1v1h-1zM658,370h1v1h-1zM661,370h1v1h-1zM664,370h1v1h-1zM667,370h1v1h-1zM670,370h1v1h-1zM673,370h1v1h-1zM676,370h1v1h-1zM679,370h1v1h-1zM682,370h1v1h-1zM685,370h1v1h-1zM688,370h1v1h-1zM691,370h1v1h-1zM694,370h1v1h-1zM697,370h1v1h-1zM700,370h1v1h-1zM703,370h1v1h-1zM706,370h1v1h-1zM709,370h1v1h-1zM712,370h1v1h-1zM715,370h1v1h-1zM718,370h1v1h-1zM721,370h1v1h-1zM724,370h1v1h-1zM727,370h1v1h-1zM730,370h1v1h-1zM733,370h1v1h-1zM736,370h1v1h-1zM739,370h1v1h-1zM742,370h1v1h-1zM745,370h1v1h-1zM748,370h1v1h-1zM751,370h1v1h-1zM754,370h1v1h-1zM757,370h1v1h-1zM760,370h1v1h-1zM763,370h1v1h-1zM766,370h1v1h-1zM769,370h1v1h-1zM772,370h1v1h-1zM775,370h1v1h-1zM778,370h1v1h-1zM781,370h1v1h-1zM784,370h1v1h-1zM787,370h1v1h-1zM790,370h1v1h-1zM793,370h1v1h-1zM796,370h1v1h-1zM799,370h1v1h-1zM802,370h1v1h-1zM805,370h1v1h-1zM808,370h1v1h-1zM811,370h1v1h-1zM814,370h1v1h-1zM817,370h1v1h-1zM820,370h1v1h-1zM823,370h1v1h-1zM826,370h1v1h-1zM829,370h1v1h-1zM832,370h1v1h-1zM835,370h1v1h-1zM838,370h1v1h-1zM841,370h1v1h-1zM844,370h1v1h-1zM847,370h1v1h-1zM850,370h1v1h-1zM853,370h1v1h-1zM856,370h1v1h-1zM859,370h1v1h-1zM862,370h1v1h-1zM865,370h1v1h-1zM868,370h1v1h-1zM871,370h1v1h-1zM874,370h1v1h-1zM877,370h1v1h-1zM880,370h1v1h-1zM883,370h1v1h-1zM886,370h1v1h-1zM889,370h1v1h-1zM892,370h1v1h-1zM895,370h1v1h-1zM898,370h1v1h-1zM901,370h1v1h-1zM904,370h1v1h-1zM907,370h1v1h-1zM910,370h1v1h-1zM913,370h1v1h-1zM916,370h1v1h-1zM919,370h1v1h-1zM922,370h1v1h-1zM925,370h1v1h-1zM928,370h1v1h-1zM931,370h1v1h-1zM934,370h1v1h-1zM937,370h1v1h-1zM940,370h1v1h-1zM943,370h1v1h-1zM946,370h1v1h-1zM949,370h1v1h-1zM952,370h1v1h-1zM955,370h1v1h-1zM958,370h1v1h-1zM961,370h1v1h-1zM964,370h1v1h-1zM967,370h1v1h-1zM970,370h1v1h-1zM973,370h1v1h-1zM976,370h1v1h-1zM979,370h1v1h-1zM982,370h1v1h-1zM985,370h1v1h-1zM988,370h1v1h-1zM991,370h1v1h-1zM994,370h1v1h-1zM997,370h1v1h-1zM1000,370h1v1h-1zM1003,370h1v1h-1zM1006,370h1v1h-1zM1009,370h1v1h-1zM1012,370h1v1h-1zM1015,370h1v1h-1zM1018,370h1v1h-1zM1021,370h1v1h-1zM1024,370h1v1h-1zM1027,370h1v1h-1zM1030,370h1v1h-1zM1033,370h1v1h-1zM1036,370h1v1h-1zM1039,370h1v1h-1zM1042,370h1v1h-1zM1045,370h1v1h-1zM1048,370h1v1h-1zM1051,370h1v1h-1zM1054,370h1v1h-1zM1057,370h1v1h-1zM1060,370h1v1h-1zM526,341h1v1h-1zM529,341h1v1h-1zM532,341h1v1h-1zM535,341h1v1h-1zM538,341h1v1h-1zM541,341h1v1h-1zM544,341h1v1h-1zM547,341h1v1h-1zM550,341h1v1h-1zM553,341h1v1h-1zM556,341h1v1h-1zM559,341h1v1h-1zM562,341h1v1h-1zM565,341h1v1h-1zM568,341h1v1h-1zM571,341h1v1h-1zM574,341h1v1h-1zM577,341h1v1h-1zM580,341h1v1h-1zM583,341h1v1h-1zM586,341h1v1h-1zM589,341h1v1h-1zM592,341h1v1h-1zM595,341h1v1h-1zM598,341h1v1h-1zM601,341h1v1h-1zM604,341h1v1h-1zM607,341h1v1h-1zM610,341h1v1h-1zM613,341h1v1h-1zM616,341h1v1h-1zM619,341h1v1h-1zM622,341h1v1h-1zM625,341h1v1h-1zM628,341h1v1h-1zM631,341h1v1h-1zM634,341h1v1h-1zM637,341h1v1h-1zM640,341h1v1h-1zM643,341h1v1h-1zM646,341h1v1h-1zM649,341h1v1h-1zM652,341h1v1h-1zM655,341h1v1h-1zM658,341h1v1h-1zM661,341h1v1h-1zM664,341h1v1h-1zM667,341h1v1h-1zM670,341h1v1h-1zM673,341h1v1h-1zM676,341h1v1h-1zM679,341h1v1h-1zM682,341h1v1h-1zM685,341h1v1h-1zM688,341h1v1h-1zM691,341h1v1h-1zM694,341h1v1h-1zM697,341h1v1h-1zM700,341h1v1h-1zM703,341h1v1h-1zM706,341h1v1h-1zM709,341h1v1h-1zM712,341h1v1h-1zM715,341h1v1h-1zM718,341h1v1h-1zM721,341h1v1h-1zM724,341h1v1h-1zM727,341h1v1h-1zM730,341h1v1h-1zM733,341h1v1h-1zM736,341h1v1h-1zM739,341h1v1h-1zM742,341h1v1h-1zM745,341h1v1h-1zM748,341h1v1h-1zM751,341h1v1h-1zM754,341h1v1h-1zM757,341h1v1h-1zM760,341h1v1h-1zM763,341h1v1h-1zM766,341h1v1h-1zM769,341h1v1h-1zM772,341h1v1h-1zM775,341h1v1h-1zM778,341h1v1h-1zM781,341h1v1h-1zM784,341h1v1h-1zM787,341h1v1h-1zM790,341h1v1h-1zM793,341h1v1h-1zM796,341h1v1h-1zM799,341h1v1h-1zM802,341h1v1h-1zM805,341h1v1h-1zM808,341h1v1h-1zM811,341h1v1h-1zM814,341h1v1h-1zM817,341h1v1h-1zM820,341h1v1h-1zM823,341h1v1h-1zM826,341h1v1h-1zM829,341h1v1h-1zM832,341h1v1h-1zM835,341h1v1h-1zM838,341h1v1h-1zM841,341h1v1h-1zM844,341h1v1h-1zM847,341h1v1h-1zM850,341h1v1h-1zM853,341h1v1h-1zM856,341h1v1h-1zM859,341h1v1h-1zM862,341h1v1h-1zM865,341h1v1h-1zM868,341h1v1h-1zM871,341h1v1h-1zM874,341h1v1h-1zM877,341h1v1h-1zM880,341h1v1h-1zM883,341h1v1h-1zM886,341h1v1h-1zM889,341h1v1h-1zM892,341h1v1h-1zM895,341h1v1h-1zM898,341h1v1h-1zM901,341h1v1h-1zM904,341h1v1h-1zM907,341h1v1h-1zM910,341h1v1h-1zM913,341h1v1h-1zM916,341h1v1h-1zM919,341h1v1h-1zM922,341h1v1h-1zM925,341h1v1h-1zM928,341h1v1h-1zM931,341h1v1h-1zM934,341h1v1h-1zM937,341h1v1h-1zM940,341h1v1h-1zM943,341h1v1h-1zM946,341h1v1h-1zM949,341h1v1h-1zM952,341h1v1h-1zM955,341h1v1h-1zM958,341h1v1h-1zM961,341h1v1h-1zM964,341h1v1h-1zM967,341h1v1h-1zM970,341h1v1h-1zM973,341h1v1h-1zM976,341h1v1h-1zM979,341h1v1h-1zM982,341h1v1h-1zM985,341h1v1h-1zM988,341h1v1h-1zM991,341h1v1h-1zM994,341h1v1h-1zM997,341h1v1h-1zM1000,341h1v1h-1zM1003,341h1v1h-1zM1006,341h1v1h-1zM1009,341h1v1h-1zM1012,341h1v1h-1zM1015,341h1v1h-1zM1018,341h1v1h-1zM1021,341h1v1h-1zM1024,341h1v1h-1zM1027,341h1v1h-1zM1030,341h1v1h-1zM1033,341h1v1h-1zM1036,341h1v1h-1zM1039,341h1v1h-1zM1042,341h1v1h-1zM1045,341h1v1h-1zM1048,341h1v1h-1zM1051,341h1v1h-1zM1054,341h1v1h-1zM1057,341h1v1h-1zM1060,341h1v1h-1zM526,313h1v1h-1zM529,313h1v1h-1zM532,313h1v1h-1zM535,313h1v1h-1zM538,313h1v1h-1zM541,313h1v1h-1zM544,313h1v1h-1zM547,313h1v1h-1zM550,313h1v1h-1zM553,313h1v1h-1zM556,313h1v1h-1zM559,313h1v1h-1zM562,313h1v1h-1zM565,313h1v1h-1zM568,313h1v1h-1zM571,313h1v1h-1zM574,313h1v1h-1zM577,313h1v1h-1zM580,313h1v1h-1zM583,313h1v1h-1zM586,313h1v1h-1zM589,313h1v1h-1zM592,313h1v1h-1zM595,313h1v1h-1zM598,313h1v1h-1zM601,313h1v1h-1zM604,313h1v1h-1zM607,313h1v1h-1zM610,313h1v1h-1zM613,313h1v1h-1zM616,313h1v1h-1zM619,313h1v1h-1zM622,313h1v1h-1zM625,313h1v1h-1zM628,313h1v1h-1zM631,313h1v1h-1zM634,313h1v1h-1zM637,313h1v1h-1zM640,313h1v1h-1zM643,313h1v1h-1zM646,313h1v1h-1zM649,313h1v1h-1zM652,313h1v1h-1zM655,313h1v1h-1zM658,313h1v1h-1zM661,313h1v1h-1zM664,313h1v1h-1zM667,313h1v1h-1zM670,313h1v1h-1zM673,313h1v1h-1zM676,313h1v1h-1zM679,313h1v1h-1zM682,313h1v1h-1zM685,313h1v1h-1zM688,313h1v1h-1zM691,313h1v1h-1zM694,313h1v1h-1zM697,313h1v1h-1zM700,313h1v1h-1zM703,313h1v1h-1zM706,313h1v1h-1zM709,313h1v1h-1zM712,313h1v1h-1zM715,313h1v1h-1zM718,313h1v1h-1zM721,313h1v1h-1zM724,313h1v1h-1zM727,313h1v1h-1zM730,313h1v1h-1zM733,313h1v1h-1zM736,313h1v1h-1zM739,313h1v1h-1zM742,313h1v1h-1zM745,313h1v1h-1zM748,313h1v1h-1zM751,313h1v1h-1zM754,313h1v1h-1zM757,313h1v1h-1zM760,313h1v1h-1zM763,313h1v1h-1zM766,313h1v1h-1zM769,313h1v1h-1zM772,313h1v1h-1zM775,313h1v1h-1zM778,313h1v1h-1zM781,313h1v1h-1zM784,313h1v1h-1zM787,313h1v1h-1zM790,313h1v1h-1zM793,313h1v1h-1zM796,313h1v1h-1zM799,313h1v1h-1zM802,313h1v1h-1zM805,313h1v1h-1zM808,313h1v1h-1zM811,313h1v1h-1zM814,313h1v1h-1zM817,313h1v1h-1zM820,313h1v1h-1zM823,313h1v1h-1zM826,313h1v1h-1zM829,313h1v1h-1zM832,313h1v1h-1zM835,313h1v1h-1zM838,313h1v1h-1zM841,313h1v1h-1zM844,313h1v1h-1zM847,313h1v1h-1zM850,313h1v1h-1zM853,313h1v1h-1zM856,313h1v1h-1zM859,313h1v1h-1zM862,313h1v1h-1zM865,313h1v1h-1zM868,313h1v1h-1zM871,313h1v1h-1zM874,313h1v1h-1zM877,313h1v1h-1zM880,313h1v1h-1zM883,313h1v1h-1zM886,313h1v1h-1zM889,313h1v1h-1zM892,313h1v1h-1zM895,313h1v1h-1zM898,313h1v1h-1zM901,313h1v1h-1zM904,313h1v1h-1zM907,313h1v1h-1zM910,313h1v1h-1zM913,313h1v1h-1zM916,313h1v1h-1zM919,313h1v1h-1zM922,313h1v1h-1zM925,313h1v1h-1zM928,313h1v1h-1zM931,313h1v1h-1zM934,313h1v1h-1zM937,313h1v1h-1zM940,313h1v1h-1zM943,313h1v1h-1zM946,313h1v1h-1zM949,313h1v1h-1zM952,313h1v1h-1zM955,313h1v1h-1zM958,313h1v1h-1zM961,313h1v1h-1zM964,313h1v1h-1zM967,313h1v1h-1zM970,313h1v1h-1zM973,313h1v1h-1zM976,313h1v1h-1zM979,313h1v1h-1zM982,313h1v1h-1zM985,313h1v1h-1zM988,313h1v1h-1zM991,313h1v1h-1zM994,313h1v1h-1zM997,313h1v1h-1zM1000,313h1v1h-1zM1003,313h1v1h-1zM1006,313h1v1h-1zM1009,313h1v1h-1zM1012,313h1v1h-1zM1015,313h1v1h-1zM1018,313h1v1h-1zM1021,313h1v1h-1zM1024,313h1v1h-1zM1027,313h1v1h-1zM1030,313h1v1h-1zM1033,313h1v1h-1zM1036,313h1v1h-1zM1039,313h1v1h-1zM1042,313h1v1h-1zM1045,313h1v1h-1zM1048,313h1v1h-1zM1051,313h1v1h-1zM1054,313h1v1h-1zM1057,313h1v1h-1zM1060,313h1v1h-1zM526,284h1v1h-1zM529,284h1v1h-1zM532,284h1v1h-1zM535,284h1v1h-1zM538,284h1v1h-1zM541,284h1v1h-1zM544,284h1v1h-1zM547,284h1v1h-1zM550,284h1v1h-1zM553,284h1v1h-1zM556,284h1v1h-1zM559,284h1v1h-1zM562,284h1v1h-1zM565,284h1v1h-1zM568,284h1v1h-1zM571,284h1v1h-1zM574,284h1v1h-1zM577,284h1v1h-1zM580,284h1v1h-1zM583,284h1v1h-1zM586,284h1v1h-1zM589,284h1v1h-1zM592,284h1v1h-1zM595,284h1v1h-1zM598,284h1v1h-1zM601,284h1v1h-1zM604,284h1v1h-1zM607,284h1v1h-1zM610,284h1v1h-1zM613,284h1v1h-1zM616,284h1v1h-1zM619,284h1v1h-1zM622,284h1v1h-1zM625,284h1v1h-1zM628,284h1v1h-1zM631,284h1v1h-1zM634,284h1v1h-1zM637,284h1v1h-1zM640,284h1v1h-1zM643,284h1v1h-1zM646,284h1v1h-1zM649,284h1v1h-1zM652,284h1v1h-1zM655,284h1v1h-1zM658,284h1v1h-1zM661,284h1v1h-1zM664,284h1v1h-1zM667,284h1v1h-1zM670,284h1v1h-1zM673,284h1v1h-1zM676,284h1v1h-1zM679,284h1v1h-1zM682,284h1v1h-1zM685,284h1v1h-1zM688,284h1v1h-1zM691,284h1v1h-1zM694,284h1v1h-1zM697,284h1v1h-1zM700,284h1v1h-1zM703,284h1v1h-1zM706,284h1v1h-1zM709,284h1v1h-1zM712,284h1v1h-1zM715,284h1v1h-1zM718,284h1v1h-1zM721,284h1v1h-1zM724,284h1v1h-1zM727,284h1v1h-1zM730,284h1v1h-1zM733,284h1v1h-1zM736,284h1v1h-1zM739,284h1v1h-1zM742,284h1v1h-1zM745,284h1v1h-1zM748,284h1v1h-1zM751,284h1v1h-1zM754,284h1v1h-1zM757,284h1v1h-1zM760,284h1v1h-1zM763,284h1v1h-1zM766,284h1v1h-1zM769,284h1v1h-1zM772,284h1v1h-1zM775,284h1v1h-1zM778,284h1v1h-1zM781,284h1v1h-1zM784,284h1v1h-1zM787,284h1v1h-1zM790,284h1v1h-1zM793,284h1v1h-1zM796,284h1v1h-1zM799,284h1v1h-1zM802,284h1v1h-1zM805,284h1v1h-1zM808,284h1v1h-1zM811,284h1v1h-1zM814,284h1v1h-1zM817,284h1v1h-1zM820,284h1v1h-1zM823,284h1v1h-1zM826,284h1v1h-1zM829,284h1v1h-1zM832,284h1v1h-1zM835,284h1v1h-1zM838,284h1v1h-1zM841,284h1v1h-1zM844,284h1v1h-1zM847,284h1v1h-1zM850,284h1v1h-1zM853,284h1v1h-1zM856,284h1v1h-1zM859,284h1v1h-1zM862,284h1v1h-1zM865,284h1v1h-1zM868,284h1v1h-1zM871,284h1v1h-1zM874,284h1v1h-1zM877,284h1v1h-1zM880,284h1v1h-1zM883,284h1v1h-1zM886,284h1v1h-1zM889,284h1v1h-1zM892,284h1v1h-1zM895,284h1v1h-1zM898,284h1v1h-1zM901,284h1v1h-1zM904,284h1v1h-1zM907,284h1v1h-1zM910,284h1v1h-1zM913,284h1v1h-1zM916,284h1v1h-1zM919,284h1v1h-1zM922,284h1v1h-1zM925,284h1v1h-1zM928,284h1v1h-1zM931,284h1v1h-1zM934,284h1v1h-1zM937,284h1v1h-1zM940,284h1v1h-1zM943,284h1v1h-1zM946,284h1v1h-1zM949,284h1v1h-1zM952,284h1v1h-1zM955,284h1v1h-1zM958,284h1v1h-1zM961,284h1v1h-1zM964,284h1v1h-1zM967,284h1v1h-1zM970,284h1v1h-1zM973,284h1v1h-1zM976,284h1v1h-1zM979,284h1v1h-1zM982,284h1v1h-1zM985,284h1v1h-1zM988,284h1v1h-1zM991,284h1v1h-1zM994,284h1v1h-1zM997,284h1v1h-1zM1000,284h1v1h-1zM1003,284h1v1h-1zM1006,284h1v1h-1zM1009,284h1v1h-1zM1012,284h1v1h-1zM1015,284h1v1h-1zM1018,284h1v1h-1zM1021,284h1v1h-1zM1024,284h1v1h-1zM1027,284h1v1h-1zM1030,284h1v1h-1zM1033,284h1v1h-1zM1036,284h1v1h-1zM1039,284h1v1h-1zM1042,284h1v1h-1zM1045,284h1v1h-1zM1048,284h1v1h-1zM1051,284h1v1h-1zM1054,284h1v1h-1zM1057,284h1v1h-1zM1060,284h1v1h-1zM526,255h1v1h-1zM529,255h1v1h-1zM532,255h1v1h-1zM535,255h1v1h-1zM538,255h1v1h-1zM541,255h1v1h-1zM544,255h1v1h-1zM547,255h1v1h-1zM550,255h1v1h-1zM553,255h1v1h-1zM556,255h1v1h-1zM559,255h1v1h-1zM562,255h1v1h-1zM565,255h1v1h-1zM568,255h1v1h-1zM571,255h1v1h-1zM574,255h1v1h-1zM577,255h1v1h-1zM580,255h1v1h-1zM583,255h1v1h-1zM586,255h1v1h-1zM589,255h1v1h-1zM592,255h1v1h-1zM595,255h1v1h-1zM598,255h1v1h-1zM601,255h1v1h-1zM604,255h1v1h-1zM607,255h1v1h-1zM610,255h1v1h-1zM613,255h1v1h-1zM616,255h1v1h-1zM619,255h1v1h-1zM622,255h1v1h-1zM625,255h1v1h-1zM628,255h1v1h-1zM631,255h1v1h-1zM634,255h1v1h-1zM637,255h1v1h-1zM640,255h1v1h-1zM643,255h1v1h-1zM646,255h1v1h-1zM649,255h1v1h-1zM652,255h1v1h-1zM655,255h1v1h-1zM658,255h1v1h-1zM661,255h1v1h-1zM664,255h1v1h-1zM667,255h1v1h-1zM670,255h1v1h-1zM673,255h1v1h-1zM676,255h1v1h-1zM679,255h1v1h-1zM682,255h1v1h-1zM685,255h1v1h-1zM688,255h1v1h-1zM691,255h1v1h-1zM694,255h1v1h-1zM697,255h1v1h-1zM700,255h1v1h-1zM703,255h1v1h-1zM706,255h1v1h-1zM709,255h1v1h-1zM712,255h1v1h-1zM715,255h1v1h-1zM718,255h1v1h-1zM721,255h1v1h-1zM724,255h1v1h-1zM727,255h1v1h-1zM730,255h1v1h-1zM733,255h1v1h-1zM736,255h1v1h-1zM739,255h1v1h-1zM742,255h1v1h-1zM745,255h1v1h-1zM748,255h1v1h-1zM751,255h1v1h-1zM754,255h1v1h-1zM757,255h1v1h-1zM760,255h1v1h-1zM763,255h1v1h-1zM766,255h1v1h-1zM769,255h1v1h-1zM772,255h1v1h-1zM775,255h1v1h-1zM778,255h1v1h-1zM781,255h1v1h-1zM784,255h1v1h-1zM787,255h1v1h-1zM790,255h1v1h-1zM793,255h1v1h-1zM796,255h1v1h-1zM799,255h1v1h-1zM802,255h1v1h-1zM805,255h1v1h-1zM808,255h1v1h-1zM811,255h1v1h-1zM814,255h1v1h-1zM817,255h1v1h-1zM820,255h1v1h-1zM823,255h1v1h-1zM826,255h1v1h-1zM829,255h1v1h-1zM832,255h1v1h-1zM835,255h1v1h-1zM838,255h1v1h-1zM841,255h1v1h-1zM844,255h1v1h-1zM847,255h1v1h-1zM850,255h1v1h-1zM853,255h1v1h-1zM856,255h1v1h-1zM859,255h1v1h-1zM862,255h1v1h-1zM865,255h1v1h-1zM868,255h1v1h-1zM871,255h1v1h-1zM874,255h1v1h-1zM877,255h1v1h-1zM880,255h1v1h-1zM883,255h1v1h-1zM886,255h1v1h-1zM889,255h1v1h-1zM892,255h1v1h-1zM895,255h1v1h-1zM898,255h1v1h-1zM901,255h1v1h-1zM904,255h1v1h-1zM907,255h1v1h-1zM910,255h1v1h-1zM913,255h1v1h-1zM916,255h1v1h-1zM919,255h1v1h-1zM922,255h1v1h-1zM925,255h1v1h-1zM928,255h1v1h-1zM931,255h1v1h-1zM934,255h1v1h-1zM937,255h1v1h-1zM940,255h1v1h-1zM943,255h1v1h-1zM946,255h1v1h-1zM949,255h1v1h-1zM952,255h1v1h-1zM955,255h1v1h-1zM958,255h1v1h-1zM961,255h1v1h-1zM964,255h1v1h-1zM967,255h1v1h-1zM970,255h1v1h-1zM973,255h1v1h-1zM976,255h1v1h-1zM979,255h1v1h-1zM982,255h1v1h-1zM985,255h1v1h-1zM988,255h1v1h-1zM991,255h1v1h-1zM994,255h1v1h-1zM997,255h1v1h-1zM1000,255h1v1h-1zM1003,255h1v1h-1zM1006,255h1v1h-1zM1009,255h1v1h-1zM1012,255h1v1h-1zM1015,255h1v1h-1zM1018,255h1v1h-1zM1021,255h1v1h-1zM1024,255h1v1h-1zM1027,255h1v1h-1zM1030,255h1v1h-1zM1033,255h1v1h-1zM1036,255h1v1h-1zM1039,255h1v1h-1zM1042,255h1v1h-1zM1045,255h1v1h-1zM1048,255h1v1h-1zM1051,255h1v1h-1zM1054,255h1v1h-1zM1057,255h1v1h-1zM1060,255h1v1h-1zM526,227h1v1h-1zM529,227h1v1h-1zM532,227h1v1h-1zM535,227h1v1h-1zM538,227h1v1h-1zM541,227h1v1h-1zM544,227h1v1h-1zM547,227h1v1h-1zM550,227h1v1h-1zM553,227h1v1h-1zM556,227h1v1h-1zM559,227h1v1h-1zM562,227h1v1h-1zM565,227h1v1h-1zM568,227h1v1h-1zM571,227h1v1h-1zM574,227h1v1h-1zM577,227h1v1h-1zM580,227h1v1h-1zM583,227h1v1h-1zM586,227h1v1h-1zM589,227h1v1h-1zM592,227h1v1h-1zM595,227h1v1h-1zM598,227h1v1h-1zM601,227h1v1h-1zM604,227h1v1h-1zM607,227h1v1h-1zM610,227h1v1h-1zM613,227h1v1h-1zM616,227h1v1h-1zM619,227h1v1h-1zM622,227h1v1h-1zM625,227h1v1h-1zM628,227h1v1h-1zM631,227h1v1h-1zM634,227h1v1h-1zM637,227h1v1h-1zM640,227h1v1h-1zM643,227h1v1h-1zM646,227h1v1h-1zM649,227h1v1h-1zM652,227h1v1h-1zM655,227h1v1h-1zM658,227h1v1h-1zM661,227h1v1h-1zM664,227h1v1h-1zM667,227h1v1h-1zM670,227h1v1h-1zM673,227h1v1h-1zM676,227h1v1h-1zM679,227h1v1h-1zM682,227h1v1h-1zM685,227h1v1h-1zM688,227h1v1h-1zM691,227h1v1h-1zM694,227h1v1h-1zM697,227h1v1h-1zM700,227h1v1h-1zM703,227h1v1h-1zM706,227h1v1h-1zM709,227h1v1h-1zM712,227h1v1h-1zM715,227h1v1h-1zM718,227h1v1h-1zM721,227h1v1h-1zM724,227h1v1h-1zM727,227h1v1h-1zM730,227h1v1h-1zM733,227h1v1h-1zM736,227h1v1h-1zM739,227h1v1h-1zM742,227h1v1h-1zM745,227h1v1h-1zM748,227h1v1h-1zM751,227h1v1h-1zM754,227h1v1h-1zM757,227h1v1h-1zM760,227h1v1h-1zM763,227h1v1h-1zM766,227h1v1h-1zM769,227h1v1h-1zM772,227h1v1h-1zM775,227h1v1h-1zM778,227h1v1h-1zM781,227h1v1h-1zM784,227h1v1h-1zM787,227h1v1h-1zM790,227h1v1h-1zM793,227h1v1h-1zM796,227h1v1h-1zM799,227h1v1h-1zM802,227h1v1h-1zM805,227h1v1h-1zM808,227h1v1h-1zM811,227h1v1h-1zM814,227h1v1h-1zM817,227h1v1h-1zM820,227h1v1h-1zM823,227h1v1h-1zM826,227h1v1h-1zM829,227h1v1h-1zM832,227h1v1h-1zM835,227h1v1h-1zM838,227h1v1h-1zM841,227h1v1h-1zM844,227h1v1h-1zM847,227h1v1h-1zM850,227h1v1h-1zM853,227h1v1h-1zM856,227h1v1h-1zM859,227h1v1h-1zM862,227h1v1h-1zM865,227h1v1h-1zM868,227h1v1h-1zM871,227h1v1h-1zM874,227h1v1h-1zM877,227h1v1h-1zM880,227h1v1h-1zM883,227h1v1h-1zM886,227h1v1h-1zM889,227h1v1h-1zM892,227h1v1h-1zM895,227h1v1h-1zM898,227h1v1h-1zM901,227h1v1h-1zM904,227h1v1h-1zM907,227h1v1h-1zM910,227h1v1h-1zM913,227h1v1h-1zM916,227h1v1h-1zM919,227h1v1h-1zM922,227h1v1h-1zM925,227h1v1h-1zM928,227h1v1h-1zM931,227h1v1h-1zM934,227h1v1h-1zM937,227h1v1h-1zM940,227h1v1h-1zM943,227h1v1h-1zM946,227h1v1h-1zM949,227h1v1h-1zM952,227h1v1h-1zM955,227h1v1h-1zM958,227h1v1h-1zM961,227h1v1h-1zM964,227h1v1h-1zM967,227h1v1h-1zM970,227h1v1h-1zM973,227h1v1h-1zM976,227h1v1h-1zM979,227h1v1h-1zM982,227h1v1h-1zM985,227h1v1h-1zM988,227h1v1h-1zM991,227h1v1h-1zM994,227h1v1h-1zM997,227h1v1h-1zM1000,227h1v1h-1zM1003,227h1v1h-1zM1006,227h1v1h-1zM1009,227h1v1h-1zM1012,227h1v1h-1zM1015,227h1v1h-1zM1018,227h1v1h-1zM1021,227h1v1h-1zM1024,227h1v1h-1zM1027,227h1v1h-1zM1030,227h1v1h-1zM1033,227h1v1h-1zM1036,227h1v1h-1zM1039,227h1v1h-1zM1042,227h1v1h-1zM1045,227h1v1h-1zM1048,227h1v1h-1zM1051,227h1v1h-1zM1054,227h1v1h-1zM1057,227h1v1h-1zM1060,227h1v1h-1zM526,198h1v1h-1zM529,198h1v1h-1zM532,198h1v1h-1zM535,198h1v1h-1zM538,198h1v1h-1zM541,198h1v1h-1zM544,198h1v1h-1zM547,198h1v1h-1zM550,198h1v1h-1zM553,198h1v1h-1zM556,198h1v1h-1zM559,198h1v1h-1zM562,198h1v1h-1zM565,198h1v1h-1zM568,198h1v1h-1zM571,198h1v1h-1zM574,198h1v1h-1zM577,198h1v1h-1zM580,198h1v1h-1zM583,198h1v1h-1zM586,198h1v1h-1zM589,198h1v1h-1zM592,198h1v1h-1zM595,198h1v1h-1zM598,198h1v1h-1zM601,198h1v1h-1zM604,198h1v1h-1zM607,198h1v1h-1zM610,198h1v1h-1zM613,198h1v1h-1zM616,198h1v1h-1zM619,198h1v1h-1zM622,198h1v1h-1zM625,198h1v1h-1zM628,198h1v1h-1zM631,198h1v1h-1zM634,198h1v1h-1zM637,198h1v1h-1zM640,198h1v1h-1zM643,198h1v1h-1zM646,198h1v1h-1zM649,198h1v1h-1zM652,198h1v1h-1zM655,198h1v1h-1zM658,198h1v1h-1zM661,198h1v1h-1zM664,198h1v1h-1zM667,198h1v1h-1zM670,198h1v1h-1zM673,198h1v1h-1zM676,198h1v1h-1zM679,198h1v1h-1zM682,198h1v1h-1zM685,198h1v1h-1zM688,198h1v1h-1zM691,198h1v1h-1zM694,198h1v1h-1zM697,198h1v1h-1zM700,198h1v1h-1zM703,198h1v1h-1zM706,198h1v1h-1zM709,198h1v1h-1zM712,198h1v1h-1zM715,198h1v1h-1zM718,198h1v1h-1zM721,198h1v1h-1zM724,198h1v1h-1zM727,198h1v1h-1zM730,198h1v1h-1zM733,198h1v1h-1zM736,198h1v1h-1zM739,198h1v1h-1zM742,198h1v1h-1zM745,198h1v1h-1zM748,198h1v1h-1zM751,198h1v1h-1zM754,198h1v1h-1zM757,198h1v1h-1zM760,198h1v1h-1zM763,198h1v1h-1zM766,198h1v1h-1zM769,198h1v1h-1zM772,198h1v1h-1zM775,198h1v1h-1zM778,198h1v1h-1zM781,198h1v1h-1zM784,198h1v1h-1zM787,198h1v1h-1zM790,198h1v1h-1zM793,198h1v1h-1zM796,198h1v1h-1zM799,198h1v1h-1zM802,198h1v1h-1zM805,198h1v1h-1zM808,198h1v1h-1zM811,198h1v1h-1zM814,198h1v1h-1zM817,198h1v1h-1zM820,198h1v1h-1zM823,198h1v1h-1zM826,198h1v1h-1zM829,198h1v1h-1zM832,198h1v1h-1zM835,198h1v1h-1zM838,198h1v1h-1zM841,198h1v1h-1zM844,198h1v1h-1zM847,198h1v1h-1zM850,198h1v1h-1zM853,198h1v1h-1zM856,198h1v1h-1zM859,198h1v1h-1zM862,198h1v1h-1zM865,198h1v1h-1zM868,198h1v1h-1zM871,198h1v1h-1zM874,198h1v1h-1zM877,198h1v1h-1zM880,198h1v1h-1zM883,198h1v1h-1zM886,198h1v1h-1zM889,198h1v1h-1zM892,198h1v1h-1zM895,198h1v1h-1zM898,198h1v1h-1zM901,198h1v1h-1zM904,198h1v1h-1zM907,198h1v1h-1zM910,198h1v1h-1zM913,198h1v1h-1zM916,198h1v1h-1zM919,198h1v1h-1zM922,198h1v1h-1zM925,198h1v1h-1zM928,198h1v1h-1zM931,198h1v1h-1zM934,198h1v1h-1zM937,198h1v1h-1zM940,198h1v1h-1zM943,198h1v1h-1zM946,198h1v1h-1zM949,198h1v1h-1zM952,198h1v1h-1zM955,198h1v1h-1zM958,198h1v1h-1zM961,198h1v1h-1zM964,198h1v1h-1zM967,198h1v1h-1zM970,198h1v1h-1zM973,198h1v1h-1zM976,198h1v1h-1zM979,198h1v1h-1zM982,198h1v1h-1zM985,198h1v1h-1zM988,198h1v1h-1zM991,198h1v1h-1zM994,198h1v1h-1zM997,198h1v1h-1zM1000,198h1v1h-1zM1003,198h1v1h-1zM1006,198h1v1h-1zM1009,198h1v1h-1zM1012,198h1v1h-1zM1015,198h1v1h-1zM1018,198h1v1h-1zM1021,198h1v1h-1zM1024,198h1v1h-1zM1027,198h1v1h-1zM1030,198h1v1h-1zM1033,198h1v1h-1zM1036,198h1v1h-1zM1039,198h1v1h-1zM1042,198h1v1h-1zM1045,198h1v1h-1zM1048,198h1v1h-1zM1051,198h1v1h-1zM1054,198h1v1h-1zM1057,198h1v1h-1zM1060,198h1v1h-1zM526,169h1v1h-1zM529,169h1v1h-1zM532,169h1v1h-1zM535,169h1v1h-1zM538,169h1v1h-1zM541,169h1v1h-1zM544,169h1v1h-1zM547,169h1v1h-1zM550,169h1v1h-1zM553,169h1v1h-1zM556,169h1v1h-1zM559,169h1v1h-1zM562,169h1v1h-1zM565,169h1v1h-1zM568,169h1v1h-1zM571,169h1v1h-1zM574,169h1v1h-1zM577,169h1v1h-1zM580,169h1v1h-1zM583,169h1v1h-1zM586,169h1v1h-1zM589,169h1v1h-1zM592,169h1v1h-1zM595,169h1v1h-1zM598,169h1v1h-1zM601,169h1v1h-1zM604,169h1v1h-1zM607,169h1v1h-1zM610,169h1v1h-1zM613,169h1v1h-1zM616,169h1v1h-1zM619,169h1v1h-1zM622,169h1v1h-1zM625,169h1v1h-1zM628,169h1v1h-1zM631,169h1v1h-1zM634,169h1v1h-1zM637,169h1v1h-1zM640,169h1v1h-1zM643,169h1v1h-1zM646,169h1v1h-1zM649,169h1v1h-1zM652,169h1v1h-1zM655,169h1v1h-1zM658,169h1v1h-1zM661,169h1v1h-1zM664,169h1v1h-1zM667,169h1v1h-1zM670,169h1v1h-1zM673,169h1v1h-1zM676,169h1v1h-1zM679,169h1v1h-1zM682,169h1v1h-1zM685,169h1v1h-1zM688,169h1v1h-1zM691,169h1v1h-1zM694,169h1v1h-1zM697,169h1v1h-1zM700,169h1v1h-1zM703,169h1v1h-1zM706,169h1v1h-1zM709,169h1v1h-1zM712,169h1v1h-1zM715,169h1v1h-1zM718,169h1v1h-1zM721,169h1v1h-1zM724,169h1v1h-1zM727,169h1v1h-1zM730,169h1v1h-1zM733,169h1v1h-1zM736,169h1v1h-1zM739,169h1v1h-1zM742,169h1v1h-1zM745,169h1v1h-1zM748,169h1v1h-1zM751,169h1v1h-1zM754,169h1v1h-1zM757,169h1v1h-1zM760,169h1v1h-1zM763,169h1v1h-1zM766,169h1v1h-1zM769,169h1v1h-1zM772,169h1v1h-1zM775,169h1v1h-1zM778,169h1v1h-1zM781,169h1v1h-1zM784,169h1v1h-1zM787,169h1v1h-1zM790,169h1v1h-1zM793,169h1v1h-1zM796,169h1v1h-1zM799,169h1v1h-1zM802,169h1v1h-1zM805,169h1v1h-1zM808,169h1v1h-1zM811,169h1v1h-1zM814,169h1v1h-1zM817,169h1v1h-1zM820,169h1v1h-1zM823,169h1v1h-1zM826,169h1v1h-1zM829,169h1v1h-1zM832,169h1v1h-1zM835,169h1v1h-1zM838,169h1v1h-1zM841,169h1v1h-1zM844,169h1v1h-1zM847,169h1v1h-1zM850,169h1v1h-1zM853,169h1v1h-1zM856,169h1v1h-1zM859,169h1v1h-1zM862,169h1v1h-1zM865,169h1v1h-1zM868,169h1v1h-1zM871,169h1v1h-1zM874,169h1v1h-1zM877,169h1v1h-1zM880,169h1v1h-1zM883,169h1v1h-1zM886,169h1v1h-1zM889,169h1v1h-1zM892,169h1v1h-1zM895,169h1v1h-1zM898,169h1v1h-1zM901,169h1v1h-1zM904,169h1v1h-1zM907,169h1v1h-1zM910,169h1v1h-1zM913,169h1v1h-1zM916,169h1v1h-1zM919,169h1v1h-1zM922,169h1v1h-1zM925,169h1v1h-1zM928,169h1v1h-1zM931,169h1v1h-1zM934,169h1v1h-1zM937,169h1v1h-1zM940,169h1v1h-1zM943,169h1v1h-1zM946,169h1v1h-1zM949,169h1v1h-1zM952,169h1v1h-1zM955,169h1v1h-1zM958,169h1v1h-1zM961,169h1v1h-1zM964,169h1v1h-1zM967,169h1v1h-1zM970,169h1v1h-1zM973,169h1v1h-1zM976,169h1v1h-1zM979,169h1v1h-1zM982,169h1v1h-1zM985,169h1v1h-1zM988,169h1v1h-1zM991,169h1v1h-1zM994,169h1v1h-1zM997,169h1v1h-1zM1000,169h1v1h-1zM1003,169h1v1h-1zM1006,169h1v1h-1zM1009,169h1v1h-1zM1012,169h1v1h-1zM1015,169h1v1h-1zM1018,169h1v1h-1zM1021,169h1v1h-1zM1024,169h1v1h-1zM1027,169h1v1h-1zM1030,169h1v1h-1zM1033,169h1v1h-1zM1036,169h1v1h-1zM1039,169h1v1h-1zM1042,169h1v1h-1zM1045,169h1v1h-1zM1048,169h1v1h-1zM1051,169h1v1h-1zM1054,169h1v1h-1zM1057,169h1v1h-1zM1060,169h1v1h-1zM526,141h1v1h-1zM529,141h1v1h-1zM532,141h1v1h-1zM535,141h1v1h-1zM538,141h1v1h-1zM541,141h1v1h-1zM544,141h1v1h-1zM547,141h1v1h-1zM550,141h1v1h-1zM553,141h1v1h-1zM556,141h1v1h-1zM559,141h1v1h-1zM562,141h1v1h-1zM565,141h1v1h-1zM568,141h1v1h-1zM571,141h1v1h-1zM574,141h1v1h-1zM577,141h1v1h-1zM580,141h1v1h-1zM583,141h1v1h-1zM586,141h1v1h-1zM589,141h1v1h-1zM592,141h1v1h-1zM595,141h1v1h-1zM598,141h1v1h-1zM601,141h1v1h-1zM604,141h1v1h-1zM607,141h1v1h-1zM610,141h1v1h-1zM613,141h1v1h-1zM616,141h1v1h-1zM619,141h1v1h-1zM622,141h1v1h-1zM625,141h1v1h-1zM628,141h1v1h-1zM631,141h1v1h-1zM634,141h1v1h-1zM637,141h1v1h-1zM640,141h1v1h-1zM643,141h1v1h-1zM646,141h1v1h-1zM649,141h1v1h-1zM652,141h1v1h-1zM655,141h1v1h-1zM658,141h1v1h-1zM661,141h1v1h-1zM664,141h1v1h-1zM667,141h1v1h-1zM670,141h1v1h-1zM673,141h1v1h-1zM676,141h1v1h-1zM679,141h1v1h-1zM682,141h1v1h-1zM685,141h1v1h-1zM688,141h1v1h-1zM691,141h1v1h-1zM694,141h1v1h-1zM697,141h1v1h-1zM700,141h1v1h-1zM703,141h1v1h-1zM706,141h1v1h-1zM709,141h1v1h-1zM712,141h1v1h-1zM715,141h1v1h-1zM718,141h1v1h-1zM721,141h1v1h-1zM724,141h1v1h-1zM727,141h1v1h-1zM730,141h1v1h-1zM733,141h1v1h-1zM736,141h1v1h-1zM739,141h1v1h-1zM742,141h1v1h-1zM745,141h1v1h-1zM748,141h1v1h-1zM751,141h1v1h-1zM754,141h1v1h-1zM757,141h1v1h-1zM760,141h1v1h-1zM763,141h1v1h-1zM766,141h1v1h-1zM769,141h1v1h-1zM772,141h1v1h-1zM775,141h1v1h-1zM778,141h1v1h-1zM781,141h1v1h-1zM784,141h1v1h-1zM787,141h1v1h-1zM790,141h1v1h-1zM793,141h1v1h-1zM796,141h1v1h-1zM799,141h1v1h-1zM802,141h1v1h-1zM805,141h1v1h-1zM808,141h1v1h-1zM811,141h1v1h-1zM814,141h1v1h-1zM817,141h1v1h-1zM820,141h1v1h-1zM823,141h1v1h-1zM826,141h1v1h-1zM829,141h1v1h-1zM832,141h1v1h-1zM835,141h1v1h-1zM838,141h1v1h-1zM841,141h1v1h-1zM844,141h1v1h-1zM847,141h1v1h-1zM850,141h1v1h-1zM853,141h1v1h-1zM856,141h1v1h-1zM859,141h1v1h-1zM862,141h1v1h-1zM865,141h1v1h-1zM868,141h1v1h-1zM871,141h1v1h-1zM874,141h1v1h-1zM877,141h1v1h-1zM880,141h1v1h-1zM883,141h1v1h-1zM886,141h1v1h-1zM889,141h1v1h-1zM892,141h1v1h-1zM895,141h1v1h-1zM898,141h1v1h-1zM901,141h1v1h-1zM904,141h1v1h-1zM907,141h1v1h-1zM910,141h1v1h-1zM913,141h1v1h-1zM916,141h1v1h-1zM919,141h1v1h-1zM922,141h1v1h-1zM925,141h1v1h-1zM928,141h1v1h-1zM931,141h1v1h-1zM934,141h1v1h-1zM937,141h1v1h-1zM940,141h1v1h-1zM943,141h1v1h-1zM946,141h1v1h-1zM949,141h1v1h-1zM952,141h1v1h-1zM955,141h1v1h-1zM958,141h1v1h-1zM961,141h1v1h-1zM964,141h1v1h-1zM967,141h1v1h-1zM970,141h1v1h-1zM973,141h1v1h-1zM976,141h1v1h-1zM979,141h1v1h-1zM982,141h1v1h-1zM985,141h1v1h-1zM988,141h1v1h-1zM991,141h1v1h-1zM994,141h1v1h-1zM997,141h1v1h-1zM1000,141h1v1h-1zM1003,141h1v1h-1zM1006,141h1v1h-1zM1009,141h1v1h-1zM1012,141h1v1h-1zM1015,141h1v1h-1zM1018,141h1v1h-1zM1021,141h1v1h-1zM1024,141h1v1h-1zM1027,141h1v1h-1zM1030,141h1v1h-1zM1033,141h1v1h-1zM1036,141h1v1h-1zM1039,141h1v1h-1zM1042,141h1v1h-1zM1045,141h1v1h-1zM1048,141h1v1h-1zM1051,141h1v1h-1zM1054,141h1v1h-1zM1057,141h1v1h-1zM1060,141h1v1h-1zM526,112h1v1h-1zM529,112h1v1h-1zM532,112h1v1h-1zM535,112h1v1h-1zM538,112h1v1h-1zM541,112h1v1h-1zM544,112h1v1h-1zM547,112h1v1h-1zM550,112h1v1h-1zM553,112h1v1h-1zM556,112h1v1h-1zM559,112h1v1h-1zM562,112h1v1h-1zM565,112h1v1h-1zM568,112h1v1h-1zM571,112h1v1h-1zM574,112h1v1h-1zM577,112h1v1h-1zM580,112h1v1h-1zM583,112h1v1h-1zM586,112h1v1h-1zM589,112h1v1h-1zM592,112h1v1h-1zM595,112h1v1h-1zM598,112h1v1h-1zM601,112h1v1h-1zM604,112h1v1h-1zM607,112h1v1h-1zM610,112h1v1h-1zM613,112h1v1h-1zM616,112h1v1h-1zM619,112h1v1h-1zM622,112h1v1h-1zM625,112h1v1h-1zM628,112h1v1h-1zM631,112h1v1h-1zM634,112h1v1h-1zM637,112h1v1h-1zM640,112h1v1h-1zM643,112h1v1h-1zM646,112h1v1h-1zM649,112h1v1h-1zM652,112h1v1h-1zM655,112h1v1h-1zM658,112h1v1h-1zM661,112h1v1h-1zM664,112h1v1h-1zM667,112h1v1h-1zM670,112h1v1h-1zM673,112h1v1h-1zM676,112h1v1h-1zM679,112h1v1h-1zM682,112h1v1h-1zM685,112h1v1h-1zM688,112h1v1h-1zM691,112h1v1h-1zM694,112h1v1h-1zM697,112h1v1h-1zM700,112h1v1h-1zM703,112h1v1h-1zM706,112h1v1h-1zM709,112h1v1h-1zM712,112h1v1h-1zM715,112h1v1h-1zM718,112h1v1h-1zM721,112h1v1h-1zM724,112h1v1h-1zM727,112h1v1h-1zM730,112h1v1h-1zM733,112h1v1h-1zM736,112h1v1h-1zM739,112h1v1h-1zM742,112h1v1h-1zM745,112h1v1h-1zM748,112h1v1h-1zM751,112h1v1h-1zM754,112h1v1h-1zM757,112h1v1h-1zM760,112h1v1h-1zM763,112h1v1h-1zM766,112h1v1h-1zM769,112h1v1h-1zM772,112h1v1h-1zM775,112h1v1h-1zM778,112h1v1h-1zM781,112h1v1h-1zM784,112h1v1h-1zM787,112h1v1h-1zM790,112h1v1h-1zM793,112h1v1h-1zM796,112h1v1h-1zM799,112h1v1h-1zM802,112h1v1h-1zM805,112h1v1h-1zM808,112h1v1h-1zM811,112h1v1h-1zM814,112h1v1h-1zM817,112h1v1h-1zM820,112h1v1h-1zM823,112h1v1h-1zM826,112h1v1h-1zM829,112h1v1h-1zM832,112h1v1h-1zM835,112h1v1h-1zM838,112h1v1h-1zM841,112h1v1h-1zM844,112h1v1h-1zM847,112h1v1h-1zM850,112h1v1h-1zM853,112h1v1h-1zM856,112h1v1h-1zM859,112h1v1h-1zM862,112h1v1h-1zM865,112h1v1h-1zM868,112h1v1h-1zM871,112h1v1h-1zM874,112h1v1h-1zM877,112h1v1h-1zM880,112h1v1h-1zM883,112h1v1h-1zM886,112h1v1h-1zM889,112h1v1h-1zM892,112h1v1h-1zM895,112h1v1h-1zM898,112h1v1h-1zM901,112h1v1h-1zM904,112h1v1h-1zM907,112h1v1h-1zM910,112h1v1h-1zM913,112h1v1h-1zM916,112h1v1h-1zM919,112h1v1h-1zM922,112h1v1h-1zM925,112h1v1h-1zM928,112h1v1h-1zM931,112h1v1h-1zM934,112h1v1h-1zM937,112h1v1h-1zM940,112h1v1h-1zM943,112h1v1h-1zM946,112h1v1h-1zM949,112h1v1h-1zM952,112h1v1h-1zM955,112h1v1h-1zM958,112h1v1h-1zM961,112h1v1h-1zM964,112h1v1h-1zM967,112h1v1h-1zM970,112h1v1h-1zM973,112h1v1h-1zM976,112h1v1h-1zM979,112h1v1h-1zM982,112h1v1h-1zM985,112h1v1h-1zM988,112h1v1h-1zM991,112h1v1h-1zM994,112h1v1h-1zM997,112h1v1h-1zM1000,112h1v1h-1zM1003,112h1v1h-1zM1006,112h1v1h-1zM1009,112h1v1h-1zM1012,112h1v1h-1zM1015,112h1v1h-1zM1018,112h1v1h-1zM1021,112h1v1h-1zM1024,112h1v1h-1zM1027,112h1v1h-1zM1030,112h1v1h-1zM1033,112h1v1h-1zM1036,112h1v1h-1zM1039,112h1v1h-1zM1042,112h1v1h-1zM1045,112h1v1h-1zM1048,112h1v1h-1zM1051,112h1v1h-1zM1054,112h1v1h-1zM1057,112h1v1h-1zM1060,112h1v1h-1z" fill="#000"/><path d="M524,361h1v10h-1zM524,113h1v7h-1zM526,113h1v1h-1zM529,113h1v1h-1zM532,113h1v1h-1zM534,113h1v1h-1zM537,366h1v5h-1zM537,113h1v2h-1zM540,113h1v1h-1zM542,113h1v1h-1zM545,113h1v1h-1zM548,113h1v1h-1zM551,366h1v5h-1zM551,113h1v2h-1zM553,113h1v1h-1zM556,113h1v1h-1zM559,113h1v1h-1zM561,113h1v1h-1zM564,366h1v5h-1zM564,113h1v2h-1zM567,113h1v1h-1zM569,113h1v1h-1zM572,113h1v1h-1zM575,113h1v1h-1zM577,361h1v10h-1zM577,113h1v7h-1zM580,113h1v1h-1zM583,113h1v1h-1zM585,113h1v1h-1zM588,113h1v1h-1zM591,366h1v5h-1zM591,113h1v2h-1zM594,113h1v1h-1zM596,113h1v1h-1zM599,113h1v1h-1zM602,113h1v1h-1zM604,366h1v5h-1zM604,113h1v2h-1zM607,113h1v1h-1zM610,113h1v1h-1zM612,113h1v1h-1zM615,113h1v1h-1zM618,366h1v5h-1zM618,113h1v2h-1zM620,113h1v1h-1zM623,113h1v1h-1zM626,113h1v1h-1zM628,113h1v1h-1zM631,361h1v10h-1zM631,113h1v7h-1zM634,113h1v1h-1zM636,113h1v1h-1zM639,113h1v1h-1zM642,113h1v1h-1zM645,366h1v5h-1zM645,113h1v2h-1zM647,113h1v1h-1zM650,113h1v1h-1zM653,113h1v1h-1zM655,113h1v1h-1zM658,366h1v5h-1zM658,113h1v2h-1zM661,113h1v1h-1zM663,113h1v1h-1zM666,113h1v1h-1zM669,113h1v1h-1zM671,366h1v5h-1zM671,113h1v2h-1zM674,113h1v1h-1zM677,113h1v1h-1zM679,113h1v1h-1zM682,113h1v1h-1zM685,361h1v10h-1zM685,113h1v7h-1zM687,113h1v1h-1zM690,113h1v1h-1zM693,113h1v1h-1zM696,113h1v1h-1zM698,366h1v5h-1zM698,113h1v2h-1zM701,113h1v1h-1zM704,113h1v1h-1zM706,113h1v1h-1zM709,113h1v1h-1zM712,366h1v5h-1zM712,113h1v2h-1zM714,113h1v1h-1zM717,113h1v1h-1zM720,113h1v1h-1zM722,113h1v1h-1zM725,366h1v5h-1zM725,113h1v2h-1zM728,113h1v1h-1zM730,113h1v1h-1zM733,113h1v1h-1zM736,113h1v1h-1zM739,361h1v10h-1zM739,113h1v7h-1zM741,113h1v1h-1zM744,113h1v1h-1zM747,113h1v1h-1zM749,113h1v1h-1zM752,366h1v5h-1zM752,113h1v2h-1zM755,113h1v1h-1zM757,113h1v1h-1zM760,113h1v1h-1zM763,113h1v1h-1zM765,366h1v5h-1zM765,113h1v2h-1zM768,113h1v1h-1zM771,113h1v1h-1zM773,113h1v1h-1zM776,113h1v1h-1zM779,366h1v5h-1zM779,113h1v2h-1zM781,113h1v1h-1zM784,113h1v1h-1zM787,113h1v1h-1zM790,113h1v1h-1zM792,361h1v10h-1zM792,113h1v7h-1zM795,113h1v1h-1zM798,113h1v1h-1zM800,113h1v1h-1zM803,113h1v1h-1zM806,366h1v5h-1zM806,113h1v2h-1zM808,113h1v1h-1zM811,113h1v1h-1zM814,113h1v1h-1zM816,113h1v1h-1zM819,366h1v5h-1zM819,113h1v2h-1zM822,113h1v1h-1zM824,113h1v1h-1zM827,113h1v1h-1zM830,113h1v1h-1zM832,366h1v5h-1zM832,113h1v2h-1zM835,113h1v1h-1zM838,113h1v1h-1zM841,113h1v1h-1zM843,113h1v1h-1zM846,361h1v10h-1zM846,113h1v7h-1zM849,113h1v1h-1zM851,113h1v1h-1zM854,113h1v1h-1zM857,113h1v1h-1zM859,366h1v5h-1zM859,113h1v2h-1zM862,113h1v1h-1zM865,113h1v1h-1zM867,113h1v1h-1zM870,113h1v1h-1zM873,366h1v5h-1zM873,113h1v2h-1zM875,113h1v1h-1zM878,113h1v1h-1zM881,113h1v1h-1zM883,113h1v1h-1zM886,366h1v5h-1zM886,113h1v2h-1zM889,113h1v1h-1zM892,113h1v1h-1zM894,113h1v1h-1zM897,113h1v1h-1zM900,361h1v10h-1zM900,113h1v7h-1zM902,113h1v1h-1zM905,113h1v1h-1zM908,113h1v1h-1zM910,113h1v1h-1zM913,366h1v5h-1zM913,113h1v2h-1zM916,113h1v1h-1zM918,113h1v1h-1zM921,113h1v1h-1zM924,113h1v1h-1zM926,366h1v5h-1zM926,113h1v2h-1zM929,113h1v1h-1zM932,113h1v1h-1zM935,113h1v1h-1zM937,113h1v1h-1zM940,366h1v5h-1zM940,113h1v2h-1zM943,113h1v1h-1zM945,113h1v1h-1zM948,113h1v1h-1zM951,113h1v1h-1zM953,361h1v10h-1zM953,113h1v7h-1zM956,113h1v1h-1zM959,113h1v1h-1zM961,113h1v1h-1zM964,113h1v1h-1zM967,366h1v5h-1zM967,113h1v2h-1zM969,113h1v1h-1zM972,113h1v1h-1zM975,113h1v1h-1zM977,113h1v1h-1zM980,366h1v5h-1zM980,113h1v2h-1zM983,113h1v1h-1zM986,113h1v1h-1zM988,113h1v1h-1zM991,113h1v1h-1zM994,366h1v5h-1zM994,113h1v2h-1zM996,113h1v1h-1zM999,113h1v1h-1zM1002,113h1v1h-1zM1004,113h1v1h-1zM1007,361h1v10h-1zM1007,113h1v7h-1zM1010,113h1v1h-1zM1012,113h1v1h-1zM1015,113h1v1h-1zM1018,113h1v1h-1zM1020,366h1v5h-1zM1020,113h1v2h-1zM1023,113h1v1h-1zM1026,113h1v1h-1zM1028,113h1v1h-1zM1031,113h1v1h-1zM1034,366h1v5h-1zM1034,113h1v2h-1zM1037,113h1v1h-1zM1039,113h1v1h-1zM1042,113h1v1h-1zM1045,113h1v1h-1zM1047,366h1v5h-1zM1047,113h1v2h-1zM1050,113h1v1h-1zM1053,113h1v1h-1zM1055,113h1v1h-1zM1058,113h1v1h-1zM1061,361h1v10h-1zM1061,113h1v7h-1zM524,370h13v1h-13zM1047,370h14v1h-14zM524,364h7v1h-7zM1054,364h7v1h-7zM524,359h7v1h-7zM1054,359h7v1h-7zM524,353h7v1h-7zM1054,353h7v1h-7zM524,347h7v1h-7zM1054,347h7v1h-7zM524,341h13v1h-13zM1047,341h14v1h-14zM524,336h7v1h-7zM1054,336h7v1h-7zM524,330h7v1h-7zM1054,330h7v1h-7zM524,324h7v1h-7zM1054,324h7v1h-7zM524,318h7v1h-7zM1054,318h7v1h-7zM524,313h13v1h-13zM1047,313h14v1h-14zM524,307h7v1h-7zM1054,307h7v1h-7zM524,301h7v1h-7zM1054,301h7v1h-7zM524,295h7v1h-7zM1054,295h7v1h-7zM524,290h7v1h-7zM1054,290h7v1h-7zM524,284h13v1h-13zM1047,284h14v1h-14zM524,278h7v1h-7zM1054,278h7v1h-7zM524,273h7v1h-7zM1054,273h7v1h-7zM524,267h7v1h-7zM1054,267h7v1h-7zM524,261h7v1h-7zM1054,261h7v1h-7zM524,255h13v1h-13zM1047,255h14v1h-14zM524,250h7v1h-7zM1054,250h7v1h-7zM524,244h7v1h-7zM1054,244h7v1h-7zM524,238h7v1h-7zM1054,238h7v1h-7zM524,232h7v1h-7zM1054,232h7v1h-7zM524,227h13v1h-13zM1047,227h14v1h-14zM524,221h7v1h-7zM1054,221h7v1h-7zM524,215h7v1h-7zM1054,215h7v1h-7zM524,209h7v1h-7zM1054,209h7v1h-7zM524,204h7v1h-7zM1054,204h7v1h-7zM524,198h13v1h-13zM1047,198h14v1h-14zM524,192h7v1h-7zM1054,192h7v1h-7zM524,187h7v1h-7zM1054,187h7v1h-7zM524,181h7v1h-7zM1054,181h7v1h-7zM524,175h7v1h-7zM1054,175h7v1h-7zM524,169h13v1h-13zM1047,169h14v1h-14zM524,164h7v1h-7zM1054,164h7v1h-7zM524,158h7v1h-7zM1054,158h7v1h-7zM524,152h7v1h-7zM1054,152h7v1h-7zM524,146h7v1h-7zM1054,146h7v1h-7zM524,141h13v1h-13zM1047,141h14v1h-14zM524,135h7v1h-7zM1054,135h7v1h-7zM524,129h7v1h-7zM1054,129h7v1h-7zM524,123h7v1h-7zM1054,123h7v1h-7zM524,118h7v1h-7zM1054,118h7v1h-7zM524,112h13v1h-13zM1047,112h14v1h-14zM524,111h538v2h-538zM524,370h538v1h-538zM524,111h1v260h-1zM1061,111h1v260h-1z" fill="#000"/><path d="M578.04,370.36 L580.59,368.99 L583.14,367.61 L585.69,366.23 L588.24,364.83 L590.79,363.43 L593.34,362.03 L595.89,360.62 L598.44,359.20 L600.99,357.77 L603.54,356.34 L606.09,354.90 L608.64,353.45 L611.19,352.00 L613.74,350.54 L616.29,349.07 L618.84,347.60 L621.39,346.12 L623.94,344.63 L626.48,343.14 L629.03,341.64 L631.58,340.13 L634.13,338.62 L636.68,337.09 L639.23,335.57 L641.78,334.03 L644.33,332.49 L646.88,330.94 L649.43,329.39 L651.98,327.83 L654.53,326.26 L657.08,324.68 L659.63,323.10 L662.18,321.51 L664.73,319.92 L667.28,318.32 L669.83,316.71 L672.38,315.09 L674.93,313.47 L677.48,311.84 L680.03,310.21 L682.58,308.56 L685.13,306.91 L687.68,305.26 L690.23,303.59 L692.78,301.92 L695.32,300.23 L697.87,298.53 L700.42,296.81 L702.97,295.07 L705.52,293.31 L708.07,291.52 L710.62,289.71 L713.17,287.87 L715.72,286.01 L718.27,284.11 L720.82,282.18 L723.37,280.21 L725.92,278.20 L728.47,276.15 L731.02,274.06 L733.57,271.93 L736.12,269.74 L738.67,267.51 L741.22,265.23 L743.77,262.90 L746.32,260.51 L748.87,258.07 L751.42,255.59 L753.97,253.08 L756.52,250.54 L759.07,247.98 L761.61,245.40 L764.16,242.82 L766.71,240.24 L769.26,237.66 L771.81,235.09 L774.36,232.55 L776.91,230.03 L779.46,227.54 L782.01,225.10 L784.56,222.70 L787.11,220.35 L789.66,218.07 L792.21,215.85 L794.76,213.70 L797.31,211.64 L799.86,209.67 L802.41,207.80 L804.96,206.05 L807.51,204.42 L810.06,202.93 L812.61,201.59 L815.16,200.40 L817.71,199.38 L820.26,198.53 L822.81,198.50 L825.36,198.50 L827.90,198.50 L911.14,198.50 L912.66,198.50 L914.18,198.50 L915.70,198.50 L917.22,198.50 L918.73,198.50 L920.25,198.50 L921.77,198.50 L923.29,198.50 L924.81,198.50 L926.33,198.50 L927.85,198.50 L929.37,198.50 L930.88,198.57 L932.40,198.83 L933.92,199.14 L935.44,199.48 L936.96,199.87 L938.48,200.30 L940.00,200.78 L941.52,201.29 L943.03,201.84 L944.55,202.43 L946.07,203.05 L947.59,203.72 L949.11,204.43 L950.63,205.17 L952.15,205.95 L953.67,206.76 L955.18,207.61 L956.70,208.50 L958.22,209.41 L959.74,210.36 L961.26,211.33 L962.78,212.33 L964.30,213.35 L965.82,214.40 L967.34,215.46 L968.85,216.55 L970.37,217.65 L971.89,218.77 L973.41,219.90 L974.93,221.04 L976.45,222.20 L977.97,223.36 L979.49,224.53 L981.00,225.70 L982.52,226.87 L984.04,228.05 L985.56,229.23 L987.08,230.40 L988.60,231.57 L990.12,232.73 L991.64,233.89 L993.15,235.04 L994.67,236.18 L996.19,237.32 L997.71,238.45 L999.23,239.57 L1000.75,240.68 L1002.27,241.79 L1003.79,242.89 L1005.30,243.98 L1006.82,245.06 L1008.34,246.13 L1009.86,247.19 L1011.38,248.25 L1012.90,249.29 L1014.42,250.33 L1015.94,251.35 L1017.46,252.37 L1018.97,253.37 L1020.49,254.36 L1022.01,255.35 L1023.53,256.32 L1025.05,257.28 L1026.57,258.23 L1028.09,259.17 L1029.61,260.09 L1031.12,261.00 L1032.64,261.91 L1034.16,262.79 L1035.68,263.67 L1037.20,264.53 L1038.72,265.38 L1040.24,266.22 L1041.76,267.04 L1043.27,267.85 L1044.79,268.64 L1046.31,269.42 L1047.83,270.19 L1049.35,270.94 L1050.87,271.67 L1052.39,272.39 L1053.91,273.10 L1055.42,273.78 L1056.94,274.46 L1058.46,275.11 L1059.98,275.75 L1061.50,276.38" stroke="#f00" stroke-width="1" fill="none"/><path d="M830.5,186 V211 M818,198.5 H843" stroke="#f00" stroke-width="1"/></svg><svg style="position:absolute;left:0;top:0" width="1104" height="895" viewBox="0 0 1104 895"><g font-family='"Liberation Sans", sans-serif' font-weight="bold" font-size="12" letter-spacing="0.8" fill="#000"><text x="524.9" y="383.3" text-anchor="middle">1</text><text x="577.9" y="383.3" text-anchor="middle">1.2</text><text x="631.9" y="383.3" text-anchor="middle">1.4</text><text x="685.9" y="383.3" text-anchor="middle">1.6</text><text x="739.9" y="383.3" text-anchor="middle">1.8</text><text x="792.9" y="383.3" text-anchor="middle">2</text><text x="846.9" y="383.3" text-anchor="middle">2.2</text><text x="900.9" y="383.3" text-anchor="middle">2.4</text><text x="953.9" y="383.3" text-anchor="middle">2.6</text><text x="1007.9" y="383.3" text-anchor="middle">2.8</text><text x="1061.9" y="383.3" text-anchor="middle">3</text><text x="521.8" y="374.9" text-anchor="end">0</text><text x="521.8" y="345.9" text-anchor="end">10</text><text x="521.8" y="317.9" text-anchor="end">20</text><text x="521.8" y="288.9" text-anchor="end">30</text><text x="521.8" y="259.9" text-anchor="end">40</text><text x="521.8" y="231.9" text-anchor="end">50</text><text x="521.8" y="202.9" text-anchor="end">60</text><text x="521.8" y="173.9" text-anchor="end">70</text><text x="521.8" y="145.9" text-anchor="end">80</text><text x="521.8" y="116.9" text-anchor="end">90</text></g><text x="791.5" y="408" text-anchor="middle" font-family='"Liberation Sans", sans-serif' font-weight="bold" font-size="14">Frequency (Hz)</text><text transform="translate(484.3,239) rotate(-90)" text-anchor="middle" font-family='"Liberation Sans", sans-serif' font-weight="bold" font-size="15">Magnitude (dB)</text><text x="473" y="430.8" font-family='"Liberation Sans", sans-serif' font-weight="bold" font-size="13">T0=15/07/2024 15:32:39</text><text x="1080.6" y="430.8" text-anchor="end" font-family='"Liberation Sans", sans-serif' font-weight="bold" font-size="13">K1VISETMXP.txt</text><path d="M1049,124h3v16h-177v-3h174z" fill="#000" shape-rendering="crispEdges"/><rect x="869.5" y="118.5" width="179" height="18" fill="#fff" stroke="#000" stroke-width="1" shape-rendering="crispEdges"/><path d="M875,127.5 H907" stroke="#f00" stroke-width="1" shape-rendering="crispEdges"/><text x="914" y="131" font-family='"Liberation Sans", sans-serif' font-weight="bold" font-size="11">current_out / current_in</text><path d="M465,79h2v15h152v-15h1v17h-155z" fill="#000" shape-rendering="crispEdges"/><rect x="467.5" y="76.5" width="151" height="17" fill="#f2f2f2" stroke="#000" stroke-width="1" shape-rendering="crispEdges"/><text x="542.5" y="90.6" text-anchor="middle" font-family='"Liberation Sans", sans-serif' font-weight="bold" font-size="14">Transfer function</text></svg>
<div style="left:460px;top:443px;width:634px;height:362px;background:#fff;"></div>
<div style="left:460px;top:804px;width:634px;height:1px;background:#ffffff;"></div>
<div style="left:1093px;top:443px;width:1px;height:362px;background:#ffffff;"></div>
<div style="left:460px;top:443px;width:634px;height:1px;background:#8a8a8a;"></div>
<div style="left:460px;top:443px;width:1px;height:362px;background:#8a8a8a;"></div>
<svg style="position:absolute;left:0;top:0" width="1104" height="895" viewBox="0 0 1104 895" shape-rendering="crispEdges"><path d="M577,480h1v1h-1zM577,483h1v1h-1zM577,486h1v1h-1zM577,489h1v1h-1zM577,492h1v1h-1zM577,495h1v1h-1zM577,498h1v1h-1zM577,501h1v1h-1zM577,504h1v1h-1zM577,507h1v1h-1zM577,510h1v1h-1zM577,513h1v1h-1zM577,516h1v1h-1zM577,519h1v1h-1zM577,522h1v1h-1zM577,525h1v1h-1zM577,528h1v1h-1zM577,531h1v1h-1zM577,534h1v1h-1zM577,537h1v1h-1zM577,540h1v1h-1zM577,543h1v1h-1zM577,546h1v1h-1zM577,549h1v1h-1zM577,552h1v1h-1zM577,555h1v1h-1zM577,558h1v1h-1zM577,561h1v1h-1zM577,564h1v1h-1zM577,567h1v1h-1zM577,570h1v1h-1zM577,573h1v1h-1zM577,576h1v1h-1zM577,579h1v1h-1zM577,582h1v1h-1zM577,585h1v1h-1zM577,588h1v1h-1zM577,591h1v1h-1zM577,594h1v1h-1zM577,597h1v1h-1zM577,600h1v1h-1zM577,603h1v1h-1zM577,606h1v1h-1zM577,609h1v1h-1zM577,612h1v1h-1zM577,615h1v1h-1zM577,618h1v1h-1zM577,621h1v1h-1zM577,624h1v1h-1zM577,627h1v1h-1zM577,630h1v1h-1zM577,633h1v1h-1zM577,636h1v1h-1zM577,639h1v1h-1zM577,642h1v1h-1zM577,645h1v1h-1zM577,648h1v1h-1zM577,651h1v1h-1zM577,654h1v1h-1zM577,657h1v1h-1zM577,660h1v1h-1zM577,663h1v1h-1zM577,666h1v1h-1zM577,669h1v1h-1zM577,672h1v1h-1zM577,675h1v1h-1zM577,678h1v1h-1zM577,681h1v1h-1zM577,684h1v1h-1zM577,687h1v1h-1zM577,690h1v1h-1zM577,693h1v1h-1zM577,696h1v1h-1zM577,699h1v1h-1zM577,702h1v1h-1zM577,705h1v1h-1zM577,708h1v1h-1zM577,711h1v1h-1zM577,714h1v1h-1zM577,717h1v1h-1zM577,720h1v1h-1zM577,723h1v1h-1zM577,726h1v1h-1zM577,729h1v1h-1zM577,732h1v1h-1zM577,735h1v1h-1zM577,738h1v1h-1zM631,480h1v1h-1zM631,483h1v1h-1zM631,486h1v1h-1zM631,489h1v1h-1zM631,492h1v1h-1zM631,495h1v1h-1zM631,498h1v1h-1zM631,501h1v1h-1zM631,504h1v1h-1zM631,507h1v1h-1zM631,510h1v1h-1zM631,513h1v1h-1zM631,516h1v1h-1zM631,519h1v1h-1zM631,522h1v1h-1zM631,525h1v1h-1zM631,528h1v1h-1zM631,531h1v1h-1zM631,534h1v1h-1zM631,537h1v1h-1zM631,540h1v1h-1zM631,543h1v1h-1zM631,546h1v1h-1zM631,549h1v1h-1zM631,552h1v1h-1zM631,555h1v1h-1zM631,558h1v1h-1zM631,561h1v1h-1zM631,564h1v1h-1zM631,567h1v1h-1zM631,570h1v1h-1zM631,573h1v1h-1zM631,576h1v1h-1zM631,579h1v1h-1zM631,582h1v1h-1zM631,585h1v1h-1zM631,588h1v1h-1zM631,591h1v1h-1zM631,594h1v1h-1zM631,597h1v1h-1zM631,600h1v1h-1zM631,603h1v1h-1zM631,606h1v1h-1zM631,609h1v1h-1zM631,612h1v1h-1zM631,615h1v1h-1zM631,618h1v1h-1zM631,621h1v1h-1zM631,624h1v1h-1zM631,627h1v1h-1zM631,630h1v1h-1zM631,633h1v1h-1zM631,636h1v1h-1zM631,639h1v1h-1zM631,642h1v1h-1zM631,645h1v1h-1zM631,648h1v1h-1zM631,651h1v1h-1zM631,654h1v1h-1zM631,657h1v1h-1zM631,660h1v1h-1zM631,663h1v1h-1zM631,666h1v1h-1zM631,669h1v1h-1zM631,672h1v1h-1zM631,675h1v1h-1zM631,678h1v1h-1zM631,681h1v1h-1zM631,684h1v1h-1zM631,687h1v1h-1zM631,690h1v1h-1zM631,693h1v1h-1zM631,696h1v1h-1zM631,699h1v1h-1zM631,702h1v1h-1zM631,705h1v1h-1zM631,708h1v1h-1zM631,711h1v1h-1zM631,714h1v1h-1zM631,717h1v1h-1zM631,720h1v1h-1zM631,723h1v1h-1zM631,726h1v1h-1zM631,729h1v1h-1zM631,732h1v1h-1zM631,735h1v1h-1zM631,738h1v1h-1zM685,480h1v1h-1zM685,483h1v1h-1zM685,486h1v1h-1zM685,489h1v1h-1zM685,492h1v1h-1zM685,495h1v1h-1zM685,498h1v1h-1zM685,501h1v1h-1zM685,504h1v1h-1zM685,507h1v1h-1zM685,510h1v1h-1zM685,513h1v1h-1zM685,516h1v1h-1zM685,519h1v1h-1zM685,522h1v1h-1zM685,525h1v1h-1zM685,528h1v1h-1zM685,531h1v1h-1zM685,534h1v1h-1zM685,537h1v1h-1zM685,540h1v1h-1zM685,543h1v1h-1zM685,546h1v1h-1zM685,549h1v1h-1zM685,552h1v1h-1zM685,555h1v1h-1zM685,558h1v1h-1zM685,561h1v1h-1zM685,564h1v1h-1zM685,567h1v1h-1zM685,570h1v1h-1zM685,573h1v1h-1zM685,576h1v1h-1zM685,579h1v1h-1zM685,582h1v1h-1zM685,585h1v1h-1zM685,588h1v1h-1zM685,591h1v1h-1zM685,594h1v1h-1zM685,597h1v1h-1zM685,600h1v1h-1zM685,603h1v1h-1zM685,606h1v1h-1zM685,609h1v1h-1zM685,612h1v1h-1zM685,615h1v1h-1zM685,618h1v1h-1zM685,621h1v1h-1zM685,624h1v1h-1zM685,627h1v1h-1zM685,630h1v1h-1zM685,633h1v1h-1zM685,636h1v1h-1zM685,639h1v1h-1zM685,642h1v1h-1zM685,645h1v1h-1zM685,648h1v1h-1zM685,651h1v1h-1zM685,654h1v1h-1zM685,657h1v1h-1zM685,660h1v1h-1zM685,663h1v1h-1zM685,666h1v1h-1zM685,669h1v1h-1zM685,672h1v1h-1zM685,675h1v1h-1zM685,678h1v1h-1zM685,681h1v1h-1zM685,684h1v1h-1zM685,687h1v1h-1zM685,690h1v1h-1zM685,693h1v1h-1zM685,696h1v1h-1zM685,699h1v1h-1zM685,702h1v1h-1zM685,705h1v1h-1zM685,708h1v1h-1zM685,711h1v1h-1zM685,714h1v1h-1zM685,717h1v1h-1zM685,720h1v1h-1zM685,723h1v1h-1zM685,726h1v1h-1zM685,729h1v1h-1zM685,732h1v1h-1zM685,735h1v1h-1zM685,738h1v1h-1zM739,480h1v1h-1zM739,483h1v1h-1zM739,486h1v1h-1zM739,489h1v1h-1zM739,492h1v1h-1zM739,495h1v1h-1zM739,498h1v1h-1zM739,501h1v1h-1zM739,504h1v1h-1zM739,507h1v1h-1zM739,510h1v1h-1zM739,513h1v1h-1zM739,516h1v1h-1zM739,519h1v1h-1zM739,522h1v1h-1zM739,525h1v1h-1zM739,528h1v1h-1zM739,531h1v1h-1zM739,534h1v1h-1zM739,537h1v1h-1zM739,540h1v1h-1zM739,543h1v1h-1zM739,546h1v1h-1zM739,549h1v1h-1zM739,552h1v1h-1zM739,555h1v1h-1zM739,558h1v1h-1zM739,561h1v1h-1zM739,564h1v1h-1zM739,567h1v1h-1zM739,570h1v1h-1zM739,573h1v1h-1zM739,576h1v1h-1zM739,579h1v1h-1zM739,582h1v1h-1zM739,585h1v1h-1zM739,588h1v1h-1zM739,591h1v1h-1zM739,594h1v1h-1zM739,597h1v1h-1zM739,600h1v1h-1zM739,603h1v1h-1zM739,606h1v1h-1zM739,609h1v1h-1zM739,612h1v1h-1zM739,615h1v1h-1zM739,618h1v1h-1zM739,621h1v1h-1zM739,624h1v1h-1zM739,627h1v1h-1zM739,630h1v1h-1zM739,633h1v1h-1zM739,636h1v1h-1zM739,639h1v1h-1zM739,642h1v1h-1zM739,645h1v1h-1zM739,648h1v1h-1zM739,651h1v1h-1zM739,654h1v1h-1zM739,657h1v1h-1zM739,660h1v1h-1zM739,663h1v1h-1zM739,666h1v1h-1zM739,669h1v1h-1zM739,672h1v1h-1zM739,675h1v1h-1zM739,678h1v1h-1zM739,681h1v1h-1zM739,684h1v1h-1zM739,687h1v1h-1zM739,690h1v1h-1zM739,693h1v1h-1zM739,696h1v1h-1zM739,699h1v1h-1zM739,702h1v1h-1zM739,705h1v1h-1zM739,708h1v1h-1zM739,711h1v1h-1zM739,714h1v1h-1zM739,717h1v1h-1zM739,720h1v1h-1zM739,723h1v1h-1zM739,726h1v1h-1zM739,729h1v1h-1zM739,732h1v1h-1zM739,735h1v1h-1zM739,738h1v1h-1zM792,480h1v1h-1zM792,483h1v1h-1zM792,486h1v1h-1zM792,489h1v1h-1zM792,492h1v1h-1zM792,495h1v1h-1zM792,498h1v1h-1zM792,501h1v1h-1zM792,504h1v1h-1zM792,507h1v1h-1zM792,510h1v1h-1zM792,513h1v1h-1zM792,516h1v1h-1zM792,519h1v1h-1zM792,522h1v1h-1zM792,525h1v1h-1zM792,528h1v1h-1zM792,531h1v1h-1zM792,534h1v1h-1zM792,537h1v1h-1zM792,540h1v1h-1zM792,543h1v1h-1zM792,546h1v1h-1zM792,549h1v1h-1zM792,552h1v1h-1zM792,555h1v1h-1zM792,558h1v1h-1zM792,561h1v1h-1zM792,564h1v1h-1zM792,567h1v1h-1zM792,570h1v1h-1zM792,573h1v1h-1zM792,576h1v1h-1zM792,579h1v1h-1zM792,582h1v1h-1zM792,585h1v1h-1zM792,588h1v1h-1zM792,591h1v1h-1zM792,594h1v1h-1zM792,597h1v1h-1zM792,600h1v1h-1zM792,603h1v1h-1zM792,606h1v1h-1zM792,609h1v1h-1zM792,612h1v1h-1zM792,615h1v1h-1zM792,618h1v1h-1zM792,621h1v1h-1zM792,624h1v1h-1zM792,627h1v1h-1zM792,630h1v1h-1zM792,633h1v1h-1zM792,636h1v1h-1zM792,639h1v1h-1zM792,642h1v1h-1zM792,645h1v1h-1zM792,648h1v1h-1zM792,651h1v1h-1zM792,654h1v1h-1zM792,657h1v1h-1zM792,660h1v1h-1zM792,663h1v1h-1zM792,666h1v1h-1zM792,669h1v1h-1zM792,672h1v1h-1zM792,675h1v1h-1zM792,678h1v1h-1zM792,681h1v1h-1zM792,684h1v1h-1zM792,687h1v1h-1zM792,690h1v1h-1zM792,693h1v1h-1zM792,696h1v1h-1zM792,699h1v1h-1zM792,702h1v1h-1zM792,705h1v1h-1zM792,708h1v1h-1zM792,711h1v1h-1zM792,714h1v1h-1zM792,717h1v1h-1zM792,720h1v1h-1zM792,723h1v1h-1zM792,726h1v1h-1zM792,729h1v1h-1zM792,732h1v1h-1zM792,735h1v1h-1zM792,738h1v1h-1zM846,480h1v1h-1zM846,483h1v1h-1zM846,486h1v1h-1zM846,489h1v1h-1zM846,492h1v1h-1zM846,495h1v1h-1zM846,498h1v1h-1zM846,501h1v1h-1zM846,504h1v1h-1zM846,507h1v1h-1zM846,510h1v1h-1zM846,513h1v1h-1zM846,516h1v1h-1zM846,519h1v1h-1zM846,522h1v1h-1zM846,525h1v1h-1zM846,528h1v1h-1zM846,531h1v1h-1zM846,534h1v1h-1zM846,537h1v1h-1zM846,540h1v1h-1zM846,543h1v1h-1zM846,546h1v1h-1zM846,549h1v1h-1zM846,552h1v1h-1zM846,555h1v1h-1zM846,558h1v1h-1zM846,561h1v1h-1zM846,564h1v1h-1zM846,567h1v1h-1zM846,570h1v1h-1zM846,573h1v1h-1zM846,576h1v1h-1zM846,579h1v1h-1zM846,582h1v1h-1zM846,585h1v1h-1zM846,588h1v1h-1zM846,591h1v1h-1zM846,594h1v1h-1zM846,597h1v1h-1zM846,600h1v1h-1zM846,603h1v1h-1zM846,606h1v1h-1zM846,609h1v1h-1zM846,612h1v1h-1zM846,615h1v1h-1zM846,618h1v1h-1zM846,621h1v1h-1zM846,624h1v1h-1zM846,627h1v1h-1zM846,630h1v1h-1zM846,633h1v1h-1zM846,636h1v1h-1zM846,639h1v1h-1zM846,642h1v1h-1zM846,645h1v1h-1zM846,648h1v1h-1zM846,651h1v1h-1zM846,654h1v1h-1zM846,657h1v1h-1zM846,660h1v1h-1zM846,663h1v1h-1zM846,666h1v1h-1zM846,669h1v1h-1zM846,672h1v1h-1zM846,675h1v1h-1zM846,678h1v1h-1zM846,681h1v1h-1zM846,684h1v1h-1zM846,687h1v1h-1zM846,690h1v1h-1zM846,693h1v1h-1zM846,696h1v1h-1zM846,699h1v1h-1zM846,702h1v1h-1zM846,705h1v1h-1zM846,708h1v1h-1zM846,711h1v1h-1zM846,714h1v1h-1zM846,717h1v1h-1zM846,720h1v1h-1zM846,723h1v1h-1zM846,726h1v1h-1zM846,729h1v1h-1zM846,732h1v1h-1zM846,735h1v1h-1zM846,738h1v1h-1zM900,480h1v1h-1zM900,483h1v1h-1zM900,486h1v1h-1zM900,489h1v1h-1zM900,492h1v1h-1zM900,495h1v1h-1zM900,498h1v1h-1zM900,501h1v1h-1zM900,504h1v1h-1zM900,507h1v1h-1zM900,510h1v1h-1zM900,513h1v1h-1zM900,516h1v1h-1zM900,519h1v1h-1zM900,522h1v1h-1zM900,525h1v1h-1zM900,528h1v1h-1zM900,531h1v1h-1zM900,534h1v1h-1zM900,537h1v1h-1zM900,540h1v1h-1zM900,543h1v1h-1zM900,546h1v1h-1zM900,549h1v1h-1zM900,552h1v1h-1zM900,555h1v1h-1zM900,558h1v1h-1zM900,561h1v1h-1zM900,564h1v1h-1zM900,567h1v1h-1zM900,570h1v1h-1zM900,573h1v1h-1zM900,576h1v1h-1zM900,579h1v1h-1zM900,582h1v1h-1zM900,585h1v1h-1zM900,588h1v1h-1zM900,591h1v1h-1zM900,594h1v1h-1zM900,597h1v1h-1zM900,600h1v1h-1zM900,603h1v1h-1zM900,606h1v1h-1zM900,609h1v1h-1zM900,612h1v1h-1zM900,615h1v1h-1zM900,618h1v1h-1zM900,621h1v1h-1zM900,624h1v1h-1zM900,627h1v1h-1zM900,630h1v1h-1zM900,633h1v1h-1zM900,636h1v1h-1zM900,639h1v1h-1zM900,642h1v1h-1zM900,645h1v1h-1zM900,648h1v1h-1zM900,651h1v1h-1zM900,654h1v1h-1zM900,657h1v1h-1zM900,660h1v1h-1zM900,663h1v1h-1zM900,666h1v1h-1zM900,669h1v1h-1zM900,672h1v1h-1zM900,675h1v1h-1zM900,678h1v1h-1zM900,681h1v1h-1zM900,684h1v1h-1zM900,687h1v1h-1zM900,690h1v1h-1zM900,693h1v1h-1zM900,696h1v1h-1zM900,699h1v1h-1zM900,702h1v1h-1zM900,705h1v1h-1zM900,708h1v1h-1zM900,711h1v1h-1zM900,714h1v1h-1zM900,717h1v1h-1zM900,720h1v1h-1zM900,723h1v1h-1zM900,726h1v1h-1zM900,729h1v1h-1zM900,732h1v1h-1zM900,735h1v1h-1zM900,738h1v1h-1zM953,480h1v1h-1zM953,483h1v1h-1zM953,486h1v1h-1zM953,489h1v1h-1zM953,492h1v1h-1zM953,495h1v1h-1zM953,498h1v1h-1zM953,501h1v1h-1zM953,504h1v1h-1zM953,507h1v1h-1zM953,510h1v1h-1zM953,513h1v1h-1zM953,516h1v1h-1zM953,519h1v1h-1zM953,522h1v1h-1zM953,525h1v1h-1zM953,528h1v1h-1zM953,531h1v1h-1zM953,534h1v1h-1zM953,537h1v1h-1zM953,540h1v1h-1zM953,543h1v1h-1zM953,546h1v1h-1zM953,549h1v1h-1zM953,552h1v1h-1zM953,555h1v1h-1zM953,558h1v1h-1zM953,561h1v1h-1zM953,564h1v1h-1zM953,567h1v1h-1zM953,570h1v1h-1zM953,573h1v1h-1zM953,576h1v1h-1zM953,579h1v1h-1zM953,582h1v1h-1zM953,585h1v1h-1zM953,588h1v1h-1zM953,591h1v1h-1zM953,594h1v1h-1zM953,597h1v1h-1zM953,600h1v1h-1zM953,603h1v1h-1zM953,606h1v1h-1zM953,609h1v1h-1zM953,612h1v1h-1zM953,615h1v1h-1zM953,618h1v1h-1zM953,621h1v1h-1zM953,624h1v1h-1zM953,627h1v1h-1zM953,630h1v1h-1zM953,633h1v1h-1zM953,636h1v1h-1zM953,639h1v1h-1zM953,642h1v1h-1zM953,645h1v1h-1zM953,648h1v1h-1zM953,651h1v1h-1zM953,654h1v1h-1zM953,657h1v1h-1zM953,660h1v1h-1zM953,663h1v1h-1zM953,666h1v1h-1zM953,669h1v1h-1zM953,672h1v1h-1zM953,675h1v1h-1zM953,678h1v1h-1zM953,681h1v1h-1zM953,684h1v1h-1zM953,687h1v1h-1zM953,690h1v1h-1zM953,693h1v1h-1zM953,696h1v1h-1zM953,699h1v1h-1zM953,702h1v1h-1zM953,705h1v1h-1zM953,708h1v1h-1zM953,711h1v1h-1zM953,714h1v1h-1zM953,717h1v1h-1zM953,720h1v1h-1zM953,723h1v1h-1zM953,726h1v1h-1zM953,729h1v1h-1zM953,732h1v1h-1zM953,735h1v1h-1zM953,738h1v1h-1zM1007,480h1v1h-1zM1007,483h1v1h-1zM1007,486h1v1h-1zM1007,489h1v1h-1zM1007,492h1v1h-1zM1007,495h1v1h-1zM1007,498h1v1h-1zM1007,501h1v1h-1zM1007,504h1v1h-1zM1007,507h1v1h-1zM1007,510h1v1h-1zM1007,513h1v1h-1zM1007,516h1v1h-1zM1007,519h1v1h-1zM1007,522h1v1h-1zM1007,525h1v1h-1zM1007,528h1v1h-1zM1007,531h1v1h-1zM1007,534h1v1h-1zM1007,537h1v1h-1zM1007,540h1v1h-1zM1007,543h1v1h-1zM1007,546h1v1h-1zM1007,549h1v1h-1zM1007,552h1v1h-1zM1007,555h1v1h-1zM1007,558h1v1h-1zM1007,561h1v1h-1zM1007,564h1v1h-1zM1007,567h1v1h-1zM1007,570h1v1h-1zM1007,573h1v1h-1zM1007,576h1v1h-1zM1007,579h1v1h-1zM1007,582h1v1h-1zM1007,585h1v1h-1zM1007,588h1v1h-1zM1007,591h1v1h-1zM1007,594h1v1h-1zM1007,597h1v1h-1zM1007,600h1v1h-1zM1007,603h1v1h-1zM1007,606h1v1h-1zM1007,609h1v1h-1zM1007,612h1v1h-1zM1007,615h1v1h-1zM1007,618h1v1h-1zM1007,621h1v1h-1zM1007,624h1v1h-1zM1007,627h1v1h-1zM1007,630h1v1h-1zM1007,633h1v1h-1zM1007,636h1v1h-1zM1007,639h1v1h-1zM1007,642h1v1h-1zM1007,645h1v1h-1zM1007,648h1v1h-1zM1007,651h1v1h-1zM1007,654h1v1h-1zM1007,657h1v1h-1zM1007,660h1v1h-1zM1007,663h1v1h-1zM1007,666h1v1h-1zM1007,669h1v1h-1zM1007,672h1v1h-1zM1007,675h1v1h-1zM1007,678h1v1h-1zM1007,681h1v1h-1zM1007,684h1v1h-1zM1007,687h1v1h-1zM1007,690h1v1h-1zM1007,693h1v1h-1zM1007,696h1v1h-1zM1007,699h1v1h-1zM1007,702h1v1h-1zM1007,705h1v1h-1zM1007,708h1v1h-1zM1007,711h1v1h-1zM1007,714h1v1h-1zM1007,717h1v1h-1zM1007,720h1v1h-1zM1007,723h1v1h-1zM1007,726h1v1h-1zM1007,729h1v1h-1zM1007,732h1v1h-1zM1007,735h1v1h-1zM1007,738h1v1h-1zM526,717h1v1h-1zM529,717h1v1h-1zM532,717h1v1h-1zM535,717h1v1h-1zM538,717h1v1h-1zM541,717h1v1h-1zM544,717h1v1h-1zM547,717h1v1h-1zM550,717h1v1h-1zM553,717h1v1h-1zM556,717h1v1h-1zM559,717h1v1h-1zM562,717h1v1h-1zM565,717h1v1h-1zM568,717h1v1h-1zM571,717h1v1h-1zM574,717h1v1h-1zM577,717h1v1h-1zM580,717h1v1h-1zM583,717h1v1h-1zM586,717h1v1h-1zM589,717h1v1h-1zM592,717h1v1h-1zM595,717h1v1h-1zM598,717h1v1h-1zM601,717h1v1h-1zM604,717h1v1h-1zM607,717h1v1h-1zM610,717h1v1h-1zM613,717h1v1h-1zM616,717h1v1h-1zM619,717h1v1h-1zM622,717h1v1h-1zM625,717h1v1h-1zM628,717h1v1h-1zM631,717h1v1h-1zM634,717h1v1h-1zM637,717h1v1h-1zM640,717h1v1h-1zM643,717h1v1h-1zM646,717h1v1h-1zM649,717h1v1h-1zM652,717h1v1h-1zM655,717h1v1h-1zM658,717h1v1h-1zM661,717h1v1h-1zM664,717h1v1h-1zM667,717h1v1h-1zM670,717h1v1h-1zM673,717h1v1h-1zM676,717h1v1h-1zM679,717h1v1h-1zM682,717h1v1h-1zM685,717h1v1h-1zM688,717h1v1h-1zM691,717h1v1h-1zM694,717h1v1h-1zM697,717h1v1h-1zM700,717h1v1h-1zM703,717h1v1h-1zM706,717h1v1h-1zM709,717h1v1h-1zM712,717h1v1h-1zM715,717h1v1h-1zM718,717h1v1h-1zM721,717h1v1h-1zM724,717h1v1h-1zM727,717h1v1h-1zM730,717h1v1h-1zM733,717h1v1h-1zM736,717h1v1h-1zM739,717h1v1h-1zM742,717h1v1h-1zM745,717h1v1h-1zM748,717h1v1h-1zM751,717h1v1h-1zM754,717h1v1h-1zM757,717h1v1h-1zM760,717h1v1h-1zM763,717h1v1h-1zM766,717h1v1h-1zM769,717h1v1h-1zM772,717h1v1h-1zM775,717h1v1h-1zM778,717h1v1h-1zM781,717h1v1h-1zM784,717h1v1h-1zM787,717h1v1h-1zM790,717h1v1h-1zM793,717h1v1h-1zM796,717h1v1h-1zM799,717h1v1h-1zM802,717h1v1h-1zM805,717h1v1h-1zM808,717h1v1h-1zM811,717h1v1h-1zM814,717h1v1h-1zM817,717h1v1h-1zM820,717h1v1h-1zM823,717h1v1h-1zM826,717h1v1h-1zM829,717h1v1h-1zM832,717h1v1h-1zM835,717h1v1h-1zM838,717h1v1h-1zM841,717h1v1h-1zM844,717h1v1h-1zM847,717h1v1h-1zM850,717h1v1h-1zM853,717h1v1h-1zM856,717h1v1h-1zM859,717h1v1h-1zM862,717h1v1h-1zM865,717h1v1h-1zM868,717h1v1h-1zM871,717h1v1h-1zM874,717h1v1h-1zM877,717h1v1h-1zM880,717h1v1h-1zM883,717h1v1h-1zM886,717h1v1h-1zM889,717h1v1h-1zM892,717h1v1h-1zM895,717h1v1h-1zM898,717h1v1h-1zM901,717h1v1h-1zM904,717h1v1h-1zM907,717h1v1h-1zM910,717h1v1h-1zM913,717h1v1h-1zM916,717h1v1h-1zM919,717h1v1h-1zM922,717h1v1h-1zM925,717h1v1h-1zM928,717h1v1h-1zM931,717h1v1h-1zM934,717h1v1h-1zM937,717h1v1h-1zM940,717h1v1h-1zM943,717h1v1h-1zM946,717h1v1h-1zM949,717h1v1h-1zM952,717h1v1h-1zM955,717h1v1h-1zM958,717h1v1h-1zM961,717h1v1h-1zM964,717h1v1h-1zM967,717h1v1h-1zM970,717h1v1h-1zM973,717h1v1h-1zM976,717h1v1h-1zM979,717h1v1h-1zM982,717h1v1h-1zM985,717h1v1h-1zM988,717h1v1h-1zM991,717h1v1h-1zM994,717h1v1h-1zM997,717h1v1h-1zM1000,717h1v1h-1zM1003,717h1v1h-1zM1006,717h1v1h-1zM1009,717h1v1h-1zM1012,717h1v1h-1zM1015,717h1v1h-1zM1018,717h1v1h-1zM1021,717h1v1h-1zM1024,717h1v1h-1zM1027,717h1v1h-1zM1030,717h1v1h-1zM1033,717h1v1h-1zM1036,717h1v1h-1zM1039,717h1v1h-1zM1042,717h1v1h-1zM1045,717h1v1h-1zM1048,717h1v1h-1zM1051,717h1v1h-1zM1054,717h1v1h-1zM1057,717h1v1h-1zM1060,717h1v1h-1zM526,680h1v1h-1zM529,680h1v1h-1zM532,680h1v1h-1zM535,680h1v1h-1zM538,680h1v1h-1zM541,680h1v1h-1zM544,680h1v1h-1zM547,680h1v1h-1zM550,680h1v1h-1zM553,680h1v1h-1zM556,680h1v1h-1zM559,680h1v1h-1zM562,680h1v1h-1zM565,680h1v1h-1zM568,680h1v1h-1zM571,680h1v1h-1zM574,680h1v1h-1zM577,680h1v1h-1zM580,680h1v1h-1zM583,680h1v1h-1zM586,680h1v1h-1zM589,680h1v1h-1zM592,680h1v1h-1zM595,680h1v1h-1zM598,680h1v1h-1zM601,680h1v1h-1zM604,680h1v1h-1zM607,680h1v1h-1zM610,680h1v1h-1zM613,680h1v1h-1zM616,680h1v1h-1zM619,680h1v1h-1zM622,680h1v1h-1zM625,680h1v1h-1zM628,680h1v1h-1zM631,680h1v1h-1zM634,680h1v1h-1zM637,680h1v1h-1zM640,680h1v1h-1zM643,680h1v1h-1zM646,680h1v1h-1zM649,680h1v1h-1zM652,680h1v1h-1zM655,680h1v1h-1zM658,680h1v1h-1zM661,680h1v1h-1zM664,680h1v1h-1zM667,680h1v1h-1zM670,680h1v1h-1zM673,680h1v1h-1zM676,680h1v1h-1zM679,680h1v1h-1zM682,680h1v1h-1zM685,680h1v1h-1zM688,680h1v1h-1zM691,680h1v1h-1zM694,680h1v1h-1zM697,680h1v1h-1zM700,680h1v1h-1zM703,680h1v1h-1zM706,680h1v1h-1zM709,680h1v1h-1zM712,680h1v1h-1zM715,680h1v1h-1zM718,680h1v1h-1zM721,680h1v1h-1zM724,680h1v1h-1zM727,680h1v1h-1zM730,680h1v1h-1zM733,680h1v1h-1zM736,680h1v1h-1zM739,680h1v1h-1zM742,680h1v1h-1zM745,680h1v1h-1zM748,680h1v1h-1zM751,680h1v1h-1zM754,680h1v1h-1zM757,680h1v1h-1zM760,680h1v1h-1zM763,680h1v1h-1zM766,680h1v1h-1zM769,680h1v1h-1zM772,680h1v1h-1zM775,680h1v1h-1zM778,680h1v1h-1zM781,680h1v1h-1zM784,680h1v1h-1zM787,680h1v1h-1zM790,680h1v1h-1zM793,680h1v1h-1zM796,680h1v1h-1zM799,680h1v1h-1zM802,680h1v1h-1zM805,680h1v1h-1zM808,680h1v1h-1zM811,680h1v1h-1zM814,680h1v1h-1zM817,680h1v1h-1zM820,680h1v1h-1zM823,680h1v1h-1zM826,680h1v1h-1zM829,680h1v1h-1zM832,680h1v1h-1zM835,680h1v1h-1zM838,680h1v1h-1zM841,680h1v1h-1zM844,680h1v1h-1zM847,680h1v1h-1zM850,680h1v1h-1zM853,680h1v1h-1zM856,680h1v1h-1zM859,680h1v1h-1zM862,680h1v1h-1zM865,680h1v1h-1zM868,680h1v1h-1zM871,680h1v1h-1zM874,680h1v1h-1zM877,680h1v1h-1zM880,680h1v1h-1zM883,680h1v1h-1zM886,680h1v1h-1zM889,680h1v1h-1zM892,680h1v1h-1zM895,680h1v1h-1zM898,680h1v1h-1zM901,680h1v1h-1zM904,680h1v1h-1zM907,680h1v1h-1zM910,680h1v1h-1zM913,680h1v1h-1zM916,680h1v1h-1zM919,680h1v1h-1zM922,680h1v1h-1zM925,680h1v1h-1zM928,680h1v1h-1zM931,680h1v1h-1zM934,680h1v1h-1zM937,680h1v1h-1zM940,680h1v1h-1zM943,680h1v1h-1zM946,680h1v1h-1zM949,680h1v1h-1zM952,680h1v1h-1zM955,680h1v1h-1zM958,680h1v1h-1zM961,680h1v1h-1zM964,680h1v1h-1zM967,680h1v1h-1zM970,680h1v1h-1zM973,680h1v1h-1zM976,680h1v1h-1zM979,680h1v1h-1zM982,680h1v1h-1zM985,680h1v1h-1zM988,680h1v1h-1zM991,680h1v1h-1zM994,680h1v1h-1zM997,680h1v1h-1zM1000,680h1v1h-1zM1003,680h1v1h-1zM1006,680h1v1h-1zM1009,680h1v1h-1zM1012,680h1v1h-1zM1015,680h1v1h-1zM1018,680h1v1h-1zM1021,680h1v1h-1zM1024,680h1v1h-1zM1027,680h1v1h-1zM1030,680h1v1h-1zM1033,680h1v1h-1zM1036,680h1v1h-1zM1039,680h1v1h-1zM1042,680h1v1h-1zM1045,680h1v1h-1zM1048,680h1v1h-1zM1051,680h1v1h-1zM1054,680h1v1h-1zM1057,680h1v1h-1zM1060,680h1v1h-1zM526,643h1v1h-1zM529,643h1v1h-1zM532,643h1v1h-1zM535,643h1v1h-1zM538,643h1v1h-1zM541,643h1v1h-1zM544,643h1v1h-1zM547,643h1v1h-1zM550,643h1v1h-1zM553,643h1v1h-1zM556,643h1v1h-1zM559,643h1v1h-1zM562,643h1v1h-1zM565,643h1v1h-1zM568,643h1v1h-1zM571,643h1v1h-1zM574,643h1v1h-1zM577,643h1v1h-1zM580,643h1v1h-1zM583,643h1v1h-1zM586,643h1v1h-1zM589,643h1v1h-1zM592,643h1v1h-1zM595,643h1v1h-1zM598,643h1v1h-1zM601,643h1v1h-1zM604,643h1v1h-1zM607,643h1v1h-1zM610,643h1v1h-1zM613,643h1v1h-1zM616,643h1v1h-1zM619,643h1v1h-1zM622,643h1v1h-1zM625,643h1v1h-1zM628,643h1v1h-1zM631,643h1v1h-1zM634,643h1v1h-1zM637,643h1v1h-1zM640,643h1v1h-1zM643,643h1v1h-1zM646,643h1v1h-1zM649,643h1v1h-1zM652,643h1v1h-1zM655,643h1v1h-1zM658,643h1v1h-1zM661,643h1v1h-1zM664,643h1v1h-1zM667,643h1v1h-1zM670,643h1v1h-1zM673,643h1v1h-1zM676,643h1v1h-1zM679,643h1v1h-1zM682,643h1v1h-1zM685,643h1v1h-1zM688,643h1v1h-1zM691,643h1v1h-1zM694,643h1v1h-1zM697,643h1v1h-1zM700,643h1v1h-1zM703,643h1v1h-1zM706,643h1v1h-1zM709,643h1v1h-1zM712,643h1v1h-1zM715,643h1v1h-1zM718,643h1v1h-1zM721,643h1v1h-1zM724,643h1v1h-1zM727,643h1v1h-1zM730,643h1v1h-1zM733,643h1v1h-1zM736,643h1v1h-1zM739,643h1v1h-1zM742,643h1v1h-1zM745,643h1v1h-1zM748,643h1v1h-1zM751,643h1v1h-1zM754,643h1v1h-1zM757,643h1v1h-1zM760,643h1v1h-1zM763,643h1v1h-1zM766,643h1v1h-1zM769,643h1v1h-1zM772,643h1v1h-1zM775,643h1v1h-1zM778,643h1v1h-1zM781,643h1v1h-1zM784,643h1v1h-1zM787,643h1v1h-1zM790,643h1v1h-1zM793,643h1v1h-1zM796,643h1v1h-1zM799,643h1v1h-1zM802,643h1v1h-1zM805,643h1v1h-1zM808,643h1v1h-1zM811,643h1v1h-1zM814,643h1v1h-1zM817,643h1v1h-1zM820,643h1v1h-1zM823,643h1v1h-1zM826,643h1v1h-1zM829,643h1v1h-1zM832,643h1v1h-1zM835,643h1v1h-1zM838,643h1v1h-1zM841,643h1v1h-1zM844,643h1v1h-1zM847,643h1v1h-1zM850,643h1v1h-1zM853,643h1v1h-1zM856,643h1v1h-1zM859,643h1v1h-1zM862,643h1v1h-1zM865,643h1v1h-1zM868,643h1v1h-1zM871,643h1v1h-1zM874,643h1v1h-1zM877,643h1v1h-1zM880,643h1v1h-1zM883,643h1v1h-1zM886,643h1v1h-1zM889,643h1v1h-1zM892,643h1v1h-1zM895,643h1v1h-1zM898,643h1v1h-1zM901,643h1v1h-1zM904,643h1v1h-1zM907,643h1v1h-1zM910,643h1v1h-1zM913,643h1v1h-1zM916,643h1v1h-1zM919,643h1v1h-1zM922,643h1v1h-1zM925,643h1v1h-1zM928,643h1v1h-1zM931,643h1v1h-1zM934,643h1v1h-1zM937,643h1v1h-1zM940,643h1v1h-1zM943,643h1v1h-1zM946,643h1v1h-1zM949,643h1v1h-1zM952,643h1v1h-1zM955,643h1v1h-1zM958,643h1v1h-1zM961,643h1v1h-1zM964,643h1v1h-1zM967,643h1v1h-1zM970,643h1v1h-1zM973,643h1v1h-1zM976,643h1v1h-1zM979,643h1v1h-1zM982,643h1v1h-1zM985,643h1v1h-1zM988,643h1v1h-1zM991,643h1v1h-1zM994,643h1v1h-1zM997,643h1v1h-1zM1000,643h1v1h-1zM1003,643h1v1h-1zM1006,643h1v1h-1zM1009,643h1v1h-1zM1012,643h1v1h-1zM1015,643h1v1h-1zM1018,643h1v1h-1zM1021,643h1v1h-1zM1024,643h1v1h-1zM1027,643h1v1h-1zM1030,643h1v1h-1zM1033,643h1v1h-1zM1036,643h1v1h-1zM1039,643h1v1h-1zM1042,643h1v1h-1zM1045,643h1v1h-1zM1048,643h1v1h-1zM1051,643h1v1h-1zM1054,643h1v1h-1zM1057,643h1v1h-1zM1060,643h1v1h-1zM526,607h1v1h-1zM529,607h1v1h-1zM532,607h1v1h-1zM535,607h1v1h-1zM538,607h1v1h-1zM541,607h1v1h-1zM544,607h1v1h-1zM547,607h1v1h-1zM550,607h1v1h-1zM553,607h1v1h-1zM556,607h1v1h-1zM559,607h1v1h-1zM562,607h1v1h-1zM565,607h1v1h-1zM568,607h1v1h-1zM571,607h1v1h-1zM574,607h1v1h-1zM577,607h1v1h-1zM580,607h1v1h-1zM583,607h1v1h-1zM586,607h1v1h-1zM589,607h1v1h-1zM592,607h1v1h-1zM595,607h1v1h-1zM598,607h1v1h-1zM601,607h1v1h-1zM604,607h1v1h-1zM607,607h1v1h-1zM610,607h1v1h-1zM613,607h1v1h-1zM616,607h1v1h-1zM619,607h1v1h-1zM622,607h1v1h-1zM625,607h1v1h-1zM628,607h1v1h-1zM631,607h1v1h-1zM634,607h1v1h-1zM637,607h1v1h-1zM640,607h1v1h-1zM643,607h1v1h-1zM646,607h1v1h-1zM649,607h1v1h-1zM652,607h1v1h-1zM655,607h1v1h-1zM658,607h1v1h-1zM661,607h1v1h-1zM664,607h1v1h-1zM667,607h1v1h-1zM670,607h1v1h-1zM673,607h1v1h-1zM676,607h1v1h-1zM679,607h1v1h-1zM682,607h1v1h-1zM685,607h1v1h-1zM688,607h1v1h-1zM691,607h1v1h-1zM694,607h1v1h-1zM697,607h1v1h-1zM700,607h1v1h-1zM703,607h1v1h-1zM706,607h1v1h-1zM709,607h1v1h-1zM712,607h1v1h-1zM715,607h1v1h-1zM718,607h1v1h-1zM721,607h1v1h-1zM724,607h1v1h-1zM727,607h1v1h-1zM730,607h1v1h-1zM733,607h1v1h-1zM736,607h1v1h-1zM739,607h1v1h-1zM742,607h1v1h-1zM745,607h1v1h-1zM748,607h1v1h-1zM751,607h1v1h-1zM754,607h1v1h-1zM757,607h1v1h-1zM760,607h1v1h-1zM763,607h1v1h-1zM766,607h1v1h-1zM769,607h1v1h-1zM772,607h1v1h-1zM775,607h1v1h-1zM778,607h1v1h-1zM781,607h1v1h-1zM784,607h1v1h-1zM787,607h1v1h-1zM790,607h1v1h-1zM793,607h1v1h-1zM796,607h1v1h-1zM799,607h1v1h-1zM802,607h1v1h-1zM805,607h1v1h-1zM808,607h1v1h-1zM811,607h1v1h-1zM814,607h1v1h-1zM817,607h1v1h-1zM820,607h1v1h-1zM823,607h1v1h-1zM826,607h1v1h-1zM829,607h1v1h-1zM832,607h1v1h-1zM835,607h1v1h-1zM838,607h1v1h-1zM841,607h1v1h-1zM844,607h1v1h-1zM847,607h1v1h-1zM850,607h1v1h-1zM853,607h1v1h-1zM856,607h1v1h-1zM859,607h1v1h-1zM862,607h1v1h-1zM865,607h1v1h-1zM868,607h1v1h-1zM871,607h1v1h-1zM874,607h1v1h-1zM877,607h1v1h-1zM880,607h1v1h-1zM883,607h1v1h-1zM886,607h1v1h-1zM889,607h1v1h-1zM892,607h1v1h-1zM895,607h1v1h-1zM898,607h1v1h-1zM901,607h1v1h-1zM904,607h1v1h-1zM907,607h1v1h-1zM910,607h1v1h-1zM913,607h1v1h-1zM916,607h1v1h-1zM919,607h1v1h-1zM922,607h1v1h-1zM925,607h1v1h-1zM928,607h1v1h-1zM931,607h1v1h-1zM934,607h1v1h-1zM937,607h1v1h-1zM940,607h1v1h-1zM943,607h1v1h-1zM946,607h1v1h-1zM949,607h1v1h-1zM952,607h1v1h-1zM955,607h1v1h-1zM958,607h1v1h-1zM961,607h1v1h-1zM964,607h1v1h-1zM967,607h1v1h-1zM970,607h1v1h-1zM973,607h1v1h-1zM976,607h1v1h-1zM979,607h1v1h-1zM982,607h1v1h-1zM985,607h1v1h-1zM988,607h1v1h-1zM991,607h1v1h-1zM994,607h1v1h-1zM997,607h1v1h-1zM1000,607h1v1h-1zM1003,607h1v1h-1zM1006,607h1v1h-1zM1009,607h1v1h-1zM1012,607h1v1h-1zM1015,607h1v1h-1zM1018,607h1v1h-1zM1021,607h1v1h-1zM1024,607h1v1h-1zM1027,607h1v1h-1zM1030,607h1v1h-1zM1033,607h1v1h-1zM1036,607h1v1h-1zM1039,607h1v1h-1zM1042,607h1v1h-1zM1045,607h1v1h-1zM1048,607h1v1h-1zM1051,607h1v1h-1zM1054,607h1v1h-1zM1057,607h1v1h-1zM1060,607h1v1h-1zM526,570h1v1h-1zM529,570h1v1h-1zM532,570h1v1h-1zM535,570h1v1h-1zM538,570h1v1h-1zM541,570h1v1h-1zM544,570h1v1h-1zM547,570h1v1h-1zM550,570h1v1h-1zM553,570h1v1h-1zM556,570h1v1h-1zM559,570h1v1h-1zM562,570h1v1h-1zM565,570h1v1h-1zM568,570h1v1h-1zM571,570h1v1h-1zM574,570h1v1h-1zM577,570h1v1h-1zM580,570h1v1h-1zM583,570h1v1h-1zM586,570h1v1h-1zM589,570h1v1h-1zM592,570h1v1h-1zM595,570h1v1h-1zM598,570h1v1h-1zM601,570h1v1h-1zM604,570h1v1h-1zM607,570h1v1h-1zM610,570h1v1h-1zM613,570h1v1h-1zM616,570h1v1h-1zM619,570h1v1h-1zM622,570h1v1h-1zM625,570h1v1h-1zM628,570h1v1h-1zM631,570h1v1h-1zM634,570h1v1h-1zM637,570h1v1h-1zM640,570h1v1h-1zM643,570h1v1h-1zM646,570h1v1h-1zM649,570h1v1h-1zM652,570h1v1h-1zM655,570h1v1h-1zM658,570h1v1h-1zM661,570h1v1h-1zM664,570h1v1h-1zM667,570h1v1h-1zM670,570h1v1h-1zM673,570h1v1h-1zM676,570h1v1h-1zM679,570h1v1h-1zM682,570h1v1h-1zM685,570h1v1h-1zM688,570h1v1h-1zM691,570h1v1h-1zM694,570h1v1h-1zM697,570h1v1h-1zM700,570h1v1h-1zM703,570h1v1h-1zM706,570h1v1h-1zM709,570h1v1h-1zM712,570h1v1h-1zM715,570h1v1h-1zM718,570h1v1h-1zM721,570h1v1h-1zM724,570h1v1h-1zM727,570h1v1h-1zM730,570h1v1h-1zM733,570h1v1h-1zM736,570h1v1h-1zM739,570h1v1h-1zM742,570h1v1h-1zM745,570h1v1h-1zM748,570h1v1h-1zM751,570h1v1h-1zM754,570h1v1h-1zM757,570h1v1h-1zM760,570h1v1h-1zM763,570h1v1h-1zM766,570h1v1h-1zM769,570h1v1h-1zM772,570h1v1h-1zM775,570h1v1h-1zM778,570h1v1h-1zM781,570h1v1h-1zM784,570h1v1h-1zM787,570h1v1h-1zM790,570h1v1h-1zM793,570h1v1h-1zM796,570h1v1h-1zM799,570h1v1h-1zM802,570h1v1h-1zM805,570h1v1h-1zM808,570h1v1h-1zM811,570h1v1h-1zM814,570h1v1h-1zM817,570h1v1h-1zM820,570h1v1h-1zM823,570h1v1h-1zM826,570h1v1h-1zM829,570h1v1h-1zM832,570h1v1h-1zM835,570h1v1h-1zM838,570h1v1h-1zM841,570h1v1h-1zM844,570h1v1h-1zM847,570h1v1h-1zM850,570h1v1h-1zM853,570h1v1h-1zM856,570h1v1h-1zM859,570h1v1h-1zM862,570h1v1h-1zM865,570h1v1h-1zM868,570h1v1h-1zM871,570h1v1h-1zM874,570h1v1h-1zM877,570h1v1h-1zM880,570h1v1h-1zM883,570h1v1h-1zM886,570h1v1h-1zM889,570h1v1h-1zM892,570h1v1h-1zM895,570h1v1h-1zM898,570h1v1h-1zM901,570h1v1h-1zM904,570h1v1h-1zM907,570h1v1h-1zM910,570h1v1h-1zM913,570h1v1h-1zM916,570h1v1h-1zM919,570h1v1h-1zM922,570h1v1h-1zM925,570h1v1h-1zM928,570h1v1h-1zM931,570h1v1h-1zM934,570h1v1h-1zM937,570h1v1h-1zM940,570h1v1h-1zM943,570h1v1h-1zM946,570h1v1h-1zM949,570h1v1h-1zM952,570h1v1h-1zM955,570h1v1h-1zM958,570h1v1h-1zM961,570h1v1h-1zM964,570h1v1h-1zM967,570h1v1h-1zM970,570h1v1h-1zM973,570h1v1h-1zM976,570h1v1h-1zM979,570h1v1h-1zM982,570h1v1h-1zM985,570h1v1h-1zM988,570h1v1h-1zM991,570h1v1h-1zM994,570h1v1h-1zM997,570h1v1h-1zM1000,570h1v1h-1zM1003,570h1v1h-1zM1006,570h1v1h-1zM1009,570h1v1h-1zM1012,570h1v1h-1zM1015,570h1v1h-1zM1018,570h1v1h-1zM1021,570h1v1h-1zM1024,570h1v1h-1zM1027,570h1v1h-1zM1030,570h1v1h-1zM1033,570h1v1h-1zM1036,570h1v1h-1zM1039,570h1v1h-1zM1042,570h1v1h-1zM1045,570h1v1h-1zM1048,570h1v1h-1zM1051,570h1v1h-1zM1054,570h1v1h-1zM1057,570h1v1h-1zM1060,570h1v1h-1zM526,533h1v1h-1zM529,533h1v1h-1zM532,533h1v1h-1zM535,533h1v1h-1zM538,533h1v1h-1zM541,533h1v1h-1zM544,533h1v1h-1zM547,533h1v1h-1zM550,533h1v1h-1zM553,533h1v1h-1zM556,533h1v1h-1zM559,533h1v1h-1zM562,533h1v1h-1zM565,533h1v1h-1zM568,533h1v1h-1zM571,533h1v1h-1zM574,533h1v1h-1zM577,533h1v1h-1zM580,533h1v1h-1zM583,533h1v1h-1zM586,533h1v1h-1zM589,533h1v1h-1zM592,533h1v1h-1zM595,533h1v1h-1zM598,533h1v1h-1zM601,533h1v1h-1zM604,533h1v1h-1zM607,533h1v1h-1zM610,533h1v1h-1zM613,533h1v1h-1zM616,533h1v1h-1zM619,533h1v1h-1zM622,533h1v1h-1zM625,533h1v1h-1zM628,533h1v1h-1zM631,533h1v1h-1zM634,533h1v1h-1zM637,533h1v1h-1zM640,533h1v1h-1zM643,533h1v1h-1zM646,533h1v1h-1zM649,533h1v1h-1zM652,533h1v1h-1zM655,533h1v1h-1zM658,533h1v1h-1zM661,533h1v1h-1zM664,533h1v1h-1zM667,533h1v1h-1zM670,533h1v1h-1zM673,533h1v1h-1zM676,533h1v1h-1zM679,533h1v1h-1zM682,533h1v1h-1zM685,533h1v1h-1zM688,533h1v1h-1zM691,533h1v1h-1zM694,533h1v1h-1zM697,533h1v1h-1zM700,533h1v1h-1zM703,533h1v1h-1zM706,533h1v1h-1zM709,533h1v1h-1zM712,533h1v1h-1zM715,533h1v1h-1zM718,533h1v1h-1zM721,533h1v1h-1zM724,533h1v1h-1zM727,533h1v1h-1zM730,533h1v1h-1zM733,533h1v1h-1zM736,533h1v1h-1zM739,533h1v1h-1zM742,533h1v1h-1zM745,533h1v1h-1zM748,533h1v1h-1zM751,533h1v1h-1zM754,533h1v1h-1zM757,533h1v1h-1zM760,533h1v1h-1zM763,533h1v1h-1zM766,533h1v1h-1zM769,533h1v1h-1zM772,533h1v1h-1zM775,533h1v1h-1zM778,533h1v1h-1zM781,533h1v1h-1zM784,533h1v1h-1zM787,533h1v1h-1zM790,533h1v1h-1zM793,533h1v1h-1zM796,533h1v1h-1zM799,533h1v1h-1zM802,533h1v1h-1zM805,533h1v1h-1zM808,533h1v1h-1zM811,533h1v1h-1zM814,533h1v1h-1zM817,533h1v1h-1zM820,533h1v1h-1zM823,533h1v1h-1zM826,533h1v1h-1zM829,533h1v1h-1zM832,533h1v1h-1zM835,533h1v1h-1zM838,533h1v1h-1zM841,533h1v1h-1zM844,533h1v1h-1zM847,533h1v1h-1zM850,533h1v1h-1zM853,533h1v1h-1zM856,533h1v1h-1zM859,533h1v1h-1zM862,533h1v1h-1zM865,533h1v1h-1zM868,533h1v1h-1zM871,533h1v1h-1zM874,533h1v1h-1zM877,533h1v1h-1zM880,533h1v1h-1zM883,533h1v1h-1zM886,533h1v1h-1zM889,533h1v1h-1zM892,533h1v1h-1zM895,533h1v1h-1zM898,533h1v1h-1zM901,533h1v1h-1zM904,533h1v1h-1zM907,533h1v1h-1zM910,533h1v1h-1zM913,533h1v1h-1zM916,533h1v1h-1zM919,533h1v1h-1zM922,533h1v1h-1zM925,533h1v1h-1zM928,533h1v1h-1zM931,533h1v1h-1zM934,533h1v1h-1zM937,533h1v1h-1zM940,533h1v1h-1zM943,533h1v1h-1zM946,533h1v1h-1zM949,533h1v1h-1zM952,533h1v1h-1zM955,533h1v1h-1zM958,533h1v1h-1zM961,533h1v1h-1zM964,533h1v1h-1zM967,533h1v1h-1zM970,533h1v1h-1zM973,533h1v1h-1zM976,533h1v1h-1zM979,533h1v1h-1zM982,533h1v1h-1zM985,533h1v1h-1zM988,533h1v1h-1zM991,533h1v1h-1zM994,533h1v1h-1zM997,533h1v1h-1zM1000,533h1v1h-1zM1003,533h1v1h-1zM1006,533h1v1h-1zM1009,533h1v1h-1zM1012,533h1v1h-1zM1015,533h1v1h-1zM1018,533h1v1h-1zM1021,533h1v1h-1zM1024,533h1v1h-1zM1027,533h1v1h-1zM1030,533h1v1h-1zM1033,533h1v1h-1zM1036,533h1v1h-1zM1039,533h1v1h-1zM1042,533h1v1h-1zM1045,533h1v1h-1zM1048,533h1v1h-1zM1051,533h1v1h-1zM1054,533h1v1h-1zM1057,533h1v1h-1zM1060,533h1v1h-1zM526,497h1v1h-1zM529,497h1v1h-1zM532,497h1v1h-1zM535,497h1v1h-1zM538,497h1v1h-1zM541,497h1v1h-1zM544,497h1v1h-1zM547,497h1v1h-1zM550,497h1v1h-1zM553,497h1v1h-1zM556,497h1v1h-1zM559,497h1v1h-1zM562,497h1v1h-1zM565,497h1v1h-1zM568,497h1v1h-1zM571,497h1v1h-1zM574,497h1v1h-1zM577,497h1v1h-1zM580,497h1v1h-1zM583,497h1v1h-1zM586,497h1v1h-1zM589,497h1v1h-1zM592,497h1v1h-1zM595,497h1v1h-1zM598,497h1v1h-1zM601,497h1v1h-1zM604,497h1v1h-1zM607,497h1v1h-1zM610,497h1v1h-1zM613,497h1v1h-1zM616,497h1v1h-1zM619,497h1v1h-1zM622,497h1v1h-1zM625,497h1v1h-1zM628,497h1v1h-1zM631,497h1v1h-1zM634,497h1v1h-1zM637,497h1v1h-1zM640,497h1v1h-1zM643,497h1v1h-1zM646,497h1v1h-1zM649,497h1v1h-1zM652,497h1v1h-1zM655,497h1v1h-1zM658,497h1v1h-1zM661,497h1v1h-1zM664,497h1v1h-1zM667,497h1v1h-1zM670,497h1v1h-1zM673,497h1v1h-1zM676,497h1v1h-1zM679,497h1v1h-1zM682,497h1v1h-1zM685,497h1v1h-1zM688,497h1v1h-1zM691,497h1v1h-1zM694,497h1v1h-1zM697,497h1v1h-1zM700,497h1v1h-1zM703,497h1v1h-1zM706,497h1v1h-1zM709,497h1v1h-1zM712,497h1v1h-1zM715,497h1v1h-1zM718,497h1v1h-1zM721,497h1v1h-1zM724,497h1v1h-1zM727,497h1v1h-1zM730,497h1v1h-1zM733,497h1v1h-1zM736,497h1v1h-1zM739,497h1v1h-1zM742,497h1v1h-1zM745,497h1v1h-1zM748,497h1v1h-1zM751,497h1v1h-1zM754,497h1v1h-1zM757,497h1v1h-1zM760,497h1v1h-1zM763,497h1v1h-1zM766,497h1v1h-1zM769,497h1v1h-1zM772,497h1v1h-1zM775,497h1v1h-1zM778,497h1v1h-1zM781,497h1v1h-1zM784,497h1v1h-1zM787,497h1v1h-1zM790,497h1v1h-1zM793,497h1v1h-1zM796,497h1v1h-1zM799,497h1v1h-1zM802,497h1v1h-1zM805,497h1v1h-1zM808,497h1v1h-1zM811,497h1v1h-1zM814,497h1v1h-1zM817,497h1v1h-1zM820,497h1v1h-1zM823,497h1v1h-1zM826,497h1v1h-1zM829,497h1v1h-1zM832,497h1v1h-1zM835,497h1v1h-1zM838,497h1v1h-1zM841,497h1v1h-1zM844,497h1v1h-1zM847,497h1v1h-1zM850,497h1v1h-1zM853,497h1v1h-1zM856,497h1v1h-1zM859,497h1v1h-1zM862,497h1v1h-1zM865,497h1v1h-1zM868,497h1v1h-1zM871,497h1v1h-1zM874,497h1v1h-1zM877,497h1v1h-1zM880,497h1v1h-1zM883,497h1v1h-1zM886,497h1v1h-1zM889,497h1v1h-1zM892,497h1v1h-1zM895,497h1v1h-1zM898,497h1v1h-1zM901,497h1v1h-1zM904,497h1v1h-1zM907,497h1v1h-1zM910,497h1v1h-1zM913,497h1v1h-1zM916,497h1v1h-1zM919,497h1v1h-1zM922,497h1v1h-1zM925,497h1v1h-1zM928,497h1v1h-1zM931,497h1v1h-1zM934,497h1v1h-1zM937,497h1v1h-1zM940,497h1v1h-1zM943,497h1v1h-1zM946,497h1v1h-1zM949,497h1v1h-1zM952,497h1v1h-1zM955,497h1v1h-1zM958,497h1v1h-1zM961,497h1v1h-1zM964,497h1v1h-1zM967,497h1v1h-1zM970,497h1v1h-1zM973,497h1v1h-1zM976,497h1v1h-1zM979,497h1v1h-1zM982,497h1v1h-1zM985,497h1v1h-1zM988,497h1v1h-1zM991,497h1v1h-1zM994,497h1v1h-1zM997,497h1v1h-1zM1000,497h1v1h-1zM1003,497h1v1h-1zM1006,497h1v1h-1zM1009,497h1v1h-1zM1012,497h1v1h-1zM1015,497h1v1h-1zM1018,497h1v1h-1zM1021,497h1v1h-1zM1024,497h1v1h-1zM1027,497h1v1h-1zM1030,497h1v1h-1zM1033,497h1v1h-1zM1036,497h1v1h-1zM1039,497h1v1h-1zM1042,497h1v1h-1zM1045,497h1v1h-1zM1048,497h1v1h-1zM1051,497h1v1h-1zM1054,497h1v1h-1zM1057,497h1v1h-1zM1060,497h1v1h-1z" fill="#000"/><path d="M524,730h1v10h-1zM524,481h1v9h-1zM537,735h1v5h-1zM537,481h1v3h-1zM551,735h1v5h-1zM551,481h1v3h-1zM564,735h1v5h-1zM564,481h1v3h-1zM577,730h1v10h-1zM577,481h1v9h-1zM591,735h1v5h-1zM591,481h1v3h-1zM604,735h1v5h-1zM604,481h1v3h-1zM618,735h1v5h-1zM618,481h1v3h-1zM631,730h1v10h-1zM631,481h1v9h-1zM645,735h1v5h-1zM645,481h1v3h-1zM658,735h1v5h-1zM658,481h1v3h-1zM671,735h1v5h-1zM671,481h1v3h-1zM685,730h1v10h-1zM685,481h1v9h-1zM698,735h1v5h-1zM698,481h1v3h-1zM712,735h1v5h-1zM712,481h1v3h-1zM725,735h1v5h-1zM725,481h1v3h-1zM739,730h1v10h-1zM739,481h1v9h-1zM752,735h1v5h-1zM752,481h1v3h-1zM765,735h1v5h-1zM765,481h1v3h-1zM779,735h1v5h-1zM779,481h1v3h-1zM792,730h1v10h-1zM792,481h1v9h-1zM806,735h1v5h-1zM806,481h1v3h-1zM819,735h1v5h-1zM819,481h1v3h-1zM832,735h1v5h-1zM832,481h1v3h-1zM846,730h1v10h-1zM846,481h1v9h-1zM859,735h1v5h-1zM859,481h1v3h-1zM873,735h1v5h-1zM873,481h1v3h-1zM886,735h1v5h-1zM886,481h1v3h-1zM900,730h1v10h-1zM900,481h1v9h-1zM913,735h1v5h-1zM913,481h1v3h-1zM926,735h1v5h-1zM926,481h1v3h-1zM940,735h1v5h-1zM940,481h1v3h-1zM953,730h1v10h-1zM953,481h1v9h-1zM967,735h1v5h-1zM967,481h1v3h-1zM980,735h1v5h-1zM980,481h1v3h-1zM994,735h1v5h-1zM994,481h1v3h-1zM1007,730h1v10h-1zM1007,481h1v9h-1zM1020,735h1v5h-1zM1020,481h1v3h-1zM1034,735h1v5h-1zM1034,481h1v3h-1zM1047,735h1v5h-1zM1047,481h1v3h-1zM1061,730h1v10h-1zM1061,481h1v9h-1zM524,739h7v1h-7zM1054,739h7v1h-7zM524,731h7v1h-7zM1054,731h7v1h-7zM524,724h7v1h-7zM1054,724h7v1h-7zM524,717h13v1h-13zM1047,717h14v1h-14zM524,709h7v1h-7zM1054,709h7v1h-7zM524,702h7v1h-7zM1054,702h7v1h-7zM524,695h7v1h-7zM1054,695h7v1h-7zM524,687h7v1h-7zM1054,687h7v1h-7zM524,680h13v1h-13zM1047,680h14v1h-14zM524,673h7v1h-7zM1054,673h7v1h-7zM524,665h7v1h-7zM1054,665h7v1h-7zM524,658h7v1h-7zM1054,658h7v1h-7zM524,651h7v1h-7zM1054,651h7v1h-7zM524,643h13v1h-13zM1047,643h14v1h-14zM524,636h7v1h-7zM1054,636h7v1h-7zM524,629h7v1h-7zM1054,629h7v1h-7zM524,621h7v1h-7zM1054,621h7v1h-7zM524,614h7v1h-7zM1054,614h7v1h-7zM524,607h13v1h-13zM1047,607h14v1h-14zM524,599h7v1h-7zM1054,599h7v1h-7zM524,592h7v1h-7zM1054,592h7v1h-7zM524,585h7v1h-7zM1054,585h7v1h-7zM524,577h7v1h-7zM1054,577h7v1h-7zM524,570h13v1h-13zM1047,570h14v1h-14zM524,563h7v1h-7zM1054,563h7v1h-7zM524,555h7v1h-7zM1054,555h7v1h-7zM524,548h7v1h-7zM1054,548h7v1h-7zM524,541h7v1h-7zM1054,541h7v1h-7zM524,533h13v1h-13zM1047,533h14v1h-14zM524,526h7v1h-7zM1054,526h7v1h-7zM524,519h7v1h-7zM1054,519h7v1h-7zM524,511h7v1h-7zM1054,511h7v1h-7zM524,504h7v1h-7zM1054,504h7v1h-7zM524,497h13v1h-13zM1047,497h14v1h-14zM524,489h7v1h-7zM1054,489h7v1h-7zM524,482h7v1h-7zM1054,482h7v1h-7zM524,480h538v1h-538zM524,739h538v1h-538zM524,480h1v260h-1zM1061,480h1v260h-1z" fill="#000"/><path d="M524.50,622.10 L526.81,622.24 L529.13,622.39 L531.44,622.54 L533.75,622.70 L536.06,622.87 L538.38,623.04 L540.69,623.22 L543.00,623.41 L545.31,623.60 L547.63,623.80 L549.94,624.00 L552.25,624.22 L554.57,624.43 L556.88,624.66 L559.19,624.89 L561.50,625.12 L563.82,625.37 L566.13,625.61 L568.44,625.87 L570.75,626.13 L573.07,626.39 L575.38,626.66 L577.69,626.93 L580.01,627.21 L582.32,627.50 L584.63,627.79 L586.94,628.08 L589.26,628.38 L591.57,628.69 L593.88,629.00 L596.19,629.31 L598.51,629.63 L600.82,629.95 L603.13,630.28 L605.44,630.61 L607.76,630.95 L610.07,631.28 L612.38,631.63 L614.70,631.98 L617.01,632.33 L619.32,632.68 L621.63,633.04 L623.95,633.40 L626.26,633.76 L628.57,634.13 L630.88,634.50 L633.20,634.88 L635.51,635.26 L637.82,635.64 L640.14,636.02 L642.45,636.41 L644.76,636.80 L647.07,637.19 L649.39,637.58 L651.70,637.98 L654.01,638.38 L656.32,638.78 L658.64,639.18 L660.95,639.59 L663.26,640.00 L665.58,640.41 L667.89,640.82 L670.20,641.23 L672.51,641.65 L674.83,642.07 L677.14,642.52 L679.45,642.98 L681.76,643.48 L684.08,644.01 L686.39,644.59 L688.70,645.21 L691.02,645.88 L693.33,646.59 L695.64,647.33 L697.95,648.10 L700.27,648.89 L702.58,649.71 L704.89,650.54 L707.20,651.38 L709.52,652.23 L711.83,653.09 L714.14,653.96 L716.45,654.84 L718.77,655.73 L721.08,656.62 L723.39,657.53 L725.71,658.45 L728.02,659.40 L730.33,660.37 L732.64,661.37 L734.96,662.42 L737.27,663.50 L739.58,664.64 L741.89,665.83 L744.21,667.09 L746.52,668.41 L748.83,669.81 L751.15,671.29 L753.46,672.85 L755.77,674.50 L758.08,676.25 L760.40,678.11 L762.71,680.07 L765.02,682.15 L767.33,684.34 L769.65,686.66 L771.96,689.12 L774.27,691.71 L776.59,694.45 L778.90,697.33 L781.21,700.38 L783.52,703.66 L785.84,707.28 L788.15,711.35 L790.46,715.96 L792.77,721.24 L795.09,727.27 L797.40,733.76 L800.50,739.50 L800.50,697.50 L801.50,697.50 L802.50,524.50 L803.50,524.50 L803.50,480.50" stroke="#f00" stroke-width="1" fill="none"/><path d="M803.50,480.50 L805.49,486.20 L807.39,491.46 L809.28,496.35 L811.18,500.93 L813.07,505.24 L814.97,509.33 L816.86,513.26 L818.76,517.05 L820.65,520.75 L822.55,524.40 L824.44,528.05 L826.34,531.71 L828.23,535.37 L830.13,539.00 L832.02,542.60 L833.92,546.16 L835.81,549.65 L837.71,553.06 L839.60,556.38 L841.50,559.61 L843.39,562.75 L845.29,565.82 L847.18,568.83 L849.08,571.78 L850.97,574.69 L852.87,577.58 L854.76,580.44 L856.66,583.30 L858.55,586.16 L860.45,589.04 L862.34,591.94 L864.24,594.85 L866.13,597.76 L868.03,600.69 L869.92,603.61 L871.82,606.52 L873.71,609.42 L875.61,612.31 L877.50,615.17 L879.40,618.00 L881.29,620.79 L883.19,623.55 L885.08,626.27 L886.98,628.93 L888.87,631.55 L890.77,634.13 L892.66,636.68 L894.56,639.21 L896.45,641.73 L898.35,644.24 L900.24,646.74 L902.14,649.26 L904.03,651.79 L905.93,654.35 L907.82,656.93 L909.72,659.56 L911.61,662.23 L913.51,664.96 L915.40,667.75 L917.30,670.60 L919.19,673.53 L921.09,676.52 L922.98,679.59 L924.88,682.73 L926.77,685.95 L928.67,689.23 L930.56,692.59 L932.46,696.02 L934.35,699.52 L936.25,703.10 L938.14,706.75 L940.04,710.48 L941.93,714.28 L943.83,718.16 L945.72,722.11 L947.62,726.14 L949.51,730.24 L951.41,734.42 L953.50,739.50 L953.50,697.50 L954.50,697.50 L955.50,524.50 L956.50,524.50 L956.50,480.50" stroke="#f00" stroke-width="1" fill="none"/><path d="M956.50,480.50 L958.03,481.91 L959.80,483.95 L961.58,486.19 L963.35,488.59 L965.13,491.10 L966.90,493.70 L968.68,496.35 L970.45,499.01 L972.23,501.64 L974.00,504.20 L975.78,506.65 L977.56,508.97 L979.33,511.11 L981.11,513.09 L982.88,514.97 L984.66,516.75 L986.43,518.45 L988.21,520.06 L989.98,521.60 L991.76,523.06 L993.53,524.45 L995.31,525.78 L997.08,527.06 L998.86,528.28 L1000.64,529.46 L1002.41,530.59 L1004.19,531.69 L1005.96,532.76 L1007.74,533.81 L1009.51,534.83 L1011.29,535.84 L1013.06,536.82 L1014.84,537.78 L1016.61,538.72 L1018.39,539.64 L1020.17,540.53 L1021.94,541.41 L1023.72,542.26 L1025.49,543.09 L1027.27,543.91 L1029.04,544.70 L1030.82,545.46 L1032.59,546.21 L1034.37,546.93 L1036.14,547.64 L1037.92,548.32 L1039.69,548.98 L1041.47,549.62 L1043.25,550.23 L1045.02,550.82 L1046.80,551.40 L1048.57,551.94 L1050.35,552.47 L1052.12,552.98 L1053.90,553.46 L1055.67,553.92 L1057.45,554.36 L1059.22,554.77 L1061.00,555.17" stroke="#f00" stroke-width="1" fill="none"/><path d="M830.5,528 V553 M818,540.5 H843" stroke="#f00" stroke-width="1"/></svg><svg style="position:absolute;left:0;top:0" width="1104" height="895" viewBox="0 0 1104 895"><g font-family='"Liberation Sans", sans-serif' font-weight="bold" font-size="12" letter-spacing="0.8" fill="#000"><text x="524.9" y="752.3" text-anchor="middle">1</text><text x="577.9" y="752.3" text-anchor="middle">1.2</text><text x="631.9" y="752.3" text-anchor="middle">1.4</text><text x="685.9" y="752.3" text-anchor="middle">1.6</text><text x="739.9" y="752.3" text-anchor="middle">1.8</text><text x="792.9" y="752.3" text-anchor="middle">2</text><text x="846.9" y="752.3" text-anchor="middle">2.2</text><text x="900.9" y="752.3" text-anchor="middle">2.4</text><text x="953.9" y="752.3" text-anchor="middle">2.6</text><text x="1007.9" y="752.3" text-anchor="middle">2.8</text><text x="1061.9" y="752.3" text-anchor="middle">3</text><text x="521.8" y="721.9" text-anchor="end">&#8722;150</text><text x="521.8" y="684.9" text-anchor="end">&#8722;100</text><text x="521.8" y="647.9" text-anchor="end">&#8722;50</text><text x="521.8" y="611.9" text-anchor="end">0</text><text x="521.8" y="574.9" text-anchor="end">50</text><text x="521.8" y="537.9" text-anchor="end">100</text><text x="521.8" y="501.9" text-anchor="end">150</text></g><text x="791.5" y="777" text-anchor="middle" font-family='"Liberation Sans", sans-serif' font-weight="bold" font-size="14">Frequency (Hz)</text><text transform="translate(484.3,608) rotate(-90)" text-anchor="middle" font-family='"Liberation Sans", sans-serif' font-weight="bold" font-size="15">Phase (deg)</text><text x="473" y="799.8" font-family='"Liberation Sans", sans-serif' font-weight="bold" font-size="13">T0=15/07/2024 15:32:39</text><text x="1080.6" y="799.8" text-anchor="end" font-family='"Liberation Sans", sans-serif' font-weight="bold" font-size="13">K1VISETMXP.txt</text><path d="M1049,493h3v16h-177v-3h174z" fill="#000" shape-rendering="crispEdges"/><rect x="869.5" y="487.5" width="179" height="18" fill="#fff" stroke="#000" stroke-width="1" shape-rendering="crispEdges"/><path d="M875,496.5 H907" stroke="#f00" stroke-width="1" shape-rendering="crispEdges"/><text x="914" y="500" font-family='"Liberation Sans", sans-serif' font-weight="bold" font-size="11">current_out / current_in</text><path d="M465,448h2v15h152v-15h1v17h-155z" fill="#000" shape-rendering="crispEdges"/><rect x="467.5" y="445.5" width="151" height="17" fill="#f2f2f2" stroke="#000" stroke-width="1" shape-rendering="crispEdges"/><text x="542.5" y="459.6" text-anchor="middle" font-family='"Liberation Sans", sans-serif' font-weight="bold" font-size="14">Transfer function</text></svg>
</div></body></html>
